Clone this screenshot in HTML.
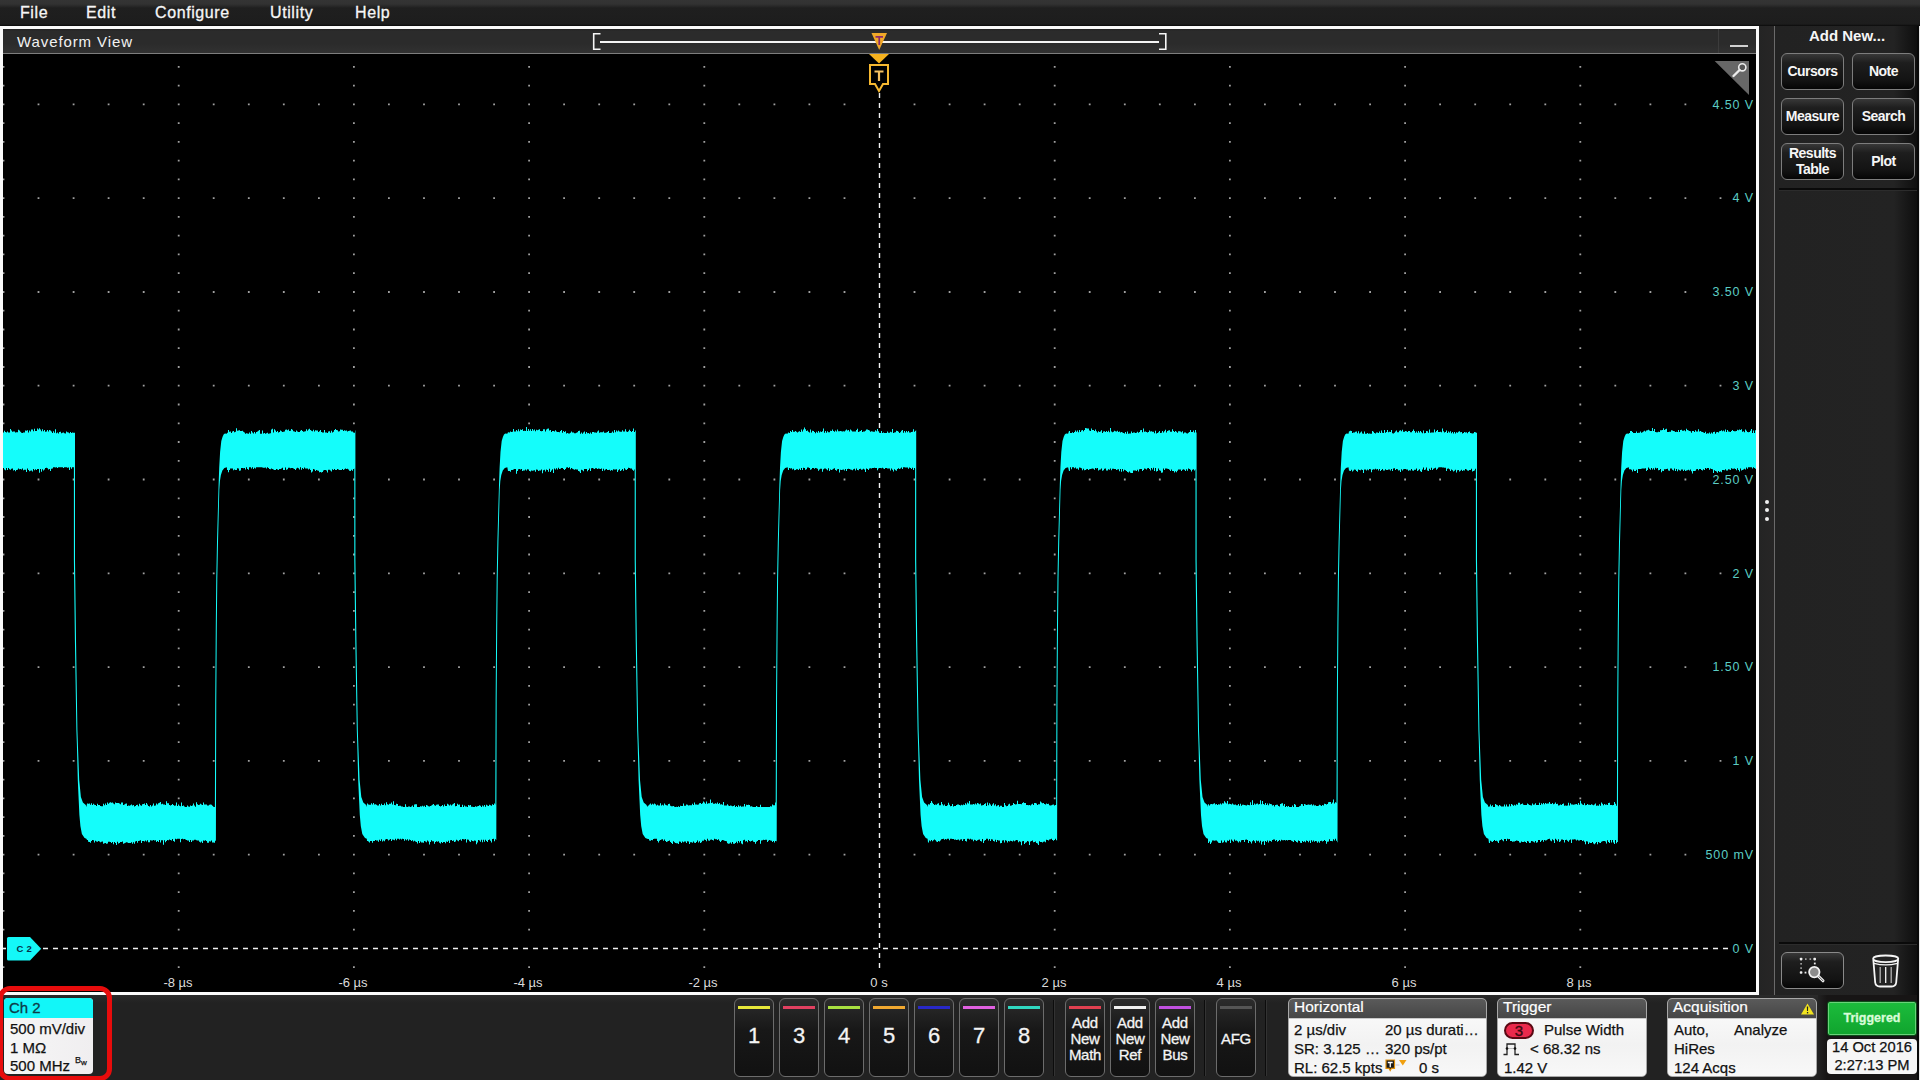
<!DOCTYPE html>
<html><head><meta charset="utf-8">
<style>
*{box-sizing:border-box;margin:0;padding:0}
html,body{width:1920px;height:1080px;overflow:hidden;background:#222;font-family:"Liberation Sans",sans-serif;position:relative}
.abs{position:absolute}
#menubar{position:absolute;left:0;top:0;width:1920px;height:26px;background:linear-gradient(#343434 0,#323232 4px,#1f1f1f 8px,#1d1d1d 24px,#0a0a0a 26px)}
.mi{position:absolute;top:4px;color:#f6f6f6;font-size:16px;line-height:18px;letter-spacing:0.6px;-webkit-text-stroke:0.3px #f6f6f6}
#frame{position:absolute;left:0;top:26px;width:1759px;height:969px;border:3px solid #fafafa;background:#000}
#titlebar{position:absolute;left:0;top:0;width:1753px;height:25px;background:linear-gradient(#222 0,#2b2b2b 2px,#2b2b2b 60%,#313131);border-bottom:1px solid #7e7e7e}
#ttl{position:absolute;left:14px;top:4px;color:#f2f2f2;font-size:15px;letter-spacing:0.9px;line-height:17px}
.yl{position:absolute;right:2px;width:90px;text-align:right;color:#5ccdc4;font-size:12.5px;letter-spacing:0.9px;line-height:14px}
.xl{position:absolute;top:946px;width:80px;text-align:center;color:#dcdcdc;font-size:13px;line-height:16px}
#rpanel{position:absolute;left:1774px;top:26px;width:146px;height:969px;background:linear-gradient(90deg,#222 0,#232323 82%,#0e0e0e 98%,#181818 100%);border-left:1px solid #6a6a6a}
.rb{position:absolute;width:63px;height:37px;border:1px solid #7d7d7d;border-radius:6px;background:linear-gradient(#383838 0%,#1e1e1e 25%,#131313 75%,#050505);color:#f6f6f6;font-size:14px;font-weight:bold;text-align:center;line-height:35px;letter-spacing:-0.5px}
#gutter{position:absolute;left:1759px;top:26px;width:15px;height:969px;background:linear-gradient(90deg,#242424,#272626)}
.dot3{position:absolute;left:1765px;width:4px;height:4px;border-radius:2px;background:#f0f0f0}
.cb{position:absolute;top:998px;width:40px;height:79px;border:1px solid #6c6c6c;border-radius:6px;background:linear-gradient(#2c2c2c,#181818 40%,#111);}
.cb i{position:absolute;left:3px;top:7px;width:32px;height:2.5px}
.cbn{position:absolute;left:0;top:24px;width:38px;text-align:center;color:#f4f4f4;font-size:22px;line-height:26px;-webkit-text-stroke:0.3px #f4f4f4}
.cba{position:absolute;left:-3px;top:16px;width:44px;text-align:center;color:#f4f4f4;font-size:15px;line-height:16px;letter-spacing:-0.3px;-webkit-text-stroke:0.3px #f4f4f4}
.cbafg{position:absolute;left:-2px;top:31px;width:42px;text-align:center;color:#f4f4f4;font-size:15px;line-height:18px;letter-spacing:-0.3px;-webkit-text-stroke:0.3px #f4f4f4}
.sep{position:absolute;top:1000px;width:2px;height:76px;background:#0c0c0c;border-right:1px solid #333}
.pn{position:absolute;top:998px;height:79px;border-radius:5px;border:1px solid #a8a8a8;background:linear-gradient(#fcfcfc,#f2f2f2 60%,#f8f8f8);overflow:hidden}
.pnh{position:absolute;left:0;top:0;right:0;height:20px;background:linear-gradient(#5a5a5a,#464646);color:#fff;font-size:15.5px;line-height:16px;padding-left:5px;border-bottom:1px solid #c8c8c8;-webkit-text-stroke:0.2px #fff}
.pt{position:absolute;color:#111;font-size:15px;line-height:18px;white-space:nowrap;-webkit-text-stroke:0.25px #111}
</style></head><body>
<div id="menubar">
 <div class="mi" style="left:20px">File</div>
 <div class="mi" style="left:86px">Edit</div>
 <div class="mi" style="left:155px">Configure</div>
 <div class="mi" style="left:270px">Utility</div>
 <div class="mi" style="left:355px">Help</div>
</div>

<div id="gutter"></div>
<div class="dot3" style="top:500px"></div>
<div class="dot3" style="top:508px"></div>
<div class="dot3" style="top:517px"></div>

<div id="rpanel">
 <div class="abs" style="left:0;top:0;width:144px;text-align:center;color:#f6f6f6;font-weight:bold;font-size:15px;line-height:18px;padding-top:1px;">Add New...</div>
 <div class="rb" style="left:6px;top:27px">Cursors</div>
 <div class="rb" style="left:77px;top:27px">Note</div>
 <div class="rb" style="left:6px;top:72px">Measure</div>
 <div class="rb" style="left:77px;top:72px">Search</div>
 <div class="rb" style="left:6px;top:117px;line-height:16px;padding-top:1px">Results<br>Table</div>
 <div class="rb" style="left:77px;top:117px">Plot</div>
 <div class="abs" style="left:4px;top:162px;width:138px;height:3px;background:#0a0a0a;border-bottom:1px solid #2c2c2c"></div>
 <div class="abs" style="left:4px;top:916px;width:138px;height:3px;background:#0a0a0a;border-bottom:1px solid #2c2c2c"></div>
 <div class="rb" style="left:6px;top:926px;height:37px;border-color:#8a8a8a"></div>
 <svg class="abs" style="left:0;top:0" width="146" height="969">
  <g fill="#f0f0f0">
   <rect x="24.8" y="931.8" width="2.6" height="2.6" rx="0.8"/><rect x="38.4" y="931.8" width="2.6" height="2.6" rx="0.8"/><rect x="24.8" y="945.2" width="2.6" height="2.6" rx="0.8"/>
   <rect x="30" y="932.3" width="1.6" height="1.6" fill="#aaa"/><rect x="34.5" y="932.3" width="1.6" height="1.6" fill="#aaa"/>
   <rect x="25.3" y="937" width="1.6" height="1.6" fill="#aaa"/><rect x="25.3" y="941.3" width="1.6" height="1.6" fill="#aaa"/>
   <rect x="38.9" y="936.6" width="1.8" height="1.8"/><rect x="29.6" y="945.7" width="1.8" height="1.8"/>
  </g>
  <line x1="43.2" y1="950" x2="48" y2="954.8" stroke="#f2f2f2" stroke-width="3" stroke-linecap="round"/>
  <line x1="43.2" y1="950" x2="48" y2="954.8" stroke="#333" stroke-width="0.8" stroke-linecap="round"/>
  <circle cx="39.3" cy="946.1" r="5.2" fill="#8c8c8c" stroke="#f4f4f4" stroke-width="1.8"/>
  <g fill="none" stroke="#f6f6f6" stroke-width="1.8">
   <ellipse cx="110.7" cy="932.8" rx="12.6" ry="3.3"/>
   <path d="M98.3 933.5 L100.2 956.5 Q100.6 960.3 105 960.5 L116.5 960.5 Q120.8 960.3 121.2 956.5 L123.1 933.5"/>
   <path d="M99 937.3 Q110.7 940.5 122.4 937.3" stroke-width="1.2"/>
  </g>
  <path d="M105.2 941 V957 M116.2 941 V957" stroke="#b4b4b4" stroke-width="1.3"/>
  <path d="M110.7 941 V957" stroke="#f4f4f4" stroke-width="1.3"/>
 </svg>
</div>

<div id="frame">
 <svg width="1753" height="963" viewBox="3 29 1753 963" style="position:absolute;left:0;top:0">
  <rect x="3" y="54" width="1753" height="938" fill="#000"/>
  <path d='M2.6 103.5 h1.8v1.8h-1.8z M37.6 103.5 h1.8v1.8h-1.8z M72.7 103.5 h1.8v1.8h-1.8z M107.7 103.5 h1.8v1.8h-1.8z M142.8 103.5 h1.8v1.8h-1.8z M177.8 103.5 h1.8v1.8h-1.8z M212.8 103.5 h1.8v1.8h-1.8z M247.9 103.5 h1.8v1.8h-1.8z M282.9 103.5 h1.8v1.8h-1.8z M318.0 103.5 h1.8v1.8h-1.8z M353.0 103.5 h1.8v1.8h-1.8z M388.0 103.5 h1.8v1.8h-1.8z M423.1 103.5 h1.8v1.8h-1.8z M458.1 103.5 h1.8v1.8h-1.8z M493.2 103.5 h1.8v1.8h-1.8z M528.2 103.5 h1.8v1.8h-1.8z M563.2 103.5 h1.8v1.8h-1.8z M598.3 103.5 h1.8v1.8h-1.8z M633.3 103.5 h1.8v1.8h-1.8z M668.4 103.5 h1.8v1.8h-1.8z M703.4 103.5 h1.8v1.8h-1.8z M738.4 103.5 h1.8v1.8h-1.8z M773.5 103.5 h1.8v1.8h-1.8z M808.5 103.5 h1.8v1.8h-1.8z M843.6 103.5 h1.8v1.8h-1.8z M913.6 103.5 h1.8v1.8h-1.8z M948.7 103.5 h1.8v1.8h-1.8z M983.7 103.5 h1.8v1.8h-1.8z M1018.8 103.5 h1.8v1.8h-1.8z M1053.8 103.5 h1.8v1.8h-1.8z M1088.8 103.5 h1.8v1.8h-1.8z M1123.9 103.5 h1.8v1.8h-1.8z M1158.9 103.5 h1.8v1.8h-1.8z M1194.0 103.5 h1.8v1.8h-1.8z M1229.0 103.5 h1.8v1.8h-1.8z M1264.0 103.5 h1.8v1.8h-1.8z M1299.1 103.5 h1.8v1.8h-1.8z M1334.1 103.5 h1.8v1.8h-1.8z M1369.2 103.5 h1.8v1.8h-1.8z M1404.2 103.5 h1.8v1.8h-1.8z M1439.2 103.5 h1.8v1.8h-1.8z M1474.3 103.5 h1.8v1.8h-1.8z M1509.3 103.5 h1.8v1.8h-1.8z M1544.4 103.5 h1.8v1.8h-1.8z M1579.4 103.5 h1.8v1.8h-1.8z M1614.4 103.5 h1.8v1.8h-1.8z M1649.5 103.5 h1.8v1.8h-1.8z M1684.5 103.5 h1.8v1.8h-1.8z M1719.6 103.5 h1.8v1.8h-1.8z M2.6 197.3 h1.8v1.8h-1.8z M37.6 197.3 h1.8v1.8h-1.8z M72.7 197.3 h1.8v1.8h-1.8z M107.7 197.3 h1.8v1.8h-1.8z M142.8 197.3 h1.8v1.8h-1.8z M177.8 197.3 h1.8v1.8h-1.8z M212.8 197.3 h1.8v1.8h-1.8z M247.9 197.3 h1.8v1.8h-1.8z M282.9 197.3 h1.8v1.8h-1.8z M318.0 197.3 h1.8v1.8h-1.8z M353.0 197.3 h1.8v1.8h-1.8z M388.0 197.3 h1.8v1.8h-1.8z M423.1 197.3 h1.8v1.8h-1.8z M458.1 197.3 h1.8v1.8h-1.8z M493.2 197.3 h1.8v1.8h-1.8z M528.2 197.3 h1.8v1.8h-1.8z M563.2 197.3 h1.8v1.8h-1.8z M598.3 197.3 h1.8v1.8h-1.8z M633.3 197.3 h1.8v1.8h-1.8z M668.4 197.3 h1.8v1.8h-1.8z M703.4 197.3 h1.8v1.8h-1.8z M738.4 197.3 h1.8v1.8h-1.8z M773.5 197.3 h1.8v1.8h-1.8z M808.5 197.3 h1.8v1.8h-1.8z M843.6 197.3 h1.8v1.8h-1.8z M913.6 197.3 h1.8v1.8h-1.8z M948.7 197.3 h1.8v1.8h-1.8z M983.7 197.3 h1.8v1.8h-1.8z M1018.8 197.3 h1.8v1.8h-1.8z M1053.8 197.3 h1.8v1.8h-1.8z M1088.8 197.3 h1.8v1.8h-1.8z M1123.9 197.3 h1.8v1.8h-1.8z M1158.9 197.3 h1.8v1.8h-1.8z M1194.0 197.3 h1.8v1.8h-1.8z M1229.0 197.3 h1.8v1.8h-1.8z M1264.0 197.3 h1.8v1.8h-1.8z M1299.1 197.3 h1.8v1.8h-1.8z M1334.1 197.3 h1.8v1.8h-1.8z M1369.2 197.3 h1.8v1.8h-1.8z M1404.2 197.3 h1.8v1.8h-1.8z M1439.2 197.3 h1.8v1.8h-1.8z M1474.3 197.3 h1.8v1.8h-1.8z M1509.3 197.3 h1.8v1.8h-1.8z M1544.4 197.3 h1.8v1.8h-1.8z M1579.4 197.3 h1.8v1.8h-1.8z M1614.4 197.3 h1.8v1.8h-1.8z M1649.5 197.3 h1.8v1.8h-1.8z M1684.5 197.3 h1.8v1.8h-1.8z M1719.6 197.3 h1.8v1.8h-1.8z M2.6 291.1 h1.8v1.8h-1.8z M37.6 291.1 h1.8v1.8h-1.8z M72.7 291.1 h1.8v1.8h-1.8z M107.7 291.1 h1.8v1.8h-1.8z M142.8 291.1 h1.8v1.8h-1.8z M177.8 291.1 h1.8v1.8h-1.8z M212.8 291.1 h1.8v1.8h-1.8z M247.9 291.1 h1.8v1.8h-1.8z M282.9 291.1 h1.8v1.8h-1.8z M318.0 291.1 h1.8v1.8h-1.8z M353.0 291.1 h1.8v1.8h-1.8z M388.0 291.1 h1.8v1.8h-1.8z M423.1 291.1 h1.8v1.8h-1.8z M458.1 291.1 h1.8v1.8h-1.8z M493.2 291.1 h1.8v1.8h-1.8z M528.2 291.1 h1.8v1.8h-1.8z M563.2 291.1 h1.8v1.8h-1.8z M598.3 291.1 h1.8v1.8h-1.8z M633.3 291.1 h1.8v1.8h-1.8z M668.4 291.1 h1.8v1.8h-1.8z M703.4 291.1 h1.8v1.8h-1.8z M738.4 291.1 h1.8v1.8h-1.8z M773.5 291.1 h1.8v1.8h-1.8z M808.5 291.1 h1.8v1.8h-1.8z M843.6 291.1 h1.8v1.8h-1.8z M913.6 291.1 h1.8v1.8h-1.8z M948.7 291.1 h1.8v1.8h-1.8z M983.7 291.1 h1.8v1.8h-1.8z M1018.8 291.1 h1.8v1.8h-1.8z M1053.8 291.1 h1.8v1.8h-1.8z M1088.8 291.1 h1.8v1.8h-1.8z M1123.9 291.1 h1.8v1.8h-1.8z M1158.9 291.1 h1.8v1.8h-1.8z M1194.0 291.1 h1.8v1.8h-1.8z M1229.0 291.1 h1.8v1.8h-1.8z M1264.0 291.1 h1.8v1.8h-1.8z M1299.1 291.1 h1.8v1.8h-1.8z M1334.1 291.1 h1.8v1.8h-1.8z M1369.2 291.1 h1.8v1.8h-1.8z M1404.2 291.1 h1.8v1.8h-1.8z M1439.2 291.1 h1.8v1.8h-1.8z M1474.3 291.1 h1.8v1.8h-1.8z M1509.3 291.1 h1.8v1.8h-1.8z M1544.4 291.1 h1.8v1.8h-1.8z M1579.4 291.1 h1.8v1.8h-1.8z M1614.4 291.1 h1.8v1.8h-1.8z M1649.5 291.1 h1.8v1.8h-1.8z M1684.5 291.1 h1.8v1.8h-1.8z M1719.6 291.1 h1.8v1.8h-1.8z M2.6 384.8 h1.8v1.8h-1.8z M37.6 384.8 h1.8v1.8h-1.8z M72.7 384.8 h1.8v1.8h-1.8z M107.7 384.8 h1.8v1.8h-1.8z M142.8 384.8 h1.8v1.8h-1.8z M177.8 384.8 h1.8v1.8h-1.8z M212.8 384.8 h1.8v1.8h-1.8z M247.9 384.8 h1.8v1.8h-1.8z M282.9 384.8 h1.8v1.8h-1.8z M318.0 384.8 h1.8v1.8h-1.8z M353.0 384.8 h1.8v1.8h-1.8z M388.0 384.8 h1.8v1.8h-1.8z M423.1 384.8 h1.8v1.8h-1.8z M458.1 384.8 h1.8v1.8h-1.8z M493.2 384.8 h1.8v1.8h-1.8z M528.2 384.8 h1.8v1.8h-1.8z M563.2 384.8 h1.8v1.8h-1.8z M598.3 384.8 h1.8v1.8h-1.8z M633.3 384.8 h1.8v1.8h-1.8z M668.4 384.8 h1.8v1.8h-1.8z M703.4 384.8 h1.8v1.8h-1.8z M738.4 384.8 h1.8v1.8h-1.8z M773.5 384.8 h1.8v1.8h-1.8z M808.5 384.8 h1.8v1.8h-1.8z M843.6 384.8 h1.8v1.8h-1.8z M913.6 384.8 h1.8v1.8h-1.8z M948.7 384.8 h1.8v1.8h-1.8z M983.7 384.8 h1.8v1.8h-1.8z M1018.8 384.8 h1.8v1.8h-1.8z M1053.8 384.8 h1.8v1.8h-1.8z M1088.8 384.8 h1.8v1.8h-1.8z M1123.9 384.8 h1.8v1.8h-1.8z M1158.9 384.8 h1.8v1.8h-1.8z M1194.0 384.8 h1.8v1.8h-1.8z M1229.0 384.8 h1.8v1.8h-1.8z M1264.0 384.8 h1.8v1.8h-1.8z M1299.1 384.8 h1.8v1.8h-1.8z M1334.1 384.8 h1.8v1.8h-1.8z M1369.2 384.8 h1.8v1.8h-1.8z M1404.2 384.8 h1.8v1.8h-1.8z M1439.2 384.8 h1.8v1.8h-1.8z M1474.3 384.8 h1.8v1.8h-1.8z M1509.3 384.8 h1.8v1.8h-1.8z M1544.4 384.8 h1.8v1.8h-1.8z M1579.4 384.8 h1.8v1.8h-1.8z M1614.4 384.8 h1.8v1.8h-1.8z M1649.5 384.8 h1.8v1.8h-1.8z M1684.5 384.8 h1.8v1.8h-1.8z M1719.6 384.8 h1.8v1.8h-1.8z M2.6 478.6 h1.8v1.8h-1.8z M37.6 478.6 h1.8v1.8h-1.8z M72.7 478.6 h1.8v1.8h-1.8z M107.7 478.6 h1.8v1.8h-1.8z M142.8 478.6 h1.8v1.8h-1.8z M177.8 478.6 h1.8v1.8h-1.8z M212.8 478.6 h1.8v1.8h-1.8z M247.9 478.6 h1.8v1.8h-1.8z M282.9 478.6 h1.8v1.8h-1.8z M318.0 478.6 h1.8v1.8h-1.8z M353.0 478.6 h1.8v1.8h-1.8z M388.0 478.6 h1.8v1.8h-1.8z M423.1 478.6 h1.8v1.8h-1.8z M458.1 478.6 h1.8v1.8h-1.8z M493.2 478.6 h1.8v1.8h-1.8z M528.2 478.6 h1.8v1.8h-1.8z M563.2 478.6 h1.8v1.8h-1.8z M598.3 478.6 h1.8v1.8h-1.8z M633.3 478.6 h1.8v1.8h-1.8z M668.4 478.6 h1.8v1.8h-1.8z M703.4 478.6 h1.8v1.8h-1.8z M738.4 478.6 h1.8v1.8h-1.8z M773.5 478.6 h1.8v1.8h-1.8z M808.5 478.6 h1.8v1.8h-1.8z M843.6 478.6 h1.8v1.8h-1.8z M913.6 478.6 h1.8v1.8h-1.8z M948.7 478.6 h1.8v1.8h-1.8z M983.7 478.6 h1.8v1.8h-1.8z M1018.8 478.6 h1.8v1.8h-1.8z M1053.8 478.6 h1.8v1.8h-1.8z M1088.8 478.6 h1.8v1.8h-1.8z M1123.9 478.6 h1.8v1.8h-1.8z M1158.9 478.6 h1.8v1.8h-1.8z M1194.0 478.6 h1.8v1.8h-1.8z M1229.0 478.6 h1.8v1.8h-1.8z M1264.0 478.6 h1.8v1.8h-1.8z M1299.1 478.6 h1.8v1.8h-1.8z M1334.1 478.6 h1.8v1.8h-1.8z M1369.2 478.6 h1.8v1.8h-1.8z M1404.2 478.6 h1.8v1.8h-1.8z M1439.2 478.6 h1.8v1.8h-1.8z M1474.3 478.6 h1.8v1.8h-1.8z M1509.3 478.6 h1.8v1.8h-1.8z M1544.4 478.6 h1.8v1.8h-1.8z M1579.4 478.6 h1.8v1.8h-1.8z M1614.4 478.6 h1.8v1.8h-1.8z M1649.5 478.6 h1.8v1.8h-1.8z M1684.5 478.6 h1.8v1.8h-1.8z M1719.6 478.6 h1.8v1.8h-1.8z M2.6 572.4 h1.8v1.8h-1.8z M37.6 572.4 h1.8v1.8h-1.8z M72.7 572.4 h1.8v1.8h-1.8z M107.7 572.4 h1.8v1.8h-1.8z M142.8 572.4 h1.8v1.8h-1.8z M177.8 572.4 h1.8v1.8h-1.8z M212.8 572.4 h1.8v1.8h-1.8z M247.9 572.4 h1.8v1.8h-1.8z M282.9 572.4 h1.8v1.8h-1.8z M318.0 572.4 h1.8v1.8h-1.8z M353.0 572.4 h1.8v1.8h-1.8z M388.0 572.4 h1.8v1.8h-1.8z M423.1 572.4 h1.8v1.8h-1.8z M458.1 572.4 h1.8v1.8h-1.8z M493.2 572.4 h1.8v1.8h-1.8z M528.2 572.4 h1.8v1.8h-1.8z M563.2 572.4 h1.8v1.8h-1.8z M598.3 572.4 h1.8v1.8h-1.8z M633.3 572.4 h1.8v1.8h-1.8z M668.4 572.4 h1.8v1.8h-1.8z M703.4 572.4 h1.8v1.8h-1.8z M738.4 572.4 h1.8v1.8h-1.8z M773.5 572.4 h1.8v1.8h-1.8z M808.5 572.4 h1.8v1.8h-1.8z M843.6 572.4 h1.8v1.8h-1.8z M913.6 572.4 h1.8v1.8h-1.8z M948.7 572.4 h1.8v1.8h-1.8z M983.7 572.4 h1.8v1.8h-1.8z M1018.8 572.4 h1.8v1.8h-1.8z M1053.8 572.4 h1.8v1.8h-1.8z M1088.8 572.4 h1.8v1.8h-1.8z M1123.9 572.4 h1.8v1.8h-1.8z M1158.9 572.4 h1.8v1.8h-1.8z M1194.0 572.4 h1.8v1.8h-1.8z M1229.0 572.4 h1.8v1.8h-1.8z M1264.0 572.4 h1.8v1.8h-1.8z M1299.1 572.4 h1.8v1.8h-1.8z M1334.1 572.4 h1.8v1.8h-1.8z M1369.2 572.4 h1.8v1.8h-1.8z M1404.2 572.4 h1.8v1.8h-1.8z M1439.2 572.4 h1.8v1.8h-1.8z M1474.3 572.4 h1.8v1.8h-1.8z M1509.3 572.4 h1.8v1.8h-1.8z M1544.4 572.4 h1.8v1.8h-1.8z M1579.4 572.4 h1.8v1.8h-1.8z M1614.4 572.4 h1.8v1.8h-1.8z M1649.5 572.4 h1.8v1.8h-1.8z M1684.5 572.4 h1.8v1.8h-1.8z M1719.6 572.4 h1.8v1.8h-1.8z M2.6 666.2 h1.8v1.8h-1.8z M37.6 666.2 h1.8v1.8h-1.8z M72.7 666.2 h1.8v1.8h-1.8z M107.7 666.2 h1.8v1.8h-1.8z M142.8 666.2 h1.8v1.8h-1.8z M177.8 666.2 h1.8v1.8h-1.8z M212.8 666.2 h1.8v1.8h-1.8z M247.9 666.2 h1.8v1.8h-1.8z M282.9 666.2 h1.8v1.8h-1.8z M318.0 666.2 h1.8v1.8h-1.8z M353.0 666.2 h1.8v1.8h-1.8z M388.0 666.2 h1.8v1.8h-1.8z M423.1 666.2 h1.8v1.8h-1.8z M458.1 666.2 h1.8v1.8h-1.8z M493.2 666.2 h1.8v1.8h-1.8z M528.2 666.2 h1.8v1.8h-1.8z M563.2 666.2 h1.8v1.8h-1.8z M598.3 666.2 h1.8v1.8h-1.8z M633.3 666.2 h1.8v1.8h-1.8z M668.4 666.2 h1.8v1.8h-1.8z M703.4 666.2 h1.8v1.8h-1.8z M738.4 666.2 h1.8v1.8h-1.8z M773.5 666.2 h1.8v1.8h-1.8z M808.5 666.2 h1.8v1.8h-1.8z M843.6 666.2 h1.8v1.8h-1.8z M913.6 666.2 h1.8v1.8h-1.8z M948.7 666.2 h1.8v1.8h-1.8z M983.7 666.2 h1.8v1.8h-1.8z M1018.8 666.2 h1.8v1.8h-1.8z M1053.8 666.2 h1.8v1.8h-1.8z M1088.8 666.2 h1.8v1.8h-1.8z M1123.9 666.2 h1.8v1.8h-1.8z M1158.9 666.2 h1.8v1.8h-1.8z M1194.0 666.2 h1.8v1.8h-1.8z M1229.0 666.2 h1.8v1.8h-1.8z M1264.0 666.2 h1.8v1.8h-1.8z M1299.1 666.2 h1.8v1.8h-1.8z M1334.1 666.2 h1.8v1.8h-1.8z M1369.2 666.2 h1.8v1.8h-1.8z M1404.2 666.2 h1.8v1.8h-1.8z M1439.2 666.2 h1.8v1.8h-1.8z M1474.3 666.2 h1.8v1.8h-1.8z M1509.3 666.2 h1.8v1.8h-1.8z M1544.4 666.2 h1.8v1.8h-1.8z M1579.4 666.2 h1.8v1.8h-1.8z M1614.4 666.2 h1.8v1.8h-1.8z M1649.5 666.2 h1.8v1.8h-1.8z M1684.5 666.2 h1.8v1.8h-1.8z M1719.6 666.2 h1.8v1.8h-1.8z M2.6 760.0 h1.8v1.8h-1.8z M37.6 760.0 h1.8v1.8h-1.8z M72.7 760.0 h1.8v1.8h-1.8z M107.7 760.0 h1.8v1.8h-1.8z M142.8 760.0 h1.8v1.8h-1.8z M177.8 760.0 h1.8v1.8h-1.8z M212.8 760.0 h1.8v1.8h-1.8z M247.9 760.0 h1.8v1.8h-1.8z M282.9 760.0 h1.8v1.8h-1.8z M318.0 760.0 h1.8v1.8h-1.8z M353.0 760.0 h1.8v1.8h-1.8z M388.0 760.0 h1.8v1.8h-1.8z M423.1 760.0 h1.8v1.8h-1.8z M458.1 760.0 h1.8v1.8h-1.8z M493.2 760.0 h1.8v1.8h-1.8z M528.2 760.0 h1.8v1.8h-1.8z M563.2 760.0 h1.8v1.8h-1.8z M598.3 760.0 h1.8v1.8h-1.8z M633.3 760.0 h1.8v1.8h-1.8z M668.4 760.0 h1.8v1.8h-1.8z M703.4 760.0 h1.8v1.8h-1.8z M738.4 760.0 h1.8v1.8h-1.8z M773.5 760.0 h1.8v1.8h-1.8z M808.5 760.0 h1.8v1.8h-1.8z M843.6 760.0 h1.8v1.8h-1.8z M913.6 760.0 h1.8v1.8h-1.8z M948.7 760.0 h1.8v1.8h-1.8z M983.7 760.0 h1.8v1.8h-1.8z M1018.8 760.0 h1.8v1.8h-1.8z M1053.8 760.0 h1.8v1.8h-1.8z M1088.8 760.0 h1.8v1.8h-1.8z M1123.9 760.0 h1.8v1.8h-1.8z M1158.9 760.0 h1.8v1.8h-1.8z M1194.0 760.0 h1.8v1.8h-1.8z M1229.0 760.0 h1.8v1.8h-1.8z M1264.0 760.0 h1.8v1.8h-1.8z M1299.1 760.0 h1.8v1.8h-1.8z M1334.1 760.0 h1.8v1.8h-1.8z M1369.2 760.0 h1.8v1.8h-1.8z M1404.2 760.0 h1.8v1.8h-1.8z M1439.2 760.0 h1.8v1.8h-1.8z M1474.3 760.0 h1.8v1.8h-1.8z M1509.3 760.0 h1.8v1.8h-1.8z M1544.4 760.0 h1.8v1.8h-1.8z M1579.4 760.0 h1.8v1.8h-1.8z M1614.4 760.0 h1.8v1.8h-1.8z M1649.5 760.0 h1.8v1.8h-1.8z M1684.5 760.0 h1.8v1.8h-1.8z M1719.6 760.0 h1.8v1.8h-1.8z M2.6 853.7 h1.8v1.8h-1.8z M37.6 853.7 h1.8v1.8h-1.8z M72.7 853.7 h1.8v1.8h-1.8z M107.7 853.7 h1.8v1.8h-1.8z M142.8 853.7 h1.8v1.8h-1.8z M177.8 853.7 h1.8v1.8h-1.8z M212.8 853.7 h1.8v1.8h-1.8z M247.9 853.7 h1.8v1.8h-1.8z M282.9 853.7 h1.8v1.8h-1.8z M318.0 853.7 h1.8v1.8h-1.8z M353.0 853.7 h1.8v1.8h-1.8z M388.0 853.7 h1.8v1.8h-1.8z M423.1 853.7 h1.8v1.8h-1.8z M458.1 853.7 h1.8v1.8h-1.8z M493.2 853.7 h1.8v1.8h-1.8z M528.2 853.7 h1.8v1.8h-1.8z M563.2 853.7 h1.8v1.8h-1.8z M598.3 853.7 h1.8v1.8h-1.8z M633.3 853.7 h1.8v1.8h-1.8z M668.4 853.7 h1.8v1.8h-1.8z M703.4 853.7 h1.8v1.8h-1.8z M738.4 853.7 h1.8v1.8h-1.8z M773.5 853.7 h1.8v1.8h-1.8z M808.5 853.7 h1.8v1.8h-1.8z M843.6 853.7 h1.8v1.8h-1.8z M913.6 853.7 h1.8v1.8h-1.8z M948.7 853.7 h1.8v1.8h-1.8z M983.7 853.7 h1.8v1.8h-1.8z M1018.8 853.7 h1.8v1.8h-1.8z M1053.8 853.7 h1.8v1.8h-1.8z M1088.8 853.7 h1.8v1.8h-1.8z M1123.9 853.7 h1.8v1.8h-1.8z M1158.9 853.7 h1.8v1.8h-1.8z M1194.0 853.7 h1.8v1.8h-1.8z M1229.0 853.7 h1.8v1.8h-1.8z M1264.0 853.7 h1.8v1.8h-1.8z M1299.1 853.7 h1.8v1.8h-1.8z M1334.1 853.7 h1.8v1.8h-1.8z M1369.2 853.7 h1.8v1.8h-1.8z M1404.2 853.7 h1.8v1.8h-1.8z M1439.2 853.7 h1.8v1.8h-1.8z M1474.3 853.7 h1.8v1.8h-1.8z M1509.3 853.7 h1.8v1.8h-1.8z M1544.4 853.7 h1.8v1.8h-1.8z M1579.4 853.7 h1.8v1.8h-1.8z M1614.4 853.7 h1.8v1.8h-1.8z M1649.5 853.7 h1.8v1.8h-1.8z M1684.5 853.7 h1.8v1.8h-1.8z M1719.6 853.7 h1.8v1.8h-1.8z M2.6 66.0 h1.8v1.8h-1.8z M2.6 84.7 h1.8v1.8h-1.8z M2.6 122.3 h1.8v1.8h-1.8z M2.6 141.0 h1.8v1.8h-1.8z M2.6 159.8 h1.8v1.8h-1.8z M2.6 178.5 h1.8v1.8h-1.8z M2.6 216.0 h1.8v1.8h-1.8z M2.6 234.8 h1.8v1.8h-1.8z M2.6 253.5 h1.8v1.8h-1.8z M2.6 272.3 h1.8v1.8h-1.8z M2.6 309.8 h1.8v1.8h-1.8z M2.6 328.6 h1.8v1.8h-1.8z M2.6 347.3 h1.8v1.8h-1.8z M2.6 366.1 h1.8v1.8h-1.8z M2.6 403.6 h1.8v1.8h-1.8z M2.6 422.4 h1.8v1.8h-1.8z M2.6 441.1 h1.8v1.8h-1.8z M2.6 459.9 h1.8v1.8h-1.8z M2.6 497.4 h1.8v1.8h-1.8z M2.6 516.1 h1.8v1.8h-1.8z M2.6 534.9 h1.8v1.8h-1.8z M2.6 553.6 h1.8v1.8h-1.8z M2.6 591.2 h1.8v1.8h-1.8z M2.6 609.9 h1.8v1.8h-1.8z M2.6 628.7 h1.8v1.8h-1.8z M2.6 647.4 h1.8v1.8h-1.8z M2.6 684.9 h1.8v1.8h-1.8z M2.6 703.7 h1.8v1.8h-1.8z M2.6 722.4 h1.8v1.8h-1.8z M2.6 741.2 h1.8v1.8h-1.8z M2.6 778.7 h1.8v1.8h-1.8z M2.6 797.5 h1.8v1.8h-1.8z M2.6 816.2 h1.8v1.8h-1.8z M2.6 835.0 h1.8v1.8h-1.8z M2.6 872.5 h1.8v1.8h-1.8z M2.6 891.3 h1.8v1.8h-1.8z M2.6 910.0 h1.8v1.8h-1.8z M2.6 928.8 h1.8v1.8h-1.8z M2.6 966.3 h1.8v1.8h-1.8z M177.8 66.0 h1.8v1.8h-1.8z M177.8 84.7 h1.8v1.8h-1.8z M177.8 122.3 h1.8v1.8h-1.8z M177.8 141.0 h1.8v1.8h-1.8z M177.8 159.8 h1.8v1.8h-1.8z M177.8 178.5 h1.8v1.8h-1.8z M177.8 216.0 h1.8v1.8h-1.8z M177.8 234.8 h1.8v1.8h-1.8z M177.8 253.5 h1.8v1.8h-1.8z M177.8 272.3 h1.8v1.8h-1.8z M177.8 309.8 h1.8v1.8h-1.8z M177.8 328.6 h1.8v1.8h-1.8z M177.8 347.3 h1.8v1.8h-1.8z M177.8 366.1 h1.8v1.8h-1.8z M177.8 403.6 h1.8v1.8h-1.8z M177.8 422.4 h1.8v1.8h-1.8z M177.8 441.1 h1.8v1.8h-1.8z M177.8 459.9 h1.8v1.8h-1.8z M177.8 497.4 h1.8v1.8h-1.8z M177.8 516.1 h1.8v1.8h-1.8z M177.8 534.9 h1.8v1.8h-1.8z M177.8 553.6 h1.8v1.8h-1.8z M177.8 591.2 h1.8v1.8h-1.8z M177.8 609.9 h1.8v1.8h-1.8z M177.8 628.7 h1.8v1.8h-1.8z M177.8 647.4 h1.8v1.8h-1.8z M177.8 684.9 h1.8v1.8h-1.8z M177.8 703.7 h1.8v1.8h-1.8z M177.8 722.4 h1.8v1.8h-1.8z M177.8 741.2 h1.8v1.8h-1.8z M177.8 778.7 h1.8v1.8h-1.8z M177.8 797.5 h1.8v1.8h-1.8z M177.8 816.2 h1.8v1.8h-1.8z M177.8 835.0 h1.8v1.8h-1.8z M177.8 872.5 h1.8v1.8h-1.8z M177.8 891.3 h1.8v1.8h-1.8z M177.8 910.0 h1.8v1.8h-1.8z M177.8 928.8 h1.8v1.8h-1.8z M177.8 966.3 h1.8v1.8h-1.8z M353.0 66.0 h1.8v1.8h-1.8z M353.0 84.7 h1.8v1.8h-1.8z M353.0 122.3 h1.8v1.8h-1.8z M353.0 141.0 h1.8v1.8h-1.8z M353.0 159.8 h1.8v1.8h-1.8z M353.0 178.5 h1.8v1.8h-1.8z M353.0 216.0 h1.8v1.8h-1.8z M353.0 234.8 h1.8v1.8h-1.8z M353.0 253.5 h1.8v1.8h-1.8z M353.0 272.3 h1.8v1.8h-1.8z M353.0 309.8 h1.8v1.8h-1.8z M353.0 328.6 h1.8v1.8h-1.8z M353.0 347.3 h1.8v1.8h-1.8z M353.0 366.1 h1.8v1.8h-1.8z M353.0 403.6 h1.8v1.8h-1.8z M353.0 422.4 h1.8v1.8h-1.8z M353.0 441.1 h1.8v1.8h-1.8z M353.0 459.9 h1.8v1.8h-1.8z M353.0 497.4 h1.8v1.8h-1.8z M353.0 516.1 h1.8v1.8h-1.8z M353.0 534.9 h1.8v1.8h-1.8z M353.0 553.6 h1.8v1.8h-1.8z M353.0 591.2 h1.8v1.8h-1.8z M353.0 609.9 h1.8v1.8h-1.8z M353.0 628.7 h1.8v1.8h-1.8z M353.0 647.4 h1.8v1.8h-1.8z M353.0 684.9 h1.8v1.8h-1.8z M353.0 703.7 h1.8v1.8h-1.8z M353.0 722.4 h1.8v1.8h-1.8z M353.0 741.2 h1.8v1.8h-1.8z M353.0 778.7 h1.8v1.8h-1.8z M353.0 797.5 h1.8v1.8h-1.8z M353.0 816.2 h1.8v1.8h-1.8z M353.0 835.0 h1.8v1.8h-1.8z M353.0 872.5 h1.8v1.8h-1.8z M353.0 891.3 h1.8v1.8h-1.8z M353.0 910.0 h1.8v1.8h-1.8z M353.0 928.8 h1.8v1.8h-1.8z M353.0 966.3 h1.8v1.8h-1.8z M528.2 66.0 h1.8v1.8h-1.8z M528.2 84.7 h1.8v1.8h-1.8z M528.2 122.3 h1.8v1.8h-1.8z M528.2 141.0 h1.8v1.8h-1.8z M528.2 159.8 h1.8v1.8h-1.8z M528.2 178.5 h1.8v1.8h-1.8z M528.2 216.0 h1.8v1.8h-1.8z M528.2 234.8 h1.8v1.8h-1.8z M528.2 253.5 h1.8v1.8h-1.8z M528.2 272.3 h1.8v1.8h-1.8z M528.2 309.8 h1.8v1.8h-1.8z M528.2 328.6 h1.8v1.8h-1.8z M528.2 347.3 h1.8v1.8h-1.8z M528.2 366.1 h1.8v1.8h-1.8z M528.2 403.6 h1.8v1.8h-1.8z M528.2 422.4 h1.8v1.8h-1.8z M528.2 441.1 h1.8v1.8h-1.8z M528.2 459.9 h1.8v1.8h-1.8z M528.2 497.4 h1.8v1.8h-1.8z M528.2 516.1 h1.8v1.8h-1.8z M528.2 534.9 h1.8v1.8h-1.8z M528.2 553.6 h1.8v1.8h-1.8z M528.2 591.2 h1.8v1.8h-1.8z M528.2 609.9 h1.8v1.8h-1.8z M528.2 628.7 h1.8v1.8h-1.8z M528.2 647.4 h1.8v1.8h-1.8z M528.2 684.9 h1.8v1.8h-1.8z M528.2 703.7 h1.8v1.8h-1.8z M528.2 722.4 h1.8v1.8h-1.8z M528.2 741.2 h1.8v1.8h-1.8z M528.2 778.7 h1.8v1.8h-1.8z M528.2 797.5 h1.8v1.8h-1.8z M528.2 816.2 h1.8v1.8h-1.8z M528.2 835.0 h1.8v1.8h-1.8z M528.2 872.5 h1.8v1.8h-1.8z M528.2 891.3 h1.8v1.8h-1.8z M528.2 910.0 h1.8v1.8h-1.8z M528.2 928.8 h1.8v1.8h-1.8z M528.2 966.3 h1.8v1.8h-1.8z M703.4 66.0 h1.8v1.8h-1.8z M703.4 84.7 h1.8v1.8h-1.8z M703.4 122.3 h1.8v1.8h-1.8z M703.4 141.0 h1.8v1.8h-1.8z M703.4 159.8 h1.8v1.8h-1.8z M703.4 178.5 h1.8v1.8h-1.8z M703.4 216.0 h1.8v1.8h-1.8z M703.4 234.8 h1.8v1.8h-1.8z M703.4 253.5 h1.8v1.8h-1.8z M703.4 272.3 h1.8v1.8h-1.8z M703.4 309.8 h1.8v1.8h-1.8z M703.4 328.6 h1.8v1.8h-1.8z M703.4 347.3 h1.8v1.8h-1.8z M703.4 366.1 h1.8v1.8h-1.8z M703.4 403.6 h1.8v1.8h-1.8z M703.4 422.4 h1.8v1.8h-1.8z M703.4 441.1 h1.8v1.8h-1.8z M703.4 459.9 h1.8v1.8h-1.8z M703.4 497.4 h1.8v1.8h-1.8z M703.4 516.1 h1.8v1.8h-1.8z M703.4 534.9 h1.8v1.8h-1.8z M703.4 553.6 h1.8v1.8h-1.8z M703.4 591.2 h1.8v1.8h-1.8z M703.4 609.9 h1.8v1.8h-1.8z M703.4 628.7 h1.8v1.8h-1.8z M703.4 647.4 h1.8v1.8h-1.8z M703.4 684.9 h1.8v1.8h-1.8z M703.4 703.7 h1.8v1.8h-1.8z M703.4 722.4 h1.8v1.8h-1.8z M703.4 741.2 h1.8v1.8h-1.8z M703.4 778.7 h1.8v1.8h-1.8z M703.4 797.5 h1.8v1.8h-1.8z M703.4 816.2 h1.8v1.8h-1.8z M703.4 835.0 h1.8v1.8h-1.8z M703.4 872.5 h1.8v1.8h-1.8z M703.4 891.3 h1.8v1.8h-1.8z M703.4 910.0 h1.8v1.8h-1.8z M703.4 928.8 h1.8v1.8h-1.8z M703.4 966.3 h1.8v1.8h-1.8z M1053.8 66.0 h1.8v1.8h-1.8z M1053.8 84.7 h1.8v1.8h-1.8z M1053.8 122.3 h1.8v1.8h-1.8z M1053.8 141.0 h1.8v1.8h-1.8z M1053.8 159.8 h1.8v1.8h-1.8z M1053.8 178.5 h1.8v1.8h-1.8z M1053.8 216.0 h1.8v1.8h-1.8z M1053.8 234.8 h1.8v1.8h-1.8z M1053.8 253.5 h1.8v1.8h-1.8z M1053.8 272.3 h1.8v1.8h-1.8z M1053.8 309.8 h1.8v1.8h-1.8z M1053.8 328.6 h1.8v1.8h-1.8z M1053.8 347.3 h1.8v1.8h-1.8z M1053.8 366.1 h1.8v1.8h-1.8z M1053.8 403.6 h1.8v1.8h-1.8z M1053.8 422.4 h1.8v1.8h-1.8z M1053.8 441.1 h1.8v1.8h-1.8z M1053.8 459.9 h1.8v1.8h-1.8z M1053.8 497.4 h1.8v1.8h-1.8z M1053.8 516.1 h1.8v1.8h-1.8z M1053.8 534.9 h1.8v1.8h-1.8z M1053.8 553.6 h1.8v1.8h-1.8z M1053.8 591.2 h1.8v1.8h-1.8z M1053.8 609.9 h1.8v1.8h-1.8z M1053.8 628.7 h1.8v1.8h-1.8z M1053.8 647.4 h1.8v1.8h-1.8z M1053.8 684.9 h1.8v1.8h-1.8z M1053.8 703.7 h1.8v1.8h-1.8z M1053.8 722.4 h1.8v1.8h-1.8z M1053.8 741.2 h1.8v1.8h-1.8z M1053.8 778.7 h1.8v1.8h-1.8z M1053.8 797.5 h1.8v1.8h-1.8z M1053.8 816.2 h1.8v1.8h-1.8z M1053.8 835.0 h1.8v1.8h-1.8z M1053.8 872.5 h1.8v1.8h-1.8z M1053.8 891.3 h1.8v1.8h-1.8z M1053.8 910.0 h1.8v1.8h-1.8z M1053.8 928.8 h1.8v1.8h-1.8z M1053.8 966.3 h1.8v1.8h-1.8z M1229.0 66.0 h1.8v1.8h-1.8z M1229.0 84.7 h1.8v1.8h-1.8z M1229.0 122.3 h1.8v1.8h-1.8z M1229.0 141.0 h1.8v1.8h-1.8z M1229.0 159.8 h1.8v1.8h-1.8z M1229.0 178.5 h1.8v1.8h-1.8z M1229.0 216.0 h1.8v1.8h-1.8z M1229.0 234.8 h1.8v1.8h-1.8z M1229.0 253.5 h1.8v1.8h-1.8z M1229.0 272.3 h1.8v1.8h-1.8z M1229.0 309.8 h1.8v1.8h-1.8z M1229.0 328.6 h1.8v1.8h-1.8z M1229.0 347.3 h1.8v1.8h-1.8z M1229.0 366.1 h1.8v1.8h-1.8z M1229.0 403.6 h1.8v1.8h-1.8z M1229.0 422.4 h1.8v1.8h-1.8z M1229.0 441.1 h1.8v1.8h-1.8z M1229.0 459.9 h1.8v1.8h-1.8z M1229.0 497.4 h1.8v1.8h-1.8z M1229.0 516.1 h1.8v1.8h-1.8z M1229.0 534.9 h1.8v1.8h-1.8z M1229.0 553.6 h1.8v1.8h-1.8z M1229.0 591.2 h1.8v1.8h-1.8z M1229.0 609.9 h1.8v1.8h-1.8z M1229.0 628.7 h1.8v1.8h-1.8z M1229.0 647.4 h1.8v1.8h-1.8z M1229.0 684.9 h1.8v1.8h-1.8z M1229.0 703.7 h1.8v1.8h-1.8z M1229.0 722.4 h1.8v1.8h-1.8z M1229.0 741.2 h1.8v1.8h-1.8z M1229.0 778.7 h1.8v1.8h-1.8z M1229.0 797.5 h1.8v1.8h-1.8z M1229.0 816.2 h1.8v1.8h-1.8z M1229.0 835.0 h1.8v1.8h-1.8z M1229.0 872.5 h1.8v1.8h-1.8z M1229.0 891.3 h1.8v1.8h-1.8z M1229.0 910.0 h1.8v1.8h-1.8z M1229.0 928.8 h1.8v1.8h-1.8z M1229.0 966.3 h1.8v1.8h-1.8z M1404.2 66.0 h1.8v1.8h-1.8z M1404.2 84.7 h1.8v1.8h-1.8z M1404.2 122.3 h1.8v1.8h-1.8z M1404.2 141.0 h1.8v1.8h-1.8z M1404.2 159.8 h1.8v1.8h-1.8z M1404.2 178.5 h1.8v1.8h-1.8z M1404.2 216.0 h1.8v1.8h-1.8z M1404.2 234.8 h1.8v1.8h-1.8z M1404.2 253.5 h1.8v1.8h-1.8z M1404.2 272.3 h1.8v1.8h-1.8z M1404.2 309.8 h1.8v1.8h-1.8z M1404.2 328.6 h1.8v1.8h-1.8z M1404.2 347.3 h1.8v1.8h-1.8z M1404.2 366.1 h1.8v1.8h-1.8z M1404.2 403.6 h1.8v1.8h-1.8z M1404.2 422.4 h1.8v1.8h-1.8z M1404.2 441.1 h1.8v1.8h-1.8z M1404.2 459.9 h1.8v1.8h-1.8z M1404.2 497.4 h1.8v1.8h-1.8z M1404.2 516.1 h1.8v1.8h-1.8z M1404.2 534.9 h1.8v1.8h-1.8z M1404.2 553.6 h1.8v1.8h-1.8z M1404.2 591.2 h1.8v1.8h-1.8z M1404.2 609.9 h1.8v1.8h-1.8z M1404.2 628.7 h1.8v1.8h-1.8z M1404.2 647.4 h1.8v1.8h-1.8z M1404.2 684.9 h1.8v1.8h-1.8z M1404.2 703.7 h1.8v1.8h-1.8z M1404.2 722.4 h1.8v1.8h-1.8z M1404.2 741.2 h1.8v1.8h-1.8z M1404.2 778.7 h1.8v1.8h-1.8z M1404.2 797.5 h1.8v1.8h-1.8z M1404.2 816.2 h1.8v1.8h-1.8z M1404.2 835.0 h1.8v1.8h-1.8z M1404.2 872.5 h1.8v1.8h-1.8z M1404.2 891.3 h1.8v1.8h-1.8z M1404.2 910.0 h1.8v1.8h-1.8z M1404.2 928.8 h1.8v1.8h-1.8z M1404.2 966.3 h1.8v1.8h-1.8z M1579.4 66.0 h1.8v1.8h-1.8z M1579.4 84.7 h1.8v1.8h-1.8z M1579.4 122.3 h1.8v1.8h-1.8z M1579.4 141.0 h1.8v1.8h-1.8z M1579.4 159.8 h1.8v1.8h-1.8z M1579.4 178.5 h1.8v1.8h-1.8z M1579.4 216.0 h1.8v1.8h-1.8z M1579.4 234.8 h1.8v1.8h-1.8z M1579.4 253.5 h1.8v1.8h-1.8z M1579.4 272.3 h1.8v1.8h-1.8z M1579.4 309.8 h1.8v1.8h-1.8z M1579.4 328.6 h1.8v1.8h-1.8z M1579.4 347.3 h1.8v1.8h-1.8z M1579.4 366.1 h1.8v1.8h-1.8z M1579.4 403.6 h1.8v1.8h-1.8z M1579.4 422.4 h1.8v1.8h-1.8z M1579.4 441.1 h1.8v1.8h-1.8z M1579.4 459.9 h1.8v1.8h-1.8z M1579.4 497.4 h1.8v1.8h-1.8z M1579.4 516.1 h1.8v1.8h-1.8z M1579.4 534.9 h1.8v1.8h-1.8z M1579.4 553.6 h1.8v1.8h-1.8z M1579.4 591.2 h1.8v1.8h-1.8z M1579.4 609.9 h1.8v1.8h-1.8z M1579.4 628.7 h1.8v1.8h-1.8z M1579.4 647.4 h1.8v1.8h-1.8z M1579.4 684.9 h1.8v1.8h-1.8z M1579.4 703.7 h1.8v1.8h-1.8z M1579.4 722.4 h1.8v1.8h-1.8z M1579.4 741.2 h1.8v1.8h-1.8z M1579.4 778.7 h1.8v1.8h-1.8z M1579.4 797.5 h1.8v1.8h-1.8z M1579.4 816.2 h1.8v1.8h-1.8z M1579.4 835.0 h1.8v1.8h-1.8z M1579.4 872.5 h1.8v1.8h-1.8z M1579.4 891.3 h1.8v1.8h-1.8z M1579.4 910.0 h1.8v1.8h-1.8z M1579.4 928.8 h1.8v1.8h-1.8z M1579.4 966.3 h1.8v1.8h-1.8z' fill='#a0a0a0'/>
  <line x1="879.5" y1="93" x2="879.5" y2="969" stroke="#f0f0f0" stroke-width="1.4" stroke-dasharray="5 5"/>
  <line x1="43" y1="948.5" x2="1728" y2="948.5" stroke="#f0f0f0" stroke-width="1.6" stroke-dasharray="5 5"/>
  <line x1="3" y1="948.5" x2="6" y2="948.5" stroke="#f0f0f0" stroke-width="1.6"/>
  <path d="M3.00,432.5L4.00,432.5L4.00,430.7L5.00,430.7L5.00,432.0L6.00,432.0L6.00,432.5L7.00,432.5L7.00,431.5L8.00,431.5L8.00,432.5L9.00,432.5L9.00,432.5L10.00,432.5L10.00,428.9L11.00,428.9L11.00,430.4L12.00,430.4L12.00,431.8L13.00,431.8L13.00,431.6L14.00,431.6L14.00,431.5L15.00,431.5L15.00,432.4L16.00,432.4L16.00,432.2L17.00,432.2L17.00,432.3L18.00,432.3L18.00,429.8L19.00,429.8L19.00,430.5L20.00,430.5L20.00,431.7L21.00,431.7L21.00,432.8L22.00,432.8L22.00,433.0L23.00,433.0L23.00,432.6L24.00,432.6L24.00,432.6L25.00,432.6L25.00,430.6L26.00,430.6L26.00,430.8L27.00,430.8L27.00,430.3L28.00,430.3L28.00,432.4L29.00,432.4L29.00,430.4L30.00,430.4L30.00,431.6L31.00,431.6L31.00,429.6L32.00,429.6L32.00,429.4L33.00,429.4L33.00,431.2L34.00,431.2L34.00,428.8L35.00,428.8L35.00,431.1L36.00,431.1L36.00,431.1L37.00,431.1L37.00,428.5L38.00,428.5L38.00,429.6L39.00,429.6L39.00,428.3L40.00,428.3L40.00,429.5L41.00,429.5L41.00,431.3L42.00,431.3L42.00,429.3L43.00,429.3L43.00,431.3L44.00,431.3L44.00,430.1L45.00,430.1L45.00,431.7L46.00,431.7L46.00,431.6L47.00,431.6L47.00,429.9L48.00,429.9L48.00,431.5L49.00,431.5L49.00,430.1L50.00,430.1L50.00,430.6L51.00,430.6L51.00,431.5L52.00,431.5L52.00,432.9L53.00,432.9L53.00,431.3L54.00,431.3L54.00,432.7L55.00,432.7L55.00,429.3L56.00,429.3L56.00,433.2L57.00,433.2L57.00,432.6L58.00,432.6L58.00,433.4L59.00,433.4L59.00,432.0L60.00,432.0L60.00,431.7L61.00,431.7L61.00,433.3L62.00,433.3L62.00,432.7L63.00,432.7L63.00,432.6L64.00,432.6L64.00,433.2L65.00,433.2L65.00,433.4L66.00,433.4L66.00,431.5L67.00,431.5L67.00,432.3L68.00,432.3L68.00,432.4L69.00,432.4L69.00,433.2L70.00,433.2L70.00,432.0L71.00,432.0L71.00,433.1L72.00,433.1L72.00,432.4L73.00,432.4L73.00,432.7L74.00,432.7L74.00,432.8L75.00,432.8L75.00,468.0L75.00,560.0L76.00,640.0L77.40,730.0L77.90,745.0L79.20,780.0L80.90,797.0L82.90,802.5L85.80,805.0L86.40,807.0L87.00,803.6L88.00,803.6L88.00,803.7L89.00,803.7L89.00,803.5L90.00,803.5L90.00,804.8L91.00,804.8L91.00,803.3L92.00,803.3L92.00,804.9L93.00,804.9L93.00,803.7L94.00,803.7L94.00,804.7L95.00,804.7L95.00,805.0L96.00,805.0L96.00,806.0L97.00,806.0L97.00,803.8L98.00,803.8L98.00,805.0L99.00,805.0L99.00,805.1L100.00,805.1L100.00,805.9L101.00,805.9L101.00,806.3L102.00,806.3L102.00,806.3L103.00,806.3L103.00,803.7L104.00,803.7L104.00,805.3L105.00,805.3L105.00,803.6L106.00,803.6L106.00,805.1L107.00,805.1L107.00,802.6L108.00,802.6L108.00,803.8L109.00,803.8L109.00,802.7L110.00,802.7L110.00,802.2L111.00,802.2L111.00,802.8L112.00,802.8L112.00,802.4L113.00,802.4L113.00,803.4L114.00,803.4L114.00,804.2L115.00,804.2L115.00,802.6L116.00,802.6L116.00,803.1L117.00,803.1L117.00,803.0L118.00,803.0L118.00,803.1L119.00,803.1L119.00,803.5L120.00,803.5L120.00,804.3L121.00,804.3L121.00,802.4L122.00,802.4L122.00,802.6L123.00,802.6L123.00,805.1L124.00,805.1L124.00,804.6L125.00,804.6L125.00,803.8L126.00,803.8L126.00,803.4L127.00,803.4L127.00,806.0L128.00,806.0L128.00,805.6L129.00,805.6L129.00,805.8L130.00,805.8L130.00,805.3L131.00,805.3L131.00,804.6L132.00,804.6L132.00,805.6L133.00,805.6L133.00,804.9L134.00,804.9L134.00,806.5L135.00,806.5L135.00,806.0L136.00,806.0L136.00,805.1L137.00,805.1L137.00,804.8L138.00,804.8L138.00,806.2L139.00,806.2L139.00,803.7L140.00,803.7L140.00,805.2L141.00,805.2L141.00,805.8L142.00,805.8L142.00,804.3L143.00,804.3L143.00,804.1L144.00,804.1L144.00,803.5L145.00,803.5L145.00,804.9L146.00,804.9L146.00,803.1L147.00,803.1L147.00,804.4L148.00,804.4L148.00,806.1L149.00,806.1L149.00,806.5L150.00,806.5L150.00,804.9L151.00,804.9L151.00,806.5L152.00,806.5L152.00,805.6L153.00,805.6L153.00,803.4L154.00,803.4L154.00,805.8L155.00,805.8L155.00,805.5L156.00,805.5L156.00,803.4L157.00,803.4L157.00,804.5L158.00,804.5L158.00,803.3L159.00,803.3L159.00,802.7L160.00,802.7L160.00,802.1L161.00,802.1L161.00,804.2L162.00,804.2L162.00,803.7L163.00,803.7L163.00,804.4L164.00,804.4L164.00,804.4L165.00,804.4L165.00,804.9L166.00,804.9L166.00,801.2L167.00,801.2L167.00,803.2L168.00,803.2L168.00,803.3L169.00,803.3L169.00,804.9L170.00,804.9L170.00,805.6L171.00,805.6L171.00,804.9L172.00,804.9L172.00,804.1L173.00,804.1L173.00,805.1L174.00,805.1L174.00,805.7L175.00,805.7L175.00,805.4L176.00,805.4L176.00,802.6L177.00,802.6L177.00,805.9L178.00,805.9L178.00,804.5L179.00,804.5L179.00,805.7L180.00,805.7L180.00,806.3L181.00,806.3L181.00,802.4L182.00,802.4L182.00,806.0L183.00,806.0L183.00,805.6L184.00,805.6L184.00,806.5L185.00,806.5L185.00,806.9L186.00,806.9L186.00,807.0L187.00,807.0L187.00,805.5L188.00,805.5L188.00,806.6L189.00,806.6L189.00,806.7L190.00,806.7L190.00,805.4L191.00,805.4L191.00,806.1L192.00,806.1L192.00,805.4L193.00,805.4L193.00,803.4L194.00,803.4L194.00,805.4L195.00,805.4L195.00,806.7L196.00,806.7L196.00,802.2L197.00,802.2L197.00,804.2L198.00,804.2L198.00,805.1L199.00,805.1L199.00,804.8L200.00,804.8L200.00,803.8L201.00,803.8L201.00,804.6L202.00,804.6L202.00,805.0L203.00,805.0L203.00,802.4L204.00,802.4L204.00,804.5L205.00,804.5L205.00,804.6L206.00,804.6L206.00,804.5L207.00,804.5L207.00,805.4L208.00,805.4L208.00,805.6L209.00,805.6L209.00,804.7L210.00,804.7L210.00,804.5L211.00,804.5L211.00,804.8L212.00,804.8L212.00,805.8L213.00,805.8L213.00,806.8L214.00,806.8L214.00,807.0L214.90,807.0L214.90,806.0L215.25,700.0L215.80,625.0L216.30,578.0L217.00,542.0L217.90,510.0L218.60,485.0L219.20,468.0L220.10,452.0L221.30,441.0L222.50,437.0L223.60,434.5L224.90,433.5L226.90,433.8L227.00,432.8L228.00,432.8L228.00,430.0L229.00,430.0L229.00,431.7L230.00,431.7L230.00,431.6L231.00,431.6L231.00,433.0L232.00,433.0L232.00,431.4L233.00,431.4L233.00,431.0L234.00,431.0L234.00,432.2L235.00,432.2L235.00,431.8L236.00,431.8L236.00,428.3L237.00,428.3L237.00,430.8L238.00,430.8L238.00,430.5L239.00,430.5L239.00,430.2L240.00,430.2L240.00,431.1L241.00,431.1L241.00,431.1L242.00,431.1L242.00,430.7L243.00,430.7L243.00,431.7L244.00,431.7L244.00,432.6L245.00,432.6L245.00,433.8L246.00,433.8L246.00,433.2L247.00,433.2L247.00,433.4L248.00,433.4L248.00,433.8L249.00,433.8L249.00,432.4L250.00,432.4L250.00,433.7L251.00,433.7L251.00,430.9L252.00,430.9L252.00,432.4L253.00,432.4L253.00,433.6L254.00,433.6L254.00,432.1L255.00,432.1L255.00,433.5L256.00,433.5L256.00,431.9L257.00,431.9L257.00,431.6L258.00,431.6L258.00,430.7L259.00,430.7L259.00,430.0L260.00,430.0L260.00,433.7L261.00,433.7L261.00,433.7L262.00,433.7L262.00,430.5L263.00,430.5L263.00,433.5L264.00,433.5L264.00,433.1L265.00,433.1L265.00,433.8L266.00,433.8L266.00,433.2L267.00,433.2L267.00,432.7L268.00,432.7L268.00,433.7L269.00,433.7L269.00,433.6L270.00,433.6L270.00,433.2L271.00,433.2L271.00,429.4L272.00,429.4L272.00,428.7L273.00,428.7L273.00,432.6L274.00,432.6L274.00,429.2L275.00,429.2L275.00,430.6L276.00,430.6L276.00,432.1L277.00,432.1L277.00,431.0L278.00,431.0L278.00,432.5L279.00,432.5L279.00,431.9L280.00,431.9L280.00,430.6L281.00,430.6L281.00,431.3L282.00,431.3L282.00,432.1L283.00,432.1L283.00,431.8L284.00,431.8L284.00,431.4L285.00,431.4L285.00,429.8L286.00,429.8L286.00,429.4L287.00,429.4L287.00,430.3L288.00,430.3L288.00,429.6L289.00,429.6L289.00,430.9L290.00,430.9L290.00,430.7L291.00,430.7L291.00,429.1L292.00,429.1L292.00,429.8L293.00,429.8L293.00,431.2L294.00,431.2L294.00,431.6L295.00,431.6L295.00,432.1L296.00,432.1L296.00,430.4L297.00,430.4L297.00,431.5L298.00,431.5L298.00,431.9L299.00,431.9L299.00,432.1L300.00,432.1L300.00,430.8L301.00,430.8L301.00,430.0L302.00,430.0L302.00,431.0L303.00,431.0L303.00,431.8L304.00,431.8L304.00,431.6L305.00,431.6L305.00,431.3L306.00,431.3L306.00,429.2L307.00,429.2L307.00,430.8L308.00,430.8L308.00,429.4L309.00,429.4L309.00,428.8L310.00,428.8L310.00,429.9L311.00,429.9L311.00,430.8L312.00,430.8L312.00,431.2L313.00,431.2L313.00,429.7L314.00,429.7L314.00,431.4L315.00,431.4L315.00,430.3L316.00,430.3L316.00,430.5L317.00,430.5L317.00,430.5L318.00,430.5L318.00,431.9L319.00,431.9L319.00,431.3L320.00,431.3L320.00,430.1L321.00,430.1L321.00,432.0L322.00,432.0L322.00,432.4L323.00,432.4L323.00,432.4L324.00,432.4L324.00,430.0L325.00,430.0L325.00,432.6L326.00,432.6L326.00,432.6L327.00,432.6L327.00,432.9L328.00,432.9L328.00,431.4L329.00,431.4L329.00,431.2L330.00,431.2L330.00,432.7L331.00,432.7L331.00,430.8L332.00,430.8L332.00,432.6L333.00,432.6L333.00,431.7L334.00,431.7L334.00,430.0L335.00,430.0L335.00,429.1L336.00,429.1L336.00,430.1L337.00,430.1L337.00,430.3L338.00,430.3L338.00,431.5L339.00,431.5L339.00,431.3L340.00,431.3L340.00,429.6L341.00,429.6L341.00,429.8L342.00,429.8L342.00,429.8L343.00,429.8L343.00,430.9L344.00,430.9L344.00,430.2L345.00,430.2L345.00,430.8L346.00,430.8L346.00,430.5L347.00,430.5L347.00,431.5L348.00,431.5L348.00,431.0L349.00,431.0L349.00,430.7L350.00,430.7L350.00,430.6L351.00,430.6L351.00,431.6L352.00,431.6L352.00,431.5L353.00,431.5L353.00,432.4L354.00,432.4L354.00,432.8L355.00,432.8L355.00,430.4L355.40,430.4L355.40,468.0L355.40,560.0L356.40,640.0L357.80,730.0L358.30,745.0L359.60,780.0L361.30,797.0L363.30,802.5L366.20,805.0L366.80,807.0L367.00,803.4L368.00,803.4L368.00,804.4L369.00,804.4L369.00,804.7L370.00,804.7L370.00,804.8L371.00,804.8L371.00,803.3L372.00,803.3L372.00,804.6L373.00,804.6L373.00,802.9L374.00,802.9L374.00,804.6L375.00,804.6L375.00,804.2L376.00,804.2L376.00,804.7L377.00,804.7L377.00,805.5L378.00,805.5L378.00,805.4L379.00,805.4L379.00,804.1L380.00,804.1L380.00,805.6L381.00,805.6L381.00,803.8L382.00,803.8L382.00,805.0L383.00,805.0L383.00,805.0L384.00,805.0L384.00,803.5L385.00,803.5L385.00,805.2L386.00,805.2L386.00,802.3L387.00,802.3L387.00,804.3L388.00,804.3L388.00,804.7L389.00,804.7L389.00,803.7L390.00,803.7L390.00,803.8L391.00,803.8L391.00,802.6L392.00,802.6L392.00,804.4L393.00,804.4L393.00,801.3L394.00,801.3L394.00,805.1L395.00,805.1L395.00,805.3L396.00,805.3L396.00,803.8L397.00,803.8L397.00,803.9L398.00,803.9L398.00,806.0L399.00,806.0L399.00,805.8L400.00,805.8L400.00,805.7L401.00,805.7L401.00,806.5L402.00,806.5L402.00,806.5L403.00,806.5L403.00,807.0L404.00,807.0L404.00,806.9L405.00,806.9L405.00,804.2L406.00,804.2L406.00,806.8L407.00,806.8L407.00,806.9L408.00,806.9L408.00,806.4L409.00,806.4L409.00,806.6L410.00,806.6L410.00,806.9L411.00,806.9L411.00,806.4L412.00,806.4L412.00,805.4L413.00,805.4L413.00,807.0L414.00,807.0L414.00,804.5L415.00,804.5L415.00,804.2L416.00,804.2L416.00,804.3L417.00,804.3L417.00,807.0L418.00,807.0L418.00,806.9L419.00,806.9L419.00,807.0L420.00,807.0L420.00,806.2L421.00,806.2L421.00,806.6L422.00,806.6L422.00,805.7L423.00,805.7L423.00,806.6L424.00,806.6L424.00,805.7L425.00,805.7L425.00,807.0L426.00,807.0L426.00,805.1L427.00,805.1L427.00,805.4L428.00,805.4L428.00,806.3L429.00,806.3L429.00,806.4L430.00,806.4L430.00,806.1L431.00,806.1L431.00,805.4L432.00,805.4L432.00,804.7L433.00,804.7L433.00,804.0L434.00,804.0L434.00,805.3L435.00,805.3L435.00,805.7L436.00,805.7L436.00,804.7L437.00,804.7L437.00,804.5L438.00,804.5L438.00,804.5L439.00,804.5L439.00,806.1L440.00,806.1L440.00,806.5L441.00,806.5L441.00,806.0L442.00,806.0L442.00,805.0L443.00,805.0L443.00,806.5L444.00,806.5L444.00,804.5L445.00,804.5L445.00,806.1L446.00,806.1L446.00,806.1L447.00,806.1L447.00,803.7L448.00,803.7L448.00,804.6L449.00,804.6L449.00,805.6L450.00,805.6L450.00,804.5L451.00,804.5L451.00,805.5L452.00,805.5L452.00,804.6L453.00,804.6L453.00,803.8L454.00,803.8L454.00,803.0L455.00,803.0L455.00,806.3L456.00,806.3L456.00,805.9L457.00,805.9L457.00,803.8L458.00,803.8L458.00,804.8L459.00,804.8L459.00,804.5L460.00,804.5L460.00,807.0L461.00,807.0L461.00,807.0L462.00,807.0L462.00,804.8L463.00,804.8L463.00,807.0L464.00,807.0L464.00,805.4L465.00,805.4L465.00,806.6L466.00,806.6L466.00,806.4L467.00,806.4L467.00,807.0L468.00,807.0L468.00,805.1L469.00,805.1L469.00,805.5L470.00,805.5L470.00,804.9L471.00,804.9L471.00,806.8L472.00,806.8L472.00,806.7L473.00,806.7L473.00,806.9L474.00,806.9L474.00,807.0L475.00,807.0L475.00,806.3L476.00,806.3L476.00,806.8L477.00,806.8L477.00,806.2L478.00,806.2L478.00,806.1L479.00,806.1L479.00,805.2L480.00,805.2L480.00,805.8L481.00,805.8L481.00,807.0L482.00,807.0L482.00,805.5L483.00,805.5L483.00,806.6L484.00,806.6L484.00,805.1L485.00,805.1L485.00,806.8L486.00,806.8L486.00,804.7L487.00,804.7L487.00,805.5L488.00,805.5L488.00,805.9L489.00,805.9L489.00,804.8L490.00,804.8L490.00,805.2L491.00,805.2L491.00,805.7L492.00,805.7L492.00,804.2L493.00,804.2L493.00,805.0L494.00,805.0L494.00,803.5L495.00,803.5L495.00,804.5L495.30,804.5L495.30,806.0L495.65,700.0L496.20,625.0L496.70,578.0L497.40,542.0L498.30,510.0L499.00,485.0L499.60,468.0L500.50,452.0L501.70,441.0L502.90,437.0L504.00,434.5L505.30,433.5L507.30,433.8L508.00,432.3L509.00,432.3L509.00,432.4L510.00,432.4L510.00,431.5L511.00,431.5L511.00,432.0L512.00,432.0L512.00,431.8L513.00,431.8L513.00,428.9L514.00,428.9L514.00,431.4L515.00,431.4L515.00,431.5L516.00,431.5L516.00,429.9L517.00,429.9L517.00,431.2L518.00,431.2L518.00,429.2L519.00,429.2L519.00,431.3L520.00,431.3L520.00,429.4L521.00,429.4L521.00,430.1L522.00,430.1L522.00,429.3L523.00,429.3L523.00,431.1L524.00,431.1L524.00,430.8L525.00,430.8L525.00,431.0L526.00,431.0L526.00,427.0L527.00,427.0L527.00,430.9L528.00,430.9L528.00,429.1L529.00,429.1L529.00,430.8L530.00,430.8L530.00,429.3L531.00,429.3L531.00,431.1L532.00,431.1L532.00,429.1L533.00,429.1L533.00,430.4L534.00,430.4L534.00,429.6L535.00,429.6L535.00,431.2L536.00,431.2L536.00,429.8L537.00,429.8L537.00,430.2L538.00,430.2L538.00,429.7L539.00,429.7L539.00,429.2L540.00,429.2L540.00,431.1L541.00,431.1L541.00,431.3L542.00,431.3L542.00,430.9L543.00,430.9L543.00,429.2L544.00,429.2L544.00,429.3L545.00,429.3L545.00,431.6L546.00,431.6L546.00,429.6L547.00,429.6L547.00,428.8L548.00,428.8L548.00,428.4L549.00,428.4L549.00,430.6L550.00,430.6L550.00,429.9L551.00,429.9L551.00,432.0L552.00,432.0L552.00,431.0L553.00,431.0L553.00,431.0L554.00,431.0L554.00,431.4L555.00,431.4L555.00,430.3L556.00,430.3L556.00,431.4L557.00,431.4L557.00,432.0L558.00,432.0L558.00,432.1L559.00,432.1L559.00,432.2L560.00,432.2L560.00,431.1L561.00,431.1L561.00,429.9L562.00,429.9L562.00,432.8L563.00,432.8L563.00,430.9L564.00,430.9L564.00,432.0L565.00,432.0L565.00,431.2L566.00,431.2L566.00,433.5L567.00,433.5L567.00,433.1L568.00,433.1L568.00,433.4L569.00,433.4L569.00,433.6L570.00,433.6L570.00,432.8L571.00,432.8L571.00,431.6L572.00,431.6L572.00,432.4L573.00,432.4L573.00,432.4L574.00,432.4L574.00,433.2L575.00,433.2L575.00,433.3L576.00,433.3L576.00,432.8L577.00,432.8L577.00,432.3L578.00,432.3L578.00,430.9L579.00,430.9L579.00,430.8L580.00,430.8L580.00,433.8L581.00,433.8L581.00,432.6L582.00,432.6L582.00,433.8L583.00,433.8L583.00,432.4L584.00,432.4L584.00,431.6L585.00,431.6L585.00,433.8L586.00,433.8L586.00,432.1L587.00,432.1L587.00,433.3L588.00,433.3L588.00,433.1L589.00,433.1L589.00,433.8L590.00,433.8L590.00,432.4L591.00,432.4L591.00,433.8L592.00,433.8L592.00,432.1L593.00,432.1L593.00,431.9L594.00,431.9L594.00,432.5L595.00,432.5L595.00,432.6L596.00,432.6L596.00,432.8L597.00,432.8L597.00,431.4L598.00,431.4L598.00,430.6L599.00,430.6L599.00,432.8L600.00,432.8L600.00,432.2L601.00,432.2L601.00,432.2L602.00,432.2L602.00,432.2L603.00,432.2L603.00,431.6L604.00,431.6L604.00,432.7L605.00,432.7L605.00,432.8L606.00,432.8L606.00,432.6L607.00,432.6L607.00,431.9L608.00,431.9L608.00,431.0L609.00,431.0L609.00,432.9L610.00,432.9L610.00,433.0L611.00,433.0L611.00,432.7L612.00,432.7L612.00,431.6L613.00,431.6L613.00,432.7L614.00,432.7L614.00,430.0L615.00,430.0L615.00,432.2L616.00,432.2L616.00,430.6L617.00,430.6L617.00,431.6L618.00,431.6L618.00,430.4L619.00,430.4L619.00,431.5L620.00,431.5L620.00,431.8L621.00,431.8L621.00,431.7L622.00,431.7L622.00,430.2L623.00,430.2L623.00,431.6L624.00,431.6L624.00,431.4L625.00,431.4L625.00,429.3L626.00,429.3L626.00,431.5L627.00,431.5L627.00,431.9L628.00,431.9L628.00,431.2L629.00,431.2L629.00,429.7L630.00,429.7L630.00,430.9L631.00,430.9L631.00,431.9L632.00,431.9L632.00,430.9L633.00,430.9L633.00,428.5L634.00,428.5L634.00,431.9L635.00,431.9L635.00,430.5L635.80,430.5L635.80,468.0L635.80,560.0L636.80,640.0L638.20,730.0L638.70,745.0L640.00,780.0L641.70,797.0L643.70,802.5L646.60,805.0L647.20,807.0L648.00,805.6L649.00,805.6L649.00,804.6L650.00,804.6L650.00,803.5L651.00,803.5L651.00,804.7L652.00,804.7L652.00,803.7L653.00,803.7L653.00,804.4L654.00,804.4L654.00,803.4L655.00,803.4L655.00,804.2L656.00,804.2L656.00,805.6L657.00,805.6L657.00,804.8L658.00,804.8L658.00,805.4L659.00,805.4L659.00,805.4L660.00,805.4L660.00,803.2L661.00,803.2L661.00,805.6L662.00,805.6L662.00,804.8L663.00,804.8L663.00,805.4L664.00,805.4L664.00,803.6L665.00,803.6L665.00,804.8L666.00,804.8L666.00,805.3L667.00,805.3L667.00,805.6L668.00,805.6L668.00,804.0L669.00,804.0L669.00,803.7L670.00,803.7L670.00,805.7L671.00,805.7L671.00,806.2L672.00,806.2L672.00,806.2L673.00,806.2L673.00,806.0L674.00,806.0L674.00,806.7L675.00,806.7L675.00,807.0L676.00,807.0L676.00,806.8L677.00,806.8L677.00,806.9L678.00,806.9L678.00,806.2L679.00,806.2L679.00,807.0L680.00,807.0L680.00,805.7L681.00,805.7L681.00,806.1L682.00,806.1L682.00,805.9L683.00,805.9L683.00,803.5L684.00,803.5L684.00,805.8L685.00,805.8L685.00,805.8L686.00,805.8L686.00,804.6L687.00,804.6L687.00,804.7L688.00,804.7L688.00,805.5L689.00,805.5L689.00,805.2L690.00,805.2L690.00,805.3L691.00,805.3L691.00,805.2L692.00,805.2L692.00,803.7L693.00,803.7L693.00,805.1L694.00,805.1L694.00,802.6L695.00,802.6L695.00,804.4L696.00,804.4L696.00,804.6L697.00,804.6L697.00,804.7L698.00,804.7L698.00,804.5L699.00,804.5L699.00,803.3L700.00,803.3L700.00,802.9L701.00,802.9L701.00,804.0L702.00,804.0L702.00,803.3L703.00,803.3L703.00,801.6L704.00,801.6L704.00,802.4L705.00,802.4L705.00,803.8L706.00,803.8L706.00,801.6L707.00,801.6L707.00,803.7L708.00,803.7L708.00,803.3L709.00,803.3L709.00,803.3L710.00,803.3L710.00,799.5L711.00,799.5L711.00,802.9L712.00,802.9L712.00,802.4L713.00,802.4L713.00,803.7L714.00,803.7L714.00,803.8L715.00,803.8L715.00,803.3L716.00,803.3L716.00,803.8L717.00,803.8L717.00,802.5L718.00,802.5L718.00,804.0L719.00,804.0L719.00,803.1L720.00,803.1L720.00,804.4L721.00,804.4L721.00,804.2L722.00,804.2L722.00,804.8L723.00,804.8L723.00,801.9L724.00,801.9L724.00,805.4L725.00,805.4L725.00,805.5L726.00,805.5L726.00,805.6L727.00,805.6L727.00,804.3L728.00,804.3L728.00,805.4L729.00,805.4L729.00,805.9L730.00,805.9L730.00,805.4L731.00,805.4L731.00,805.7L732.00,805.7L732.00,806.3L733.00,806.3L733.00,806.0L734.00,806.0L734.00,805.2L735.00,805.2L735.00,806.9L736.00,806.9L736.00,806.0L737.00,806.0L737.00,806.9L738.00,806.9L738.00,805.3L739.00,805.3L739.00,806.6L740.00,806.6L740.00,805.7L741.00,805.7L741.00,806.7L742.00,806.7L742.00,806.5L743.00,806.5L743.00,806.4L744.00,806.4L744.00,804.0L745.00,804.0L745.00,806.4L746.00,806.4L746.00,804.8L747.00,804.8L747.00,805.1L748.00,805.1L748.00,804.8L749.00,804.8L749.00,805.0L750.00,805.0L750.00,806.6L751.00,806.6L751.00,806.3L752.00,806.3L752.00,806.8L753.00,806.8L753.00,807.0L754.00,807.0L754.00,807.0L755.00,807.0L755.00,807.0L756.00,807.0L756.00,806.1L757.00,806.1L757.00,806.8L758.00,806.8L758.00,807.0L759.00,807.0L759.00,806.9L760.00,806.9L760.00,804.8L761.00,804.8L761.00,807.0L762.00,807.0L762.00,807.0L763.00,807.0L763.00,807.0L764.00,807.0L764.00,807.0L765.00,807.0L765.00,807.0L766.00,807.0L766.00,807.0L767.00,807.0L767.00,807.0L768.00,807.0L768.00,807.0L769.00,807.0L769.00,806.9L770.00,806.9L770.00,806.3L771.00,806.3L771.00,806.4L772.00,806.4L772.00,804.5L773.00,804.5L773.00,805.3L774.00,805.3L774.00,805.2L775.00,805.2L775.00,802.5L775.70,802.5L775.70,806.0L776.05,700.0L776.60,625.0L777.10,578.0L777.80,542.0L778.70,510.0L779.40,485.0L780.00,468.0L780.90,452.0L782.10,441.0L783.30,437.0L784.40,434.5L785.70,433.5L787.70,433.8L788.00,432.6L789.00,432.6L789.00,432.9L790.00,432.9L790.00,431.1L791.00,431.1L791.00,432.0L792.00,432.0L792.00,430.0L793.00,430.0L793.00,431.8L794.00,431.8L794.00,431.8L795.00,431.8L795.00,430.9L796.00,430.9L796.00,431.8L797.00,431.8L797.00,432.5L798.00,432.5L798.00,431.8L799.00,431.8L799.00,431.3L800.00,431.3L800.00,432.0L801.00,432.0L801.00,429.5L802.00,429.5L802.00,431.6L803.00,431.6L803.00,429.5L804.00,429.5L804.00,427.5L805.00,427.5L805.00,429.2L806.00,429.2L806.00,431.1L807.00,431.1L807.00,430.6L808.00,430.6L808.00,431.8L809.00,431.8L809.00,432.6L810.00,432.6L810.00,429.5L811.00,429.5L811.00,432.5L812.00,432.5L812.00,430.7L813.00,430.7L813.00,430.9L814.00,430.9L814.00,431.9L815.00,431.9L815.00,433.3L816.00,433.3L816.00,431.7L817.00,431.7L817.00,432.7L818.00,432.7L818.00,430.9L819.00,430.9L819.00,432.4L820.00,432.4L820.00,431.5L821.00,431.5L821.00,432.1L822.00,432.1L822.00,431.3L823.00,431.3L823.00,428.5L824.00,428.5L824.00,432.8L825.00,432.8L825.00,431.0L826.00,431.0L826.00,432.7L827.00,432.7L827.00,431.3L828.00,431.3L828.00,432.3L829.00,432.3L829.00,432.2L830.00,432.2L830.00,430.8L831.00,430.8L831.00,431.0L832.00,431.0L832.00,429.5L833.00,429.5L833.00,431.0L834.00,431.0L834.00,431.7L835.00,431.7L835.00,430.6L836.00,430.6L836.00,431.4L837.00,431.4L837.00,429.6L838.00,429.6L838.00,431.2L839.00,431.2L839.00,431.2L840.00,431.2L840.00,430.9L841.00,430.9L841.00,431.2L842.00,431.2L842.00,431.4L843.00,431.4L843.00,431.3L844.00,431.3L844.00,431.4L845.00,431.4L845.00,430.5L846.00,430.5L846.00,429.6L847.00,429.6L847.00,430.4L848.00,430.4L848.00,430.1L849.00,430.1L849.00,431.5L850.00,431.5L850.00,429.5L851.00,429.5L851.00,430.5L852.00,430.5L852.00,431.5L853.00,431.5L853.00,431.6L854.00,431.6L854.00,431.5L855.00,431.5L855.00,431.4L856.00,431.4L856.00,430.0L857.00,430.0L857.00,428.8L858.00,428.8L858.00,431.9L859.00,431.9L859.00,431.6L860.00,431.6L860.00,430.9L861.00,430.9L861.00,430.1L862.00,430.1L862.00,432.0L863.00,432.0L863.00,431.4L864.00,431.4L864.00,431.4L865.00,431.4L865.00,430.8L866.00,430.8L866.00,429.6L867.00,429.6L867.00,429.4L868.00,429.4L868.00,430.1L869.00,430.1L869.00,430.5L870.00,430.5L870.00,431.7L871.00,431.7L871.00,431.3L872.00,431.3L872.00,431.6L873.00,431.6L873.00,431.7L874.00,431.7L874.00,431.8L875.00,431.8L875.00,430.2L876.00,430.2L876.00,431.2L877.00,431.2L877.00,428.9L878.00,428.9L878.00,431.3L879.00,431.3L879.00,432.7L880.00,432.7L880.00,432.9L881.00,432.9L881.00,430.9L882.00,430.9L882.00,433.1L883.00,433.1L883.00,432.4L884.00,432.4L884.00,433.1L885.00,433.1L885.00,432.9L886.00,432.9L886.00,433.0L887.00,433.0L887.00,431.6L888.00,431.6L888.00,432.7L889.00,432.7L889.00,432.7L890.00,432.7L890.00,431.7L891.00,431.7L891.00,432.2L892.00,432.2L892.00,429.0L893.00,429.0L893.00,432.9L894.00,432.9L894.00,432.4L895.00,432.4L895.00,432.2L896.00,432.2L896.00,430.8L897.00,430.8L897.00,430.9L898.00,430.9L898.00,431.7L899.00,431.7L899.00,432.9L900.00,432.9L900.00,432.2L901.00,432.2L901.00,430.7L902.00,430.7L902.00,430.1L903.00,430.1L903.00,432.7L904.00,432.7L904.00,431.0L905.00,431.0L905.00,432.4L906.00,432.4L906.00,431.1L907.00,431.1L907.00,432.2L908.00,432.2L908.00,430.9L909.00,430.9L909.00,432.5L910.00,432.5L910.00,432.4L911.00,432.4L911.00,431.9L912.00,431.9L912.00,431.8L913.00,431.8L913.00,429.2L914.00,429.2L914.00,431.7L915.00,431.7L915.00,430.7L916.00,430.7L916.00,430.2L916.20,430.2L916.20,468.0L916.20,560.0L917.20,640.0L918.60,730.0L919.10,745.0L920.40,780.0L922.10,797.0L924.10,802.5L927.00,805.0L927.60,807.0L928.00,804.2L929.00,804.2L929.00,804.5L930.00,804.5L930.00,803.1L931.00,803.1L931.00,801.0L932.00,801.0L932.00,802.7L933.00,802.7L933.00,804.1L934.00,804.1L934.00,804.9L935.00,804.9L935.00,804.4L936.00,804.4L936.00,804.7L937.00,804.7L937.00,803.8L938.00,803.8L938.00,803.3L939.00,803.3L939.00,805.2L940.00,805.2L940.00,805.3L941.00,805.3L941.00,802.1L942.00,802.1L942.00,804.2L943.00,804.2L943.00,805.6L944.00,805.6L944.00,804.4L945.00,804.4L945.00,805.9L946.00,805.9L946.00,806.0L947.00,806.0L947.00,805.3L948.00,805.3L948.00,802.7L949.00,802.7L949.00,804.8L950.00,804.8L950.00,806.3L951.00,806.3L951.00,805.9L952.00,805.9L952.00,804.1L953.00,804.1L953.00,806.4L954.00,806.4L954.00,806.0L955.00,806.0L955.00,806.0L956.00,806.0L956.00,805.0L957.00,805.0L957.00,804.6L958.00,804.6L958.00,804.4L959.00,804.4L959.00,804.9L960.00,804.9L960.00,805.5L961.00,805.5L961.00,804.8L962.00,804.8L962.00,805.3L963.00,805.3L963.00,804.5L964.00,804.5L964.00,805.0L965.00,805.0L965.00,803.2L966.00,803.2L966.00,804.4L967.00,804.4L967.00,802.6L968.00,802.6L968.00,803.4L969.00,803.4L969.00,801.1L970.00,801.1L970.00,804.5L971.00,804.5L971.00,804.5L972.00,804.5L972.00,804.6L973.00,804.6L973.00,804.0L974.00,804.0L974.00,804.6L975.00,804.6L975.00,803.4L976.00,803.4L976.00,804.4L977.00,804.4L977.00,803.1L978.00,803.1L978.00,803.6L979.00,803.6L979.00,804.3L980.00,804.3L980.00,803.4L981.00,803.4L981.00,805.4L982.00,805.4L982.00,805.3L983.00,805.3L983.00,805.1L984.00,805.1L984.00,803.9L985.00,803.9L985.00,803.3L986.00,803.3L986.00,805.9L987.00,805.9L987.00,802.4L988.00,802.4L988.00,805.2L989.00,805.2L989.00,803.2L990.00,803.2L990.00,804.6L991.00,804.6L991.00,806.0L992.00,806.0L992.00,804.6L993.00,804.6L993.00,803.3L994.00,803.3L994.00,805.4L995.00,805.4L995.00,804.3L996.00,804.3L996.00,806.2L997.00,806.2L997.00,805.4L998.00,805.4L998.00,805.1L999.00,805.1L999.00,806.8L1000.00,806.8L1000.00,805.7L1001.00,805.7L1001.00,805.8L1002.00,805.8L1002.00,807.0L1003.00,807.0L1003.00,807.0L1004.00,807.0L1004.00,803.1L1005.00,803.1L1005.00,805.3L1006.00,805.3L1006.00,806.2L1007.00,806.2L1007.00,806.1L1008.00,806.1L1008.00,804.5L1009.00,804.5L1009.00,803.7L1010.00,803.7L1010.00,805.7L1011.00,805.7L1011.00,805.6L1012.00,805.6L1012.00,805.1L1013.00,805.1L1013.00,802.9L1014.00,802.9L1014.00,804.0L1015.00,804.0L1015.00,804.4L1016.00,804.4L1016.00,804.3L1017.00,804.3L1017.00,800.8L1018.00,800.8L1018.00,804.1L1019.00,804.1L1019.00,804.0L1020.00,804.0L1020.00,803.9L1021.00,803.9L1021.00,804.3L1022.00,804.3L1022.00,802.9L1023.00,802.9L1023.00,802.3L1024.00,802.3L1024.00,803.1L1025.00,803.1L1025.00,803.0L1026.00,803.0L1026.00,805.1L1027.00,805.1L1027.00,805.0L1028.00,805.0L1028.00,805.3L1029.00,805.3L1029.00,805.0L1030.00,805.0L1030.00,805.4L1031.00,805.4L1031.00,804.6L1032.00,804.6L1032.00,803.8L1033.00,803.8L1033.00,805.0L1034.00,805.0L1034.00,803.1L1035.00,803.1L1035.00,803.0L1036.00,803.0L1036.00,803.4L1037.00,803.4L1037.00,805.1L1038.00,805.1L1038.00,804.2L1039.00,804.2L1039.00,804.2L1040.00,804.2L1040.00,801.6L1041.00,801.6L1041.00,802.6L1042.00,802.6L1042.00,803.3L1043.00,803.3L1043.00,803.0L1044.00,803.0L1044.00,804.0L1045.00,804.0L1045.00,804.4L1046.00,804.4L1046.00,803.6L1047.00,803.6L1047.00,803.9L1048.00,803.9L1048.00,803.8L1049.00,803.8L1049.00,805.2L1050.00,805.2L1050.00,805.5L1051.00,805.5L1051.00,805.3L1052.00,805.3L1052.00,804.8L1053.00,804.8L1053.00,804.4L1054.00,804.4L1054.00,805.5L1055.00,805.5L1055.00,804.9L1056.00,804.9L1056.00,805.2L1056.10,805.2L1056.10,806.0L1056.45,700.0L1057.00,625.0L1057.50,578.0L1058.20,542.0L1059.10,510.0L1059.80,485.0L1060.40,468.0L1061.30,452.0L1062.50,441.0L1063.70,437.0L1064.80,434.5L1066.10,433.5L1068.10,433.8L1069.00,431.1L1070.00,431.1L1070.00,432.9L1071.00,432.9L1071.00,432.9L1072.00,432.9L1072.00,432.2L1073.00,432.2L1073.00,432.9L1074.00,432.9L1074.00,432.0L1075.00,432.0L1075.00,430.4L1076.00,430.4L1076.00,431.8L1077.00,431.8L1077.00,430.5L1078.00,430.5L1078.00,432.3L1079.00,432.3L1079.00,430.0L1080.00,430.0L1080.00,432.1L1081.00,432.1L1081.00,430.4L1082.00,430.4L1082.00,430.1L1083.00,430.1L1083.00,431.2L1084.00,431.2L1084.00,429.9L1085.00,429.9L1085.00,428.1L1086.00,428.1L1086.00,428.2L1087.00,428.2L1087.00,428.5L1088.00,428.5L1088.00,428.6L1089.00,428.6L1089.00,430.6L1090.00,430.6L1090.00,430.9L1091.00,430.9L1091.00,428.5L1092.00,428.5L1092.00,430.1L1093.00,430.1L1093.00,430.1L1094.00,430.1L1094.00,431.1L1095.00,431.1L1095.00,429.4L1096.00,429.4L1096.00,431.3L1097.00,431.3L1097.00,432.4L1098.00,432.4L1098.00,431.2L1099.00,431.2L1099.00,432.1L1100.00,432.1L1100.00,431.5L1101.00,431.5L1101.00,430.2L1102.00,430.2L1102.00,432.9L1103.00,432.9L1103.00,431.5L1104.00,431.5L1104.00,431.3L1105.00,431.3L1105.00,431.9L1106.00,431.9L1106.00,431.1L1107.00,431.1L1107.00,432.0L1108.00,432.0L1108.00,430.7L1109.00,430.7L1109.00,432.3L1110.00,432.3L1110.00,428.1L1111.00,428.1L1111.00,431.6L1112.00,431.6L1112.00,432.3L1113.00,432.3L1113.00,431.7L1114.00,431.7L1114.00,430.8L1115.00,430.8L1115.00,431.3L1116.00,431.3L1116.00,431.4L1117.00,431.4L1117.00,430.7L1118.00,430.7L1118.00,432.1L1119.00,432.1L1119.00,431.6L1120.00,431.6L1120.00,432.4L1121.00,432.4L1121.00,432.1L1122.00,432.1L1122.00,432.4L1123.00,432.4L1123.00,433.1L1124.00,433.1L1124.00,433.4L1125.00,433.4L1125.00,431.9L1126.00,431.9L1126.00,433.7L1127.00,433.7L1127.00,431.4L1128.00,431.4L1128.00,433.7L1129.00,433.7L1129.00,433.5L1130.00,433.5L1130.00,433.5L1131.00,433.5L1131.00,431.5L1132.00,431.5L1132.00,433.1L1133.00,433.1L1133.00,432.6L1134.00,432.6L1134.00,432.5L1135.00,432.5L1135.00,433.0L1136.00,433.0L1136.00,432.7L1137.00,432.7L1137.00,431.8L1138.00,431.8L1138.00,432.7L1139.00,432.7L1139.00,432.0L1140.00,432.0L1140.00,430.2L1141.00,430.2L1141.00,429.9L1142.00,429.9L1142.00,432.2L1143.00,432.2L1143.00,428.4L1144.00,428.4L1144.00,431.7L1145.00,431.7L1145.00,431.6L1146.00,431.6L1146.00,431.9L1147.00,431.9L1147.00,432.4L1148.00,432.4L1148.00,432.1L1149.00,432.1L1149.00,430.6L1150.00,430.6L1150.00,431.5L1151.00,431.5L1151.00,431.2L1152.00,431.2L1152.00,431.8L1153.00,431.8L1153.00,431.8L1154.00,431.8L1154.00,433.3L1155.00,433.3L1155.00,430.8L1156.00,430.8L1156.00,433.4L1157.00,433.4L1157.00,433.0L1158.00,433.0L1158.00,432.3L1159.00,432.3L1159.00,431.0L1160.00,431.0L1160.00,432.9L1161.00,432.9L1161.00,432.8L1162.00,432.8L1162.00,430.9L1163.00,430.9L1163.00,432.5L1164.00,432.5L1164.00,431.2L1165.00,431.2L1165.00,429.7L1166.00,429.7L1166.00,432.4L1167.00,432.4L1167.00,431.0L1168.00,431.0L1168.00,430.6L1169.00,430.6L1169.00,430.3L1170.00,430.3L1170.00,431.8L1171.00,431.8L1171.00,431.7L1172.00,431.7L1172.00,429.3L1173.00,429.3L1173.00,431.1L1174.00,431.1L1174.00,432.0L1175.00,432.0L1175.00,430.9L1176.00,430.9L1176.00,431.7L1177.00,431.7L1177.00,432.8L1178.00,432.8L1178.00,431.2L1179.00,431.2L1179.00,431.2L1180.00,431.2L1180.00,431.4L1181.00,431.4L1181.00,432.2L1182.00,432.2L1182.00,431.2L1183.00,431.2L1183.00,433.4L1184.00,433.4L1184.00,432.4L1185.00,432.4L1185.00,432.6L1186.00,432.6L1186.00,433.2L1187.00,433.2L1187.00,433.4L1188.00,433.4L1188.00,432.8L1189.00,432.8L1189.00,432.0L1190.00,432.0L1190.00,430.0L1191.00,430.0L1191.00,431.9L1192.00,431.9L1192.00,432.1L1193.00,432.1L1193.00,430.5L1194.00,430.5L1194.00,432.4L1195.00,432.4L1195.00,430.1L1196.00,430.1L1196.00,432.4L1196.60,432.4L1196.60,468.0L1196.60,560.0L1197.60,640.0L1199.00,730.0L1199.50,745.0L1200.80,780.0L1202.50,797.0L1204.50,802.5L1207.40,805.0L1208.00,807.0L1208.00,804.3L1209.00,804.3L1209.00,805.4L1210.00,805.4L1210.00,804.3L1211.00,804.3L1211.00,804.1L1212.00,804.1L1212.00,804.2L1213.00,804.2L1213.00,803.7L1214.00,803.7L1214.00,803.2L1215.00,803.2L1215.00,804.6L1216.00,804.6L1216.00,804.0L1217.00,804.0L1217.00,805.1L1218.00,805.1L1218.00,804.2L1219.00,804.2L1219.00,804.4L1220.00,804.4L1220.00,803.6L1221.00,803.6L1221.00,804.6L1222.00,804.6L1222.00,803.2L1223.00,803.2L1223.00,803.4L1224.00,803.4L1224.00,801.3L1225.00,801.3L1225.00,802.5L1226.00,802.5L1226.00,803.4L1227.00,803.4L1227.00,801.1L1228.00,801.1L1228.00,804.2L1229.00,804.2L1229.00,803.7L1230.00,803.7L1230.00,804.1L1231.00,804.1L1231.00,804.4L1232.00,804.4L1232.00,803.6L1233.00,803.6L1233.00,804.6L1234.00,804.6L1234.00,804.7L1235.00,804.7L1235.00,804.4L1236.00,804.4L1236.00,805.3L1237.00,805.3L1237.00,805.2L1238.00,805.2L1238.00,804.0L1239.00,804.0L1239.00,805.7L1240.00,805.7L1240.00,803.8L1241.00,803.8L1241.00,805.7L1242.00,805.7L1242.00,804.8L1243.00,804.8L1243.00,804.8L1244.00,804.8L1244.00,804.9L1245.00,804.9L1245.00,805.3L1246.00,805.3L1246.00,805.5L1247.00,805.5L1247.00,804.8L1248.00,804.8L1248.00,805.1L1249.00,805.1L1249.00,805.3L1250.00,805.3L1250.00,802.2L1251.00,802.2L1251.00,805.0L1252.00,805.0L1252.00,800.3L1253.00,800.3L1253.00,805.0L1254.00,805.0L1254.00,803.4L1255.00,803.4L1255.00,804.6L1256.00,804.6L1256.00,803.7L1257.00,803.7L1257.00,803.5L1258.00,803.5L1258.00,804.6L1259.00,804.6L1259.00,803.9L1260.00,803.9L1260.00,800.2L1261.00,800.2L1261.00,804.3L1262.00,804.3L1262.00,800.9L1263.00,800.9L1263.00,803.9L1264.00,803.9L1264.00,804.7L1265.00,804.7L1265.00,803.0L1266.00,803.0L1266.00,805.0L1267.00,805.0L1267.00,803.4L1268.00,803.4L1268.00,805.2L1269.00,805.2L1269.00,803.6L1270.00,803.6L1270.00,804.0L1271.00,804.0L1271.00,804.2L1272.00,804.2L1272.00,805.4L1273.00,805.4L1273.00,805.0L1274.00,805.0L1274.00,806.5L1275.00,806.5L1275.00,805.0L1276.00,805.0L1276.00,804.7L1277.00,804.7L1277.00,804.7L1278.00,804.7L1278.00,806.0L1279.00,806.0L1279.00,806.5L1280.00,806.5L1280.00,804.0L1281.00,804.0L1281.00,803.4L1282.00,803.4L1282.00,803.2L1283.00,803.2L1283.00,805.8L1284.00,805.8L1284.00,804.1L1285.00,804.1L1285.00,807.0L1286.00,807.0L1286.00,805.9L1287.00,805.9L1287.00,806.7L1288.00,806.7L1288.00,805.9L1289.00,805.9L1289.00,807.0L1290.00,807.0L1290.00,807.0L1291.00,807.0L1291.00,807.0L1292.00,807.0L1292.00,805.6L1293.00,805.6L1293.00,807.0L1294.00,807.0L1294.00,804.1L1295.00,804.1L1295.00,804.7L1296.00,804.7L1296.00,807.0L1297.00,807.0L1297.00,807.0L1298.00,807.0L1298.00,807.0L1299.00,807.0L1299.00,806.2L1300.00,806.2L1300.00,805.8L1301.00,805.8L1301.00,804.1L1302.00,804.1L1302.00,804.2L1303.00,804.2L1303.00,806.0L1304.00,806.0L1304.00,804.0L1305.00,804.0L1305.00,804.5L1306.00,804.5L1306.00,805.1L1307.00,805.1L1307.00,804.8L1308.00,804.8L1308.00,804.6L1309.00,804.6L1309.00,804.8L1310.00,804.8L1310.00,804.7L1311.00,804.7L1311.00,804.3L1312.00,804.3L1312.00,805.5L1313.00,805.5L1313.00,804.4L1314.00,804.4L1314.00,805.5L1315.00,805.5L1315.00,805.3L1316.00,805.3L1316.00,806.1L1317.00,806.1L1317.00,805.9L1318.00,805.9L1318.00,805.7L1319.00,805.7L1319.00,804.8L1320.00,804.8L1320.00,805.3L1321.00,805.3L1321.00,806.1L1322.00,806.1L1322.00,805.0L1323.00,805.0L1323.00,805.6L1324.00,805.6L1324.00,803.8L1325.00,803.8L1325.00,804.1L1326.00,804.1L1326.00,804.5L1327.00,804.5L1327.00,804.1L1328.00,804.1L1328.00,802.3L1329.00,802.3L1329.00,802.1L1330.00,802.1L1330.00,802.1L1331.00,802.1L1331.00,803.7L1332.00,803.7L1332.00,802.5L1333.00,802.5L1333.00,799.5L1334.00,799.5L1334.00,803.5L1335.00,803.5L1335.00,802.2L1336.00,802.2L1336.00,802.7L1336.50,802.7L1336.50,806.0L1336.85,700.0L1337.40,625.0L1337.90,578.0L1338.60,542.0L1339.50,510.0L1340.20,485.0L1340.80,468.0L1341.70,452.0L1342.90,441.0L1344.10,437.0L1345.20,434.5L1346.50,433.5L1348.50,433.8L1349.00,431.3L1350.00,431.3L1350.00,430.8L1351.00,430.8L1351.00,431.1L1352.00,431.1L1352.00,433.1L1353.00,433.1L1353.00,432.6L1354.00,432.6L1354.00,432.6L1355.00,432.6L1355.00,431.8L1356.00,431.8L1356.00,431.4L1357.00,431.4L1357.00,433.3L1358.00,433.3L1358.00,431.2L1359.00,431.2L1359.00,433.5L1360.00,433.5L1360.00,432.4L1361.00,432.4L1361.00,431.6L1362.00,431.6L1362.00,433.6L1363.00,433.6L1363.00,433.7L1364.00,433.7L1364.00,431.6L1365.00,431.6L1365.00,433.7L1366.00,433.7L1366.00,433.8L1367.00,433.8L1367.00,433.0L1368.00,433.0L1368.00,433.8L1369.00,433.8L1369.00,433.6L1370.00,433.6L1370.00,433.8L1371.00,433.8L1371.00,433.8L1372.00,433.8L1372.00,430.9L1373.00,430.9L1373.00,431.8L1374.00,431.8L1374.00,433.1L1375.00,433.1L1375.00,433.4L1376.00,433.4L1376.00,432.4L1377.00,432.4L1377.00,432.4L1378.00,432.4L1378.00,433.0L1379.00,433.0L1379.00,431.4L1380.00,431.4L1380.00,432.9L1381.00,432.9L1381.00,430.6L1382.00,430.6L1382.00,432.8L1383.00,432.8L1383.00,433.1L1384.00,433.1L1384.00,429.9L1385.00,429.9L1385.00,432.7L1386.00,432.7L1386.00,432.1L1387.00,432.1L1387.00,429.9L1388.00,429.9L1388.00,432.2L1389.00,432.2L1389.00,431.8L1390.00,431.8L1390.00,432.1L1391.00,432.1L1391.00,430.1L1392.00,430.1L1392.00,433.3L1393.00,433.3L1393.00,433.4L1394.00,433.4L1394.00,432.8L1395.00,432.8L1395.00,431.4L1396.00,431.4L1396.00,430.6L1397.00,430.6L1397.00,432.2L1398.00,432.2L1398.00,432.3L1399.00,432.3L1399.00,430.8L1400.00,430.8L1400.00,430.2L1401.00,430.2L1401.00,431.3L1402.00,431.3L1402.00,429.7L1403.00,429.7L1403.00,431.7L1404.00,431.7L1404.00,431.8L1405.00,431.8L1405.00,431.0L1406.00,431.0L1406.00,431.2L1407.00,431.2L1407.00,432.0L1408.00,432.0L1408.00,431.0L1409.00,431.0L1409.00,431.1L1410.00,431.1L1410.00,432.3L1411.00,432.3L1411.00,432.2L1412.00,432.2L1412.00,431.0L1413.00,431.0L1413.00,429.5L1414.00,429.5L1414.00,430.9L1415.00,430.9L1415.00,432.8L1416.00,432.8L1416.00,431.6L1417.00,431.6L1417.00,432.7L1418.00,432.7L1418.00,430.9L1419.00,430.9L1419.00,432.4L1420.00,432.4L1420.00,430.9L1421.00,430.9L1421.00,432.3L1422.00,432.3L1422.00,433.2L1423.00,433.2L1423.00,430.4L1424.00,430.4L1424.00,433.2L1425.00,433.2L1425.00,432.9L1426.00,432.9L1426.00,431.0L1427.00,431.0L1427.00,431.2L1428.00,431.2L1428.00,432.7L1429.00,432.7L1429.00,429.5L1430.00,429.5L1430.00,432.7L1431.00,432.7L1431.00,432.4L1432.00,432.4L1432.00,432.6L1433.00,432.6L1433.00,432.4L1434.00,432.4L1434.00,429.6L1435.00,429.6L1435.00,432.2L1436.00,432.2L1436.00,431.0L1437.00,431.0L1437.00,430.1L1438.00,430.1L1438.00,431.9L1439.00,431.9L1439.00,431.9L1440.00,431.9L1440.00,431.7L1441.00,431.7L1441.00,432.2L1442.00,432.2L1442.00,428.5L1443.00,428.5L1443.00,431.3L1444.00,431.3L1444.00,432.5L1445.00,432.5L1445.00,431.9L1446.00,431.9L1446.00,430.4L1447.00,430.4L1447.00,433.0L1448.00,433.0L1448.00,431.5L1449.00,431.5L1449.00,432.5L1450.00,432.5L1450.00,431.3L1451.00,431.3L1451.00,433.3L1452.00,433.3L1452.00,432.0L1453.00,432.0L1453.00,433.4L1454.00,433.4L1454.00,431.9L1455.00,431.9L1455.00,433.5L1456.00,433.5L1456.00,432.3L1457.00,432.3L1457.00,432.8L1458.00,432.8L1458.00,431.8L1459.00,431.8L1459.00,431.3L1460.00,431.3L1460.00,432.2L1461.00,432.2L1461.00,431.9L1462.00,431.9L1462.00,433.5L1463.00,433.5L1463.00,433.1L1464.00,433.1L1464.00,432.1L1465.00,432.1L1465.00,432.6L1466.00,432.6L1466.00,432.2L1467.00,432.2L1467.00,433.2L1468.00,433.2L1468.00,432.1L1469.00,432.1L1469.00,431.5L1470.00,431.5L1470.00,433.1L1471.00,433.1L1471.00,433.2L1472.00,433.2L1472.00,433.4L1473.00,433.4L1473.00,433.3L1474.00,433.3L1474.00,432.1L1475.00,432.1L1475.00,432.3L1476.00,432.3L1476.00,432.7L1477.00,432.7L1477.00,468.0L1477.00,560.0L1478.00,640.0L1479.40,730.0L1479.90,745.0L1481.20,780.0L1482.90,797.0L1484.90,802.5L1487.80,805.0L1488.40,807.0L1489.00,806.5L1490.00,806.5L1490.00,804.6L1491.00,804.6L1491.00,806.2L1492.00,806.2L1492.00,805.3L1493.00,805.3L1493.00,807.0L1494.00,807.0L1494.00,807.0L1495.00,807.0L1495.00,803.9L1496.00,803.9L1496.00,804.8L1497.00,804.8L1497.00,805.3L1498.00,805.3L1498.00,806.3L1499.00,806.3L1499.00,805.1L1500.00,805.1L1500.00,805.8L1501.00,805.8L1501.00,806.4L1502.00,806.4L1502.00,806.5L1503.00,806.5L1503.00,806.6L1504.00,806.6L1504.00,804.4L1505.00,804.4L1505.00,806.4L1506.00,806.4L1506.00,804.6L1507.00,804.6L1507.00,806.6L1508.00,806.6L1508.00,806.5L1509.00,806.5L1509.00,804.3L1510.00,804.3L1510.00,806.2L1511.00,806.2L1511.00,804.1L1512.00,804.1L1512.00,804.8L1513.00,804.8L1513.00,805.7L1514.00,805.7L1514.00,804.8L1515.00,804.8L1515.00,805.5L1516.00,805.5L1516.00,804.2L1517.00,804.2L1517.00,804.7L1518.00,804.7L1518.00,802.7L1519.00,802.7L1519.00,802.8L1520.00,802.8L1520.00,804.5L1521.00,804.5L1521.00,803.9L1522.00,803.9L1522.00,803.4L1523.00,803.4L1523.00,804.8L1524.00,804.8L1524.00,804.9L1525.00,804.9L1525.00,804.9L1526.00,804.9L1526.00,805.0L1527.00,805.0L1527.00,803.6L1528.00,803.6L1528.00,804.3L1529.00,804.3L1529.00,805.1L1530.00,805.1L1530.00,805.3L1531.00,805.3L1531.00,805.4L1532.00,805.4L1532.00,803.4L1533.00,803.4L1533.00,804.7L1534.00,804.7L1534.00,804.4L1535.00,804.4L1535.00,803.3L1536.00,803.3L1536.00,805.1L1537.00,805.1L1537.00,804.9L1538.00,804.9L1538.00,805.0L1539.00,805.0L1539.00,802.7L1540.00,802.7L1540.00,804.9L1541.00,804.9L1541.00,803.2L1542.00,803.2L1542.00,804.3L1543.00,804.3L1543.00,802.9L1544.00,802.9L1544.00,804.2L1545.00,804.2L1545.00,803.1L1546.00,803.1L1546.00,803.8L1547.00,803.8L1547.00,803.4L1548.00,803.4L1548.00,803.4L1549.00,803.4L1549.00,801.9L1550.00,801.9L1550.00,803.7L1551.00,803.7L1551.00,803.9L1552.00,803.9L1552.00,803.0L1553.00,803.0L1553.00,804.2L1554.00,804.2L1554.00,803.8L1555.00,803.8L1555.00,802.6L1556.00,802.6L1556.00,804.1L1557.00,804.1L1557.00,803.8L1558.00,803.8L1558.00,805.4L1559.00,805.4L1559.00,805.3L1560.00,805.3L1560.00,804.6L1561.00,804.6L1561.00,805.1L1562.00,805.1L1562.00,804.0L1563.00,804.0L1563.00,803.5L1564.00,803.5L1564.00,805.8L1565.00,805.8L1565.00,805.4L1566.00,805.4L1566.00,805.7L1567.00,805.7L1567.00,805.5L1568.00,805.5L1568.00,802.7L1569.00,802.7L1569.00,805.5L1570.00,805.5L1570.00,803.3L1571.00,803.3L1571.00,804.4L1572.00,804.4L1572.00,804.6L1573.00,804.6L1573.00,804.8L1574.00,804.8L1574.00,804.6L1575.00,804.6L1575.00,804.2L1576.00,804.2L1576.00,804.0L1577.00,804.0L1577.00,804.7L1578.00,804.7L1578.00,803.1L1579.00,803.1L1579.00,804.8L1580.00,804.8L1580.00,800.7L1581.00,800.7L1581.00,803.4L1582.00,803.4L1582.00,804.6L1583.00,804.6L1583.00,805.0L1584.00,805.0L1584.00,803.2L1585.00,803.2L1585.00,805.2L1586.00,805.2L1586.00,805.1L1587.00,805.1L1587.00,804.0L1588.00,804.0L1588.00,804.8L1589.00,804.8L1589.00,804.8L1590.00,804.8L1590.00,804.9L1591.00,804.9L1591.00,804.2L1592.00,804.2L1592.00,804.7L1593.00,804.7L1593.00,805.3L1594.00,805.3L1594.00,804.6L1595.00,804.6L1595.00,803.6L1596.00,803.6L1596.00,805.8L1597.00,805.8L1597.00,805.5L1598.00,805.5L1598.00,805.8L1599.00,805.8L1599.00,804.2L1600.00,804.2L1600.00,805.7L1601.00,805.7L1601.00,802.5L1602.00,802.5L1602.00,803.7L1603.00,803.7L1603.00,805.3L1604.00,805.3L1604.00,804.1L1605.00,804.1L1605.00,804.8L1606.00,804.8L1606.00,804.6L1607.00,804.6L1607.00,804.9L1608.00,804.9L1608.00,803.0L1609.00,803.0L1609.00,802.8L1610.00,802.8L1610.00,805.0L1611.00,805.0L1611.00,805.0L1612.00,805.0L1612.00,805.2L1613.00,805.2L1613.00,804.9L1614.00,804.9L1614.00,802.0L1615.00,802.0L1615.00,803.8L1616.00,803.8L1616.00,805.8L1616.90,805.8L1616.90,806.0L1617.25,700.0L1617.80,625.0L1618.30,578.0L1619.00,542.0L1619.90,510.0L1620.60,485.0L1621.20,468.0L1622.10,452.0L1623.30,441.0L1624.50,437.0L1625.60,434.5L1626.90,433.5L1628.90,433.8L1629.00,432.9L1630.00,432.9L1630.00,431.0L1631.00,431.0L1631.00,430.9L1632.00,430.9L1632.00,432.0L1633.00,432.0L1633.00,433.0L1634.00,433.0L1634.00,432.9L1635.00,432.9L1635.00,433.0L1636.00,433.0L1636.00,431.4L1637.00,431.4L1637.00,433.0L1638.00,433.0L1638.00,432.7L1639.00,432.7L1639.00,432.8L1640.00,432.8L1640.00,431.6L1641.00,431.6L1641.00,432.7L1642.00,432.7L1642.00,432.2L1643.00,432.2L1643.00,431.4L1644.00,431.4L1644.00,430.7L1645.00,430.7L1645.00,431.4L1646.00,431.4L1646.00,430.5L1647.00,430.5L1647.00,430.2L1648.00,430.2L1648.00,429.7L1649.00,429.7L1649.00,430.5L1650.00,430.5L1650.00,431.0L1651.00,431.0L1651.00,431.1L1652.00,431.1L1652.00,428.1L1653.00,428.1L1653.00,431.1L1654.00,431.1L1654.00,428.9L1655.00,428.9L1655.00,431.9L1656.00,431.9L1656.00,432.2L1657.00,432.2L1657.00,432.3L1658.00,432.3L1658.00,431.7L1659.00,431.7L1659.00,432.0L1660.00,432.0L1660.00,430.2L1661.00,430.2L1661.00,430.2L1662.00,430.2L1662.00,429.9L1663.00,429.9L1663.00,428.2L1664.00,428.2L1664.00,429.9L1665.00,429.9L1665.00,429.3L1666.00,429.3L1666.00,428.7L1667.00,428.7L1667.00,431.9L1668.00,431.9L1668.00,432.1L1669.00,432.1L1669.00,431.8L1670.00,431.8L1670.00,431.8L1671.00,431.8L1671.00,430.2L1672.00,430.2L1672.00,430.4L1673.00,430.4L1673.00,431.0L1674.00,431.0L1674.00,431.3L1675.00,431.3L1675.00,432.0L1676.00,432.0L1676.00,431.8L1677.00,431.8L1677.00,432.1L1678.00,432.1L1678.00,429.9L1679.00,429.9L1679.00,432.0L1680.00,432.0L1680.00,429.9L1681.00,429.9L1681.00,429.8L1682.00,429.8L1682.00,430.8L1683.00,430.8L1683.00,430.7L1684.00,430.7L1684.00,430.2L1685.00,430.2L1685.00,431.2L1686.00,431.2L1686.00,428.8L1687.00,428.8L1687.00,429.9L1688.00,429.9L1688.00,430.5L1689.00,430.5L1689.00,431.0L1690.00,431.0L1690.00,431.2L1691.00,431.2L1691.00,432.8L1692.00,432.8L1692.00,431.1L1693.00,431.1L1693.00,430.9L1694.00,430.9L1694.00,432.1L1695.00,432.1L1695.00,430.3L1696.00,430.3L1696.00,431.5L1697.00,431.5L1697.00,431.4L1698.00,431.4L1698.00,429.2L1699.00,429.2L1699.00,431.4L1700.00,431.4L1700.00,431.1L1701.00,431.1L1701.00,431.8L1702.00,431.8L1702.00,432.0L1703.00,432.0L1703.00,432.6L1704.00,432.6L1704.00,433.1L1705.00,433.1L1705.00,431.8L1706.00,431.8L1706.00,433.8L1707.00,433.8L1707.00,433.3L1708.00,433.3L1708.00,433.5L1709.00,433.5L1709.00,432.5L1710.00,432.5L1710.00,433.8L1711.00,433.8L1711.00,432.6L1712.00,432.6L1712.00,433.6L1713.00,433.6L1713.00,432.1L1714.00,432.1L1714.00,431.7L1715.00,431.7L1715.00,433.7L1716.00,433.7L1716.00,432.3L1717.00,432.3L1717.00,432.0L1718.00,432.0L1718.00,432.6L1719.00,432.6L1719.00,431.3L1720.00,431.3L1720.00,431.1L1721.00,431.1L1721.00,430.3L1722.00,430.3L1722.00,431.2L1723.00,431.2L1723.00,430.4L1724.00,430.4L1724.00,431.4L1725.00,431.4L1725.00,429.6L1726.00,429.6L1726.00,431.9L1727.00,431.9L1727.00,430.1L1728.00,430.1L1728.00,431.6L1729.00,431.6L1729.00,431.8L1730.00,431.8L1730.00,432.0L1731.00,432.0L1731.00,431.1L1732.00,431.1L1732.00,429.9L1733.00,429.9L1733.00,431.1L1734.00,431.1L1734.00,431.3L1735.00,431.3L1735.00,431.3L1736.00,431.3L1736.00,431.0L1737.00,431.0L1737.00,429.7L1738.00,429.7L1738.00,430.3L1739.00,430.3L1739.00,429.6L1740.00,429.6L1740.00,430.1L1741.00,430.1L1741.00,429.3L1742.00,429.3L1742.00,431.8L1743.00,431.8L1743.00,431.2L1744.00,431.2L1744.00,432.3L1745.00,432.3L1745.00,429.4L1746.00,429.4L1746.00,430.7L1747.00,430.7L1747.00,432.0L1748.00,432.0L1748.00,432.2L1749.00,432.2L1749.00,432.1L1750.00,432.1L1750.00,430.8L1751.00,430.8L1751.00,429.0L1752.00,429.0L1752.00,433.1L1753.00,433.1L1753.00,430.6L1754.00,430.6L1754.00,433.0L1755.00,433.0L1755.00,430.2L1756.00,430.2L1756.00,468.7L1755.00,468.7L1755.00,468.1L1754.00,468.1L1754.00,467.2L1753.00,467.2L1753.00,468.4L1752.00,468.4L1752.00,467.2L1751.00,467.2L1751.00,467.2L1750.00,467.2L1750.00,467.2L1749.00,467.2L1749.00,467.2L1748.00,467.2L1748.00,468.7L1747.00,468.7L1747.00,467.5L1746.00,467.5L1746.00,469.6L1745.00,469.6L1745.00,468.7L1744.00,468.7L1744.00,469.4L1743.00,469.4L1743.00,470.0L1742.00,470.0L1742.00,470.5L1741.00,470.5L1741.00,468.5L1740.00,468.5L1740.00,471.4L1739.00,471.4L1739.00,469.9L1738.00,469.9L1738.00,468.3L1737.00,468.3L1737.00,470.3L1736.00,470.3L1736.00,469.0L1735.00,469.0L1735.00,468.6L1734.00,468.6L1734.00,468.7L1733.00,468.7L1733.00,468.7L1732.00,468.7L1732.00,468.2L1731.00,468.2L1731.00,469.9L1730.00,469.9L1730.00,469.5L1729.00,469.5L1729.00,469.3L1728.00,469.3L1728.00,470.4L1727.00,470.4L1727.00,470.5L1726.00,470.5L1726.00,469.2L1725.00,469.2L1725.00,470.2L1724.00,470.2L1724.00,470.1L1723.00,470.1L1723.00,469.9L1722.00,469.9L1722.00,472.3L1721.00,472.3L1721.00,471.4L1720.00,471.4L1720.00,472.1L1719.00,472.1L1719.00,471.1L1718.00,471.1L1718.00,472.7L1717.00,472.7L1717.00,471.5L1716.00,471.5L1716.00,470.9L1715.00,470.9L1715.00,470.3L1714.00,470.3L1714.00,472.9L1713.00,472.9L1713.00,469.3L1712.00,469.3L1712.00,469.1L1711.00,469.1L1711.00,468.6L1710.00,468.6L1710.00,469.7L1709.00,469.7L1709.00,468.1L1708.00,468.1L1708.00,468.0L1707.00,468.0L1707.00,468.7L1706.00,468.7L1706.00,468.1L1705.00,468.1L1705.00,470.0L1704.00,470.0L1704.00,469.3L1703.00,469.3L1703.00,470.4L1702.00,470.4L1702.00,470.0L1701.00,470.0L1701.00,468.9L1700.00,468.9L1700.00,468.9L1699.00,468.9L1699.00,470.2L1698.00,470.2L1698.00,469.0L1697.00,469.0L1697.00,469.2L1696.00,469.2L1696.00,470.8L1695.00,470.8L1695.00,470.9L1694.00,470.9L1694.00,471.1L1693.00,471.1L1693.00,473.6L1692.00,473.6L1692.00,471.2L1691.00,471.2L1691.00,469.6L1690.00,469.6L1690.00,470.6L1689.00,470.6L1689.00,469.8L1688.00,469.8L1688.00,470.2L1687.00,470.2L1687.00,470.4L1686.00,470.4L1686.00,471.1L1685.00,471.1L1685.00,469.8L1684.00,469.8L1684.00,471.0L1683.00,471.0L1683.00,469.6L1682.00,469.6L1682.00,469.5L1681.00,469.5L1681.00,470.8L1680.00,470.8L1680.00,470.2L1679.00,470.2L1679.00,469.4L1678.00,469.4L1678.00,471.2L1677.00,471.2L1677.00,469.0L1676.00,469.0L1676.00,471.1L1675.00,471.1L1675.00,468.6L1674.00,468.6L1674.00,470.5L1673.00,470.5L1673.00,469.8L1672.00,469.8L1672.00,468.6L1671.00,468.6L1671.00,468.5L1670.00,468.5L1670.00,470.7L1669.00,470.7L1669.00,470.6L1668.00,470.6L1668.00,468.8L1667.00,468.8L1667.00,469.0L1666.00,469.0L1666.00,469.2L1665.00,469.2L1665.00,469.2L1664.00,469.2L1664.00,471.1L1663.00,471.1L1663.00,470.7L1662.00,470.7L1662.00,472.3L1661.00,472.3L1661.00,469.0L1660.00,469.0L1660.00,470.1L1659.00,470.1L1659.00,470.2L1658.00,470.2L1658.00,468.0L1657.00,468.0L1657.00,468.4L1656.00,468.4L1656.00,467.7L1655.00,467.7L1655.00,469.7L1654.00,469.7L1654.00,468.2L1653.00,468.2L1653.00,469.6L1652.00,469.6L1652.00,468.0L1651.00,468.0L1651.00,469.8L1650.00,469.8L1650.00,468.8L1649.00,468.8L1649.00,467.5L1648.00,467.5L1648.00,469.9L1647.00,469.9L1647.00,471.1L1646.00,471.1L1646.00,468.3L1645.00,468.3L1645.00,468.5L1644.00,468.5L1644.00,468.6L1643.00,468.6L1643.00,468.5L1642.00,468.5L1642.00,468.7L1641.00,468.7L1641.00,469.1L1640.00,469.1L1640.00,469.0L1639.00,469.0L1639.00,469.1L1638.00,469.1L1638.00,472.9L1637.00,472.9L1637.00,469.7L1636.00,469.7L1636.00,471.0L1635.00,471.0L1635.00,471.0L1634.00,471.0L1634.00,469.5L1633.00,469.5L1633.00,471.4L1632.00,471.4L1632.00,469.7L1631.00,469.7L1631.00,469.2L1630.00,469.2L1630.00,469.2L1629.00,469.2L1628.90,467.2L1626.40,468.0L1624.40,470.5L1622.90,475.0L1621.90,481.0L1621.30,490.0L1620.80,510.0L1620.00,542.0L1619.30,578.0L1618.80,625.0L1618.25,700.0L1617.90,841.0L1617.90,838.7L1617.90,842.0L1617.00,842.0L1617.00,843.2L1616.00,843.2L1616.00,840.0L1615.00,840.0L1615.00,844.0L1614.00,844.0L1614.00,842.6L1613.00,842.6L1613.00,839.9L1612.00,839.9L1612.00,842.6L1611.00,842.6L1611.00,840.1L1610.00,840.1L1610.00,842.9L1609.00,842.9L1609.00,842.0L1608.00,842.0L1608.00,840.3L1607.00,840.3L1607.00,843.6L1606.00,843.6L1606.00,841.4L1605.00,841.4L1605.00,841.0L1604.00,841.0L1604.00,840.9L1603.00,840.9L1603.00,841.3L1602.00,841.3L1602.00,841.8L1601.00,841.8L1601.00,843.1L1600.00,843.1L1600.00,842.7L1599.00,842.7L1599.00,841.9L1598.00,841.9L1598.00,844.2L1597.00,844.2L1597.00,841.9L1596.00,841.9L1596.00,843.3L1595.00,843.3L1595.00,844.2L1594.00,844.2L1594.00,843.4L1593.00,843.4L1593.00,841.9L1592.00,841.9L1592.00,843.1L1591.00,843.1L1591.00,842.9L1590.00,842.9L1590.00,842.4L1589.00,842.4L1589.00,843.9L1588.00,843.9L1588.00,841.4L1587.00,841.4L1587.00,841.3L1586.00,841.3L1586.00,844.3L1585.00,844.3L1585.00,841.8L1584.00,841.8L1584.00,840.6L1583.00,840.6L1583.00,841.0L1582.00,841.0L1582.00,839.9L1581.00,839.9L1581.00,840.0L1580.00,840.0L1580.00,840.6L1579.00,840.6L1579.00,840.4L1578.00,840.4L1578.00,839.7L1577.00,839.7L1577.00,840.5L1576.00,840.5L1576.00,839.5L1575.00,839.5L1575.00,839.3L1574.00,839.3L1574.00,839.4L1573.00,839.4L1573.00,839.4L1572.00,839.4L1572.00,843.0L1571.00,843.0L1571.00,839.6L1570.00,839.6L1570.00,840.2L1569.00,840.2L1569.00,841.7L1568.00,841.7L1568.00,840.8L1567.00,840.8L1567.00,839.7L1566.00,839.7L1566.00,839.9L1565.00,839.9L1565.00,842.5L1564.00,842.5L1564.00,840.0L1563.00,840.0L1563.00,839.5L1562.00,839.5L1562.00,839.4L1561.00,839.4L1561.00,841.2L1560.00,841.2L1560.00,842.0L1559.00,842.0L1559.00,839.3L1558.00,839.3L1558.00,841.3L1557.00,841.3L1557.00,839.7L1556.00,839.7L1556.00,838.8L1555.00,838.8L1555.00,843.0L1554.00,843.0L1554.00,840.3L1553.00,840.3L1553.00,839.2L1552.00,839.2L1552.00,841.2L1551.00,841.2L1551.00,840.5L1550.00,840.5L1550.00,838.8L1549.00,838.8L1549.00,838.9L1548.00,838.9L1548.00,839.6L1547.00,839.6L1547.00,840.3L1546.00,840.3L1546.00,840.6L1545.00,840.6L1545.00,840.1L1544.00,840.1L1544.00,841.7L1543.00,841.7L1543.00,840.1L1542.00,840.1L1542.00,840.7L1541.00,840.7L1541.00,842.1L1540.00,842.1L1540.00,839.9L1539.00,839.9L1539.00,840.0L1538.00,840.0L1538.00,842.2L1537.00,842.2L1537.00,842.7L1536.00,842.7L1536.00,841.1L1535.00,841.1L1535.00,842.6L1534.00,842.6L1534.00,841.7L1533.00,841.7L1533.00,841.2L1532.00,841.2L1532.00,841.1L1531.00,841.1L1531.00,842.7L1530.00,842.7L1530.00,842.9L1529.00,842.9L1529.00,841.5L1528.00,841.5L1528.00,840.9L1527.00,840.9L1527.00,843.0L1526.00,843.0L1526.00,842.0L1525.00,842.0L1525.00,841.4L1524.00,841.4L1524.00,842.0L1523.00,842.0L1523.00,841.9L1522.00,841.9L1522.00,841.4L1521.00,841.4L1521.00,842.7L1520.00,842.7L1520.00,842.5L1519.00,842.5L1519.00,841.0L1518.00,841.0L1518.00,840.8L1517.00,840.8L1517.00,840.5L1516.00,840.5L1516.00,840.9L1515.00,840.9L1515.00,841.5L1514.00,841.5L1514.00,841.5L1513.00,841.5L1513.00,841.7L1512.00,841.7L1512.00,841.0L1511.00,841.0L1511.00,840.9L1510.00,840.9L1510.00,839.0L1509.00,839.0L1509.00,839.3L1508.00,839.3L1508.00,838.7L1507.00,838.7L1507.00,840.9L1506.00,840.9L1506.00,839.1L1505.00,839.1L1505.00,838.9L1504.00,838.9L1504.00,841.2L1503.00,841.2L1503.00,840.2L1502.00,840.2L1502.00,839.3L1501.00,839.3L1501.00,840.1L1500.00,840.1L1500.00,840.5L1499.00,840.5L1499.00,842.9L1498.00,842.9L1498.00,841.5L1497.00,841.5L1497.00,840.7L1496.00,840.7L1496.00,840.9L1495.00,840.9L1495.00,840.0L1494.00,840.0L1494.00,841.0L1493.00,841.0L1493.00,841.9L1492.00,841.9L1492.00,841.6L1491.00,841.6L1491.00,840.8L1490.00,840.8L1490.00,843.1L1489.00,843.1L1488.40,838.7L1486.60,838.0L1483.90,834.0L1482.40,826.0L1481.40,815.0L1480.70,800.0L1479.80,780.0L1478.90,745.0L1478.40,730.0L1476.90,640.0L1475.90,560.0L1475.90,467.2L1475.90,468.8L1475.00,468.8L1475.00,470.4L1474.00,470.4L1474.00,471.1L1473.00,471.1L1473.00,471.6L1472.00,471.6L1472.00,468.8L1471.00,468.8L1471.00,470.0L1470.00,470.0L1470.00,470.1L1469.00,470.1L1469.00,470.8L1468.00,470.8L1468.00,470.4L1467.00,470.4L1467.00,469.4L1466.00,469.4L1466.00,469.1L1465.00,469.1L1465.00,470.4L1464.00,470.4L1464.00,470.2L1463.00,470.2L1463.00,471.1L1462.00,471.1L1462.00,469.7L1461.00,469.7L1461.00,470.8L1460.00,470.8L1460.00,471.5L1459.00,471.5L1459.00,470.1L1458.00,470.1L1458.00,470.3L1457.00,470.3L1457.00,472.4L1456.00,472.4L1456.00,469.8L1455.00,469.8L1455.00,470.8L1454.00,470.8L1454.00,471.6L1453.00,471.6L1453.00,470.2L1452.00,470.2L1452.00,469.5L1451.00,469.5L1451.00,471.1L1450.00,471.1L1450.00,469.3L1449.00,469.3L1449.00,468.4L1448.00,468.4L1448.00,468.7L1447.00,468.7L1447.00,471.0L1446.00,471.0L1446.00,467.8L1445.00,467.8L1445.00,467.8L1444.00,467.8L1444.00,467.4L1443.00,467.4L1443.00,467.5L1442.00,467.5L1442.00,467.3L1441.00,467.3L1441.00,467.3L1440.00,467.3L1440.00,467.3L1439.00,467.3L1439.00,467.4L1438.00,467.4L1438.00,468.7L1437.00,468.7L1437.00,469.7L1436.00,469.7L1436.00,467.7L1435.00,467.7L1435.00,468.3L1434.00,468.3L1434.00,468.7L1433.00,468.7L1433.00,469.9L1432.00,469.9L1432.00,467.8L1431.00,467.8L1431.00,470.0L1430.00,470.0L1430.00,468.7L1429.00,468.7L1429.00,471.1L1428.00,471.1L1428.00,470.5L1427.00,470.5L1427.00,467.5L1426.00,467.5L1426.00,469.5L1425.00,469.5L1425.00,470.0L1424.00,470.0L1424.00,467.5L1423.00,467.5L1423.00,469.6L1422.00,469.6L1422.00,471.9L1421.00,471.9L1421.00,471.2L1420.00,471.2L1420.00,469.3L1419.00,469.3L1419.00,470.2L1418.00,470.2L1418.00,471.1L1417.00,471.1L1417.00,468.6L1416.00,468.6L1416.00,469.8L1415.00,469.8L1415.00,469.7L1414.00,469.7L1414.00,470.8L1413.00,470.8L1413.00,470.4L1412.00,470.4L1412.00,469.1L1411.00,469.1L1411.00,470.5L1410.00,470.5L1410.00,470.3L1409.00,470.3L1409.00,470.7L1408.00,470.7L1408.00,469.6L1407.00,469.6L1407.00,469.5L1406.00,469.5L1406.00,468.9L1405.00,468.9L1405.00,468.9L1404.00,468.9L1404.00,469.2L1403.00,469.2L1403.00,470.4L1402.00,470.4L1402.00,469.3L1401.00,469.3L1401.00,471.9L1400.00,471.9L1400.00,470.3L1399.00,470.3L1399.00,470.6L1398.00,470.6L1398.00,469.2L1397.00,469.2L1397.00,469.0L1396.00,469.0L1396.00,470.0L1395.00,470.0L1395.00,468.3L1394.00,468.3L1394.00,468.5L1393.00,468.5L1393.00,471.0L1392.00,471.0L1392.00,468.9L1391.00,468.9L1391.00,470.4L1390.00,470.4L1390.00,469.6L1389.00,469.6L1389.00,469.6L1388.00,469.6L1388.00,470.0L1387.00,470.0L1387.00,469.9L1386.00,469.9L1386.00,469.2L1385.00,469.2L1385.00,470.6L1384.00,470.6L1384.00,470.4L1383.00,470.4L1383.00,469.1L1382.00,469.1L1382.00,469.9L1381.00,469.9L1381.00,471.1L1380.00,471.1L1380.00,469.0L1379.00,469.0L1379.00,470.4L1378.00,470.4L1378.00,469.1L1377.00,469.1L1377.00,469.5L1376.00,469.5L1376.00,468.8L1375.00,468.8L1375.00,469.5L1374.00,469.5L1374.00,469.2L1373.00,469.2L1373.00,469.8L1372.00,469.8L1372.00,472.2L1371.00,472.2L1371.00,469.2L1370.00,469.2L1370.00,469.1L1369.00,469.1L1369.00,470.3L1368.00,470.3L1368.00,469.5L1367.00,469.5L1367.00,470.5L1366.00,470.5L1366.00,469.5L1365.00,469.5L1365.00,469.4L1364.00,469.4L1364.00,472.9L1363.00,472.9L1363.00,470.0L1362.00,470.0L1362.00,469.5L1361.00,469.5L1361.00,470.3L1360.00,470.3L1360.00,470.1L1359.00,470.1L1359.00,469.5L1358.00,469.5L1358.00,471.8L1357.00,471.8L1357.00,471.1L1356.00,471.1L1356.00,469.7L1355.00,469.7L1355.00,469.4L1354.00,469.4L1354.00,470.5L1353.00,470.5L1353.00,471.4L1352.00,471.4L1352.00,469.8L1351.00,469.8L1351.00,470.9L1350.00,470.9L1350.00,470.8L1349.00,470.8L1348.50,467.2L1346.00,468.0L1344.00,470.5L1342.50,475.0L1341.50,481.0L1340.90,490.0L1340.40,510.0L1339.60,542.0L1338.90,578.0L1338.40,625.0L1337.85,700.0L1337.50,841.0L1337.50,838.7L1337.50,842.2L1337.00,842.2L1337.00,840.7L1336.00,840.7L1336.00,838.7L1335.00,838.7L1335.00,840.4L1334.00,840.4L1334.00,839.2L1333.00,839.2L1333.00,841.3L1332.00,841.3L1332.00,840.9L1331.00,840.9L1331.00,840.9L1330.00,840.9L1330.00,839.2L1329.00,839.2L1329.00,841.4L1328.00,841.4L1328.00,841.7L1327.00,841.7L1327.00,843.7L1326.00,843.7L1326.00,841.0L1325.00,841.0L1325.00,840.1L1324.00,840.1L1324.00,840.9L1323.00,840.9L1323.00,841.5L1322.00,841.5L1322.00,840.8L1321.00,840.8L1321.00,841.1L1320.00,841.1L1320.00,842.7L1319.00,842.7L1319.00,841.5L1318.00,841.5L1318.00,842.8L1317.00,842.8L1317.00,841.2L1316.00,841.2L1316.00,841.1L1315.00,841.1L1315.00,841.7L1314.00,841.7L1314.00,840.5L1313.00,840.5L1313.00,841.7L1312.00,841.7L1312.00,840.3L1311.00,840.3L1311.00,843.1L1310.00,843.1L1310.00,840.8L1309.00,840.8L1309.00,842.2L1308.00,842.2L1308.00,841.1L1307.00,841.1L1307.00,840.5L1306.00,840.5L1306.00,842.2L1305.00,842.2L1305.00,841.2L1304.00,841.2L1304.00,842.1L1303.00,842.1L1303.00,841.1L1302.00,841.1L1302.00,842.9L1301.00,842.9L1301.00,842.8L1300.00,842.8L1300.00,840.9L1299.00,840.9L1299.00,840.4L1298.00,840.4L1298.00,842.4L1297.00,842.4L1297.00,841.9L1296.00,841.9L1296.00,840.9L1295.00,840.9L1295.00,840.3L1294.00,840.3L1294.00,842.1L1293.00,842.1L1293.00,841.3L1292.00,841.3L1292.00,840.7L1291.00,840.7L1291.00,840.1L1290.00,840.1L1290.00,840.1L1289.00,840.1L1289.00,840.1L1288.00,840.1L1288.00,840.5L1287.00,840.5L1287.00,840.0L1286.00,840.0L1286.00,840.4L1285.00,840.4L1285.00,840.1L1284.00,840.1L1284.00,840.3L1283.00,840.3L1283.00,840.2L1282.00,840.2L1282.00,839.7L1281.00,839.7L1281.00,841.3L1280.00,841.3L1280.00,840.1L1279.00,840.1L1279.00,841.0L1278.00,841.0L1278.00,841.8L1277.00,841.8L1277.00,840.1L1276.00,840.1L1276.00,841.1L1275.00,841.1L1275.00,839.6L1274.00,839.6L1274.00,839.6L1273.00,839.6L1273.00,839.9L1272.00,839.9L1272.00,841.7L1271.00,841.7L1271.00,841.1L1270.00,841.1L1270.00,840.7L1269.00,840.7L1269.00,842.5L1268.00,842.5L1268.00,840.4L1267.00,840.4L1267.00,842.1L1266.00,842.1L1266.00,840.9L1265.00,840.9L1265.00,844.9L1264.00,844.9L1264.00,841.3L1263.00,841.3L1263.00,841.8L1262.00,841.8L1262.00,844.5L1261.00,844.5L1261.00,840.8L1260.00,840.8L1260.00,842.5L1259.00,842.5L1259.00,840.7L1258.00,840.7L1258.00,841.3L1257.00,841.3L1257.00,840.5L1256.00,840.5L1256.00,843.0L1255.00,843.0L1255.00,841.2L1254.00,841.2L1254.00,840.2L1253.00,840.2L1253.00,841.2L1252.00,841.2L1252.00,843.6L1251.00,843.6L1251.00,841.7L1250.00,841.7L1250.00,840.9L1249.00,840.9L1249.00,843.1L1248.00,843.1L1248.00,840.1L1247.00,840.1L1247.00,839.6L1246.00,839.6L1246.00,839.7L1245.00,839.7L1245.00,842.0L1244.00,842.0L1244.00,839.9L1243.00,839.9L1243.00,840.1L1242.00,840.1L1242.00,840.3L1241.00,840.3L1241.00,842.2L1240.00,842.2L1240.00,841.3L1239.00,841.3L1239.00,842.6L1238.00,842.6L1238.00,841.2L1237.00,841.2L1237.00,840.5L1236.00,840.5L1236.00,840.8L1235.00,840.8L1235.00,839.4L1234.00,839.4L1234.00,841.8L1233.00,841.8L1233.00,840.8L1232.00,840.8L1232.00,839.6L1231.00,839.6L1231.00,842.9L1230.00,842.9L1230.00,839.7L1229.00,839.7L1229.00,840.9L1228.00,840.9L1228.00,840.5L1227.00,840.5L1227.00,842.5L1226.00,842.5L1226.00,842.2L1225.00,842.2L1225.00,840.5L1224.00,840.5L1224.00,842.2L1223.00,842.2L1223.00,842.8L1222.00,842.8L1222.00,840.6L1221.00,840.6L1221.00,842.9L1220.00,842.9L1220.00,843.0L1219.00,843.0L1219.00,842.7L1218.00,842.7L1218.00,841.6L1217.00,841.6L1217.00,840.5L1216.00,840.5L1216.00,840.6L1215.00,840.6L1215.00,840.8L1214.00,840.8L1214.00,840.6L1213.00,840.6L1213.00,840.4L1212.00,840.4L1212.00,842.6L1211.00,842.6L1211.00,843.9L1210.00,843.9L1210.00,841.6L1209.00,841.6L1209.00,842.9L1208.00,842.9L1208.00,838.7L1206.20,838.0L1203.50,834.0L1202.00,826.0L1201.00,815.0L1200.30,800.0L1199.40,780.0L1198.50,745.0L1198.00,730.0L1196.50,640.0L1195.50,560.0L1195.50,467.2L1195.50,469.6L1195.00,469.6L1195.00,470.6L1194.00,470.6L1194.00,469.3L1193.00,469.3L1193.00,469.7L1192.00,469.7L1192.00,471.6L1191.00,471.6L1191.00,469.8L1190.00,469.8L1190.00,469.0L1189.00,469.0L1189.00,468.6L1188.00,468.6L1188.00,470.7L1187.00,470.7L1187.00,469.3L1186.00,469.3L1186.00,470.9L1185.00,470.9L1185.00,469.8L1184.00,469.8L1184.00,469.2L1183.00,469.2L1183.00,469.7L1182.00,469.7L1182.00,470.9L1181.00,470.9L1181.00,469.4L1180.00,469.4L1180.00,469.4L1179.00,469.4L1179.00,469.6L1178.00,469.6L1178.00,470.7L1177.00,470.7L1177.00,472.2L1176.00,472.2L1176.00,471.3L1175.00,471.3L1175.00,472.4L1174.00,472.4L1174.00,471.0L1173.00,471.0L1173.00,471.0L1172.00,471.0L1172.00,469.5L1171.00,469.5L1171.00,471.1L1170.00,471.1L1170.00,469.8L1169.00,469.8L1169.00,469.1L1168.00,469.1L1168.00,468.7L1167.00,468.7L1167.00,468.5L1166.00,468.5L1166.00,468.5L1165.00,468.5L1165.00,469.9L1164.00,469.9L1164.00,468.6L1163.00,468.6L1163.00,472.6L1162.00,472.6L1162.00,472.8L1161.00,472.8L1161.00,470.8L1160.00,470.8L1160.00,470.3L1159.00,470.3L1159.00,468.5L1158.00,468.5L1158.00,471.0L1157.00,471.0L1157.00,471.6L1156.00,471.6L1156.00,468.0L1155.00,468.0L1155.00,471.0L1154.00,471.0L1154.00,467.8L1153.00,467.8L1153.00,469.5L1152.00,469.5L1152.00,467.9L1151.00,467.9L1151.00,470.4L1150.00,470.4L1150.00,468.9L1149.00,468.9L1149.00,468.0L1148.00,468.0L1148.00,468.2L1147.00,468.2L1147.00,469.4L1146.00,469.4L1146.00,468.7L1145.00,468.7L1145.00,468.5L1144.00,468.5L1144.00,469.9L1143.00,469.9L1143.00,471.0L1142.00,471.0L1142.00,469.0L1141.00,469.0L1141.00,469.1L1140.00,469.1L1140.00,469.3L1139.00,469.3L1139.00,471.5L1138.00,471.5L1138.00,469.7L1137.00,469.7L1137.00,470.9L1136.00,470.9L1136.00,470.4L1135.00,470.4L1135.00,470.4L1134.00,470.4L1134.00,470.4L1133.00,470.4L1133.00,472.9L1132.00,472.9L1132.00,472.9L1131.00,472.9L1131.00,472.7L1130.00,472.7L1130.00,471.5L1129.00,471.5L1129.00,472.5L1128.00,472.5L1128.00,472.0L1127.00,472.0L1127.00,470.9L1126.00,470.9L1126.00,470.3L1125.00,470.3L1125.00,469.7L1124.00,469.7L1124.00,471.3L1123.00,471.3L1123.00,469.1L1122.00,469.1L1122.00,471.7L1121.00,471.7L1121.00,469.1L1120.00,469.1L1120.00,471.2L1119.00,471.2L1119.00,469.3L1118.00,469.3L1118.00,469.5L1117.00,469.5L1117.00,470.0L1116.00,470.0L1116.00,469.0L1115.00,469.0L1115.00,468.9L1114.00,468.9L1114.00,468.8L1113.00,468.8L1113.00,468.8L1112.00,468.8L1112.00,470.3L1111.00,470.3L1111.00,468.6L1110.00,468.6L1110.00,469.7L1109.00,469.7L1109.00,469.2L1108.00,469.2L1108.00,470.6L1107.00,470.6L1107.00,470.5L1106.00,470.5L1106.00,468.4L1105.00,468.4L1105.00,468.7L1104.00,468.7L1104.00,470.2L1103.00,470.2L1103.00,470.8L1102.00,470.8L1102.00,468.6L1101.00,468.6L1101.00,469.4L1100.00,469.4L1100.00,469.8L1099.00,469.8L1099.00,470.4L1098.00,470.4L1098.00,468.0L1097.00,468.0L1097.00,468.6L1096.00,468.6L1096.00,468.0L1095.00,468.0L1095.00,469.7L1094.00,469.7L1094.00,468.8L1093.00,468.8L1093.00,468.4L1092.00,468.4L1092.00,468.7L1091.00,468.7L1091.00,468.9L1090.00,468.9L1090.00,469.2L1089.00,469.2L1089.00,469.9L1088.00,469.9L1088.00,468.9L1087.00,468.9L1087.00,469.2L1086.00,469.2L1086.00,470.0L1085.00,470.0L1085.00,470.2L1084.00,470.2L1084.00,468.7L1083.00,468.7L1083.00,470.2L1082.00,470.2L1082.00,468.2L1081.00,468.2L1081.00,467.8L1080.00,467.8L1080.00,467.6L1079.00,467.6L1079.00,469.7L1078.00,469.7L1078.00,468.4L1077.00,468.4L1077.00,468.7L1076.00,468.7L1076.00,467.4L1075.00,467.4L1075.00,468.3L1074.00,468.3L1074.00,467.2L1073.00,467.2L1073.00,467.3L1072.00,467.3L1072.00,469.2L1071.00,469.2L1071.00,467.3L1070.00,467.3L1070.00,470.9L1069.00,470.9L1068.10,467.2L1065.60,468.0L1063.60,470.5L1062.10,475.0L1061.10,481.0L1060.50,490.0L1060.00,510.0L1059.20,542.0L1058.50,578.0L1058.00,625.0L1057.45,700.0L1057.10,841.0L1057.10,838.7L1057.10,840.6L1057.00,840.6L1057.00,840.2L1056.00,840.2L1056.00,838.7L1055.00,838.7L1055.00,840.0L1054.00,840.0L1054.00,840.8L1053.00,840.8L1053.00,840.1L1052.00,840.1L1052.00,838.7L1051.00,838.7L1051.00,839.3L1050.00,839.3L1050.00,839.6L1049.00,839.6L1049.00,840.4L1048.00,840.4L1048.00,840.0L1047.00,840.0L1047.00,839.8L1046.00,839.8L1046.00,842.3L1045.00,842.3L1045.00,841.4L1044.00,841.4L1044.00,841.7L1043.00,841.7L1043.00,842.6L1042.00,842.6L1042.00,842.1L1041.00,842.1L1041.00,842.1L1040.00,842.1L1040.00,841.3L1039.00,841.3L1039.00,845.0L1038.00,845.0L1038.00,843.6L1037.00,843.6L1037.00,842.9L1036.00,842.9L1036.00,841.4L1035.00,841.4L1035.00,842.0L1034.00,842.0L1034.00,842.3L1033.00,842.3L1033.00,840.4L1032.00,840.4L1032.00,840.9L1031.00,840.9L1031.00,841.6L1030.00,841.6L1030.00,845.0L1029.00,845.0L1029.00,841.5L1028.00,841.5L1028.00,840.9L1027.00,840.9L1027.00,842.3L1026.00,842.3L1026.00,842.8L1025.00,842.8L1025.00,844.0L1024.00,844.0L1024.00,841.1L1023.00,841.1L1023.00,841.2L1022.00,841.2L1022.00,845.2L1021.00,845.2L1021.00,841.8L1020.00,841.8L1020.00,841.2L1019.00,841.2L1019.00,842.3L1018.00,842.3L1018.00,840.3L1017.00,840.3L1017.00,840.1L1016.00,840.1L1016.00,840.4L1015.00,840.4L1015.00,841.2L1014.00,841.2L1014.00,840.4L1013.00,840.4L1013.00,841.4L1012.00,841.4L1012.00,841.0L1011.00,841.0L1011.00,840.7L1010.00,840.7L1010.00,841.4L1009.00,841.4L1009.00,841.0L1008.00,841.0L1008.00,842.5L1007.00,842.5L1007.00,840.8L1006.00,840.8L1006.00,840.3L1005.00,840.3L1005.00,842.6L1004.00,842.6L1004.00,840.3L1003.00,840.3L1003.00,840.6L1002.00,840.6L1002.00,843.1L1001.00,843.1L1001.00,843.3L1000.00,843.3L1000.00,840.5L999.00,840.5L999.00,840.4L998.00,840.4L998.00,840.1L997.00,840.1L997.00,842.0L996.00,842.0L996.00,839.8L995.00,839.8L995.00,841.6L994.00,841.6L994.00,840.9L993.00,840.9L993.00,839.5L992.00,839.5L992.00,839.2L991.00,839.2L991.00,841.0L990.00,841.0L990.00,838.9L989.00,838.9L989.00,840.5L988.00,840.5L988.00,838.8L987.00,838.8L987.00,838.7L986.00,838.7L986.00,840.0L985.00,840.0L985.00,840.8L984.00,840.8L984.00,843.1L983.00,843.1L983.00,839.0L982.00,839.0L982.00,841.4L981.00,841.4L981.00,840.9L980.00,840.9L980.00,839.4L979.00,839.4L979.00,839.7L978.00,839.7L978.00,840.2L977.00,840.2L977.00,841.0L976.00,841.0L976.00,840.3L975.00,840.3L975.00,839.7L974.00,839.7L974.00,841.2L973.00,841.2L973.00,839.5L972.00,839.5L972.00,839.5L971.00,839.5L971.00,838.8L970.00,838.8L970.00,839.5L969.00,839.5L969.00,838.7L968.00,838.7L968.00,838.8L967.00,838.8L967.00,841.4L966.00,841.4L966.00,841.1L965.00,841.1L965.00,839.1L964.00,839.1L964.00,839.3L963.00,839.3L963.00,840.9L962.00,840.9L962.00,839.3L961.00,839.3L961.00,839.4L960.00,839.4L960.00,840.5L959.00,840.5L959.00,839.6L958.00,839.6L958.00,839.7L957.00,839.7L957.00,840.0L956.00,840.0L956.00,839.6L955.00,839.6L955.00,839.7L954.00,839.7L954.00,838.9L953.00,838.9L953.00,839.1L952.00,839.1L952.00,838.7L951.00,838.7L951.00,838.7L950.00,838.7L950.00,840.2L949.00,840.2L949.00,838.7L948.00,838.7L948.00,838.7L947.00,838.7L947.00,839.5L946.00,839.5L946.00,839.0L945.00,839.0L945.00,839.8L944.00,839.8L944.00,838.7L943.00,838.7L943.00,838.9L942.00,838.9L942.00,839.2L941.00,839.2L941.00,840.4L940.00,840.4L940.00,841.5L939.00,841.5L939.00,841.1L938.00,841.1L938.00,842.0L937.00,842.0L937.00,841.4L936.00,841.4L936.00,840.2L935.00,840.2L935.00,839.6L934.00,839.6L934.00,840.2L933.00,840.2L933.00,841.2L932.00,841.2L932.00,840.1L931.00,840.1L931.00,841.2L930.00,841.2L930.00,840.6L929.00,840.6L929.00,842.4L928.00,842.4L927.60,838.7L925.80,838.0L923.10,834.0L921.60,826.0L920.60,815.0L919.90,800.0L919.00,780.0L918.10,745.0L917.60,730.0L916.10,640.0L915.10,560.0L915.10,467.2L915.10,468.9L915.00,468.9L915.00,467.9L914.00,467.9L914.00,470.1L913.00,470.1L913.00,467.8L912.00,467.8L912.00,469.0L911.00,469.0L911.00,467.9L910.00,467.9L910.00,467.5L909.00,467.5L909.00,468.8L908.00,468.8L908.00,467.6L907.00,467.6L907.00,467.5L906.00,467.5L906.00,467.4L905.00,467.4L905.00,467.2L904.00,467.2L904.00,467.3L903.00,467.3L903.00,469.0L902.00,469.0L902.00,467.4L901.00,467.4L901.00,468.6L900.00,468.6L900.00,468.9L899.00,468.9L899.00,468.2L898.00,468.2L898.00,468.9L897.00,468.9L897.00,470.7L896.00,470.7L896.00,470.2L895.00,470.2L895.00,469.3L894.00,469.3L894.00,471.6L893.00,471.6L893.00,469.7L892.00,469.7L892.00,468.5L891.00,468.5L891.00,470.4L890.00,470.4L890.00,468.6L889.00,468.6L889.00,468.4L888.00,468.4L888.00,468.6L887.00,468.6L887.00,468.1L886.00,468.1L886.00,468.0L885.00,468.0L885.00,469.1L884.00,469.1L884.00,468.5L883.00,468.5L883.00,467.7L882.00,467.7L882.00,468.2L881.00,468.2L881.00,467.9L880.00,467.9L880.00,467.9L879.00,467.9L879.00,468.6L878.00,468.6L878.00,470.2L877.00,470.2L877.00,468.1L876.00,468.1L876.00,467.9L875.00,467.9L875.00,467.8L874.00,467.8L874.00,467.9L873.00,467.9L873.00,468.1L872.00,468.1L872.00,468.5L871.00,468.5L871.00,468.2L870.00,468.2L870.00,468.6L869.00,468.6L869.00,470.0L868.00,470.0L868.00,468.9L867.00,468.9L867.00,468.6L866.00,468.6L866.00,472.0L865.00,472.0L865.00,469.6L864.00,469.6L864.00,468.8L863.00,468.8L863.00,469.5L862.00,469.5L862.00,469.7L861.00,469.7L861.00,468.8L860.00,468.8L860.00,468.9L859.00,468.9L859.00,470.2L858.00,470.2L858.00,470.1L857.00,470.1L857.00,468.5L856.00,468.5L856.00,470.6L855.00,470.6L855.00,468.8L854.00,468.8L854.00,469.2L853.00,469.2L853.00,470.2L852.00,470.2L852.00,469.8L851.00,469.8L851.00,469.6L850.00,469.6L850.00,469.0L849.00,469.0L849.00,468.8L848.00,468.8L848.00,468.9L847.00,468.9L847.00,471.1L846.00,471.1L846.00,469.0L845.00,469.0L845.00,470.5L844.00,470.5L844.00,469.6L843.00,469.6L843.00,469.8L842.00,469.8L842.00,469.9L841.00,469.9L841.00,469.7L840.00,469.7L840.00,472.6L839.00,472.6L839.00,469.0L838.00,469.0L838.00,469.2L837.00,469.2L837.00,470.7L836.00,470.7L836.00,470.0L835.00,470.0L835.00,468.3L834.00,468.3L834.00,468.7L833.00,468.7L833.00,469.6L832.00,469.6L832.00,469.9L831.00,469.9L831.00,469.4L830.00,469.4L830.00,471.1L829.00,471.1L829.00,468.3L828.00,468.3L828.00,470.2L827.00,470.2L827.00,469.2L826.00,469.2L826.00,468.6L825.00,468.6L825.00,468.4L824.00,468.4L824.00,469.3L823.00,469.3L823.00,471.7L822.00,471.7L822.00,468.8L821.00,468.8L821.00,468.7L820.00,468.7L820.00,469.5L819.00,469.5L819.00,470.7L818.00,470.7L818.00,468.8L817.00,468.8L817.00,468.2L816.00,468.2L816.00,467.9L815.00,467.9L815.00,468.8L814.00,468.8L814.00,468.1L813.00,468.1L813.00,468.1L812.00,468.1L812.00,469.2L811.00,469.2L811.00,469.7L810.00,469.7L810.00,467.9L809.00,467.9L809.00,467.5L808.00,467.5L808.00,467.5L807.00,467.5L807.00,469.3L806.00,469.3L806.00,469.7L805.00,469.7L805.00,468.1L804.00,468.1L804.00,467.7L803.00,467.7L803.00,469.9L802.00,469.9L802.00,468.0L801.00,468.0L801.00,470.1L800.00,470.1L800.00,468.7L799.00,468.7L799.00,470.0L798.00,470.0L798.00,469.3L797.00,469.3L797.00,469.2L796.00,469.2L796.00,469.9L795.00,469.9L795.00,470.2L794.00,470.2L794.00,468.8L793.00,468.8L793.00,469.6L792.00,469.6L792.00,468.2L791.00,468.2L791.00,468.5L790.00,468.5L790.00,468.1L789.00,468.1L789.00,470.0L788.00,470.0L787.70,467.2L785.20,468.0L783.20,470.5L781.70,475.0L780.70,481.0L780.10,490.0L779.60,510.0L778.80,542.0L778.10,578.0L777.60,625.0L777.05,700.0L776.70,841.0L776.70,838.7L776.70,841.2L776.00,841.2L776.00,841.0L775.00,841.0L775.00,842.4L774.00,842.4L774.00,840.9L773.00,840.9L773.00,842.0L772.00,842.0L772.00,840.8L771.00,840.8L771.00,840.6L770.00,840.6L770.00,839.9L769.00,839.9L769.00,840.7L768.00,840.7L768.00,841.9L767.00,841.9L767.00,839.7L766.00,839.7L766.00,839.7L765.00,839.7L765.00,839.9L764.00,839.9L764.00,839.8L763.00,839.8L763.00,840.2L762.00,840.2L762.00,840.5L761.00,840.5L761.00,843.8L760.00,843.8L760.00,840.0L759.00,840.0L759.00,840.0L758.00,840.0L758.00,841.0L757.00,841.0L757.00,841.8L756.00,841.8L756.00,843.8L755.00,843.8L755.00,841.9L754.00,841.9L754.00,841.7L753.00,841.7L753.00,840.5L752.00,840.5L752.00,841.1L751.00,841.1L751.00,841.5L750.00,841.5L750.00,840.9L749.00,840.9L749.00,839.9L748.00,839.9L748.00,842.2L747.00,842.2L747.00,841.0L746.00,841.0L746.00,841.5L745.00,841.5L745.00,839.7L744.00,839.7L744.00,840.3L743.00,840.3L743.00,844.3L742.00,844.3L742.00,843.4L741.00,843.4L741.00,841.0L740.00,841.0L740.00,842.5L739.00,842.5L739.00,840.9L738.00,840.9L738.00,843.2L737.00,843.2L737.00,841.7L736.00,841.7L736.00,842.9L735.00,842.9L735.00,843.8L734.00,843.8L734.00,843.7L733.00,843.7L733.00,841.9L732.00,841.9L732.00,843.7L731.00,843.7L731.00,842.5L730.00,842.5L730.00,843.6L729.00,843.6L729.00,843.8L728.00,843.8L728.00,843.2L727.00,843.2L727.00,841.3L726.00,841.3L726.00,840.9L725.00,840.9L725.00,840.7L724.00,840.7L724.00,840.2L723.00,840.2L723.00,840.1L722.00,840.1L722.00,840.8L721.00,840.8L721.00,841.9L720.00,841.9L720.00,840.7L719.00,840.7L719.00,839.2L718.00,839.2L718.00,840.0L717.00,840.0L717.00,839.3L716.00,839.3L716.00,839.3L715.00,839.3L715.00,838.7L714.00,838.7L714.00,840.5L713.00,840.5L713.00,840.1L712.00,840.1L712.00,839.4L711.00,839.4L711.00,839.7L710.00,839.7L710.00,840.7L709.00,840.7L709.00,840.4L708.00,840.4L708.00,838.7L707.00,838.7L707.00,841.3L706.00,841.3L706.00,840.1L705.00,840.1L705.00,839.4L704.00,839.4L704.00,840.7L703.00,840.7L703.00,840.8L702.00,840.8L702.00,842.3L701.00,842.3L701.00,842.9L700.00,842.9L700.00,841.2L699.00,841.2L699.00,842.4L698.00,842.4L698.00,840.6L697.00,840.6L697.00,841.9L696.00,841.9L696.00,843.1L695.00,843.1L695.00,842.7L694.00,842.7L694.00,841.6L693.00,841.6L693.00,842.7L692.00,842.7L692.00,842.2L691.00,842.2L691.00,842.2L690.00,842.2L690.00,843.9L689.00,843.9L689.00,841.5L688.00,841.5L688.00,841.3L687.00,841.3L687.00,843.1L686.00,843.1L686.00,841.5L685.00,841.5L685.00,841.6L684.00,841.6L684.00,842.2L683.00,842.2L683.00,841.6L682.00,841.6L682.00,843.1L681.00,843.1L681.00,841.7L680.00,841.7L680.00,841.5L679.00,841.5L679.00,843.9L678.00,843.9L678.00,843.3L677.00,843.3L677.00,843.2L676.00,843.2L676.00,843.0L675.00,843.0L675.00,842.3L674.00,842.3L674.00,841.2L673.00,841.2L673.00,843.9L672.00,843.9L672.00,843.0L671.00,843.0L671.00,842.0L670.00,842.0L670.00,840.6L669.00,840.6L669.00,840.9L668.00,840.9L668.00,841.4L667.00,841.4L667.00,841.9L666.00,841.9L666.00,841.0L665.00,841.0L665.00,839.5L664.00,839.5L664.00,840.7L663.00,840.7L663.00,839.3L662.00,839.3L662.00,839.6L661.00,839.6L661.00,840.1L660.00,840.1L660.00,840.7L659.00,840.7L659.00,842.6L658.00,842.6L658.00,841.1L657.00,841.1L657.00,838.7L656.00,838.7L656.00,838.7L655.00,838.7L655.00,838.7L654.00,838.7L654.00,839.1L653.00,839.1L653.00,840.2L652.00,840.2L652.00,839.9L651.00,839.9L651.00,840.7L650.00,840.7L650.00,840.5L649.00,840.5L649.00,839.0L648.00,839.0L647.20,838.7L645.40,838.0L642.70,834.0L641.20,826.0L640.20,815.0L639.50,800.0L638.60,780.0L637.70,745.0L637.20,730.0L635.70,640.0L634.70,560.0L634.70,467.2L634.70,469.6L634.00,469.6L634.00,470.8L633.00,470.8L633.00,469.7L632.00,469.7L632.00,468.5L631.00,468.5L631.00,468.5L630.00,468.5L630.00,467.9L629.00,467.9L629.00,467.7L628.00,467.7L628.00,469.1L627.00,469.1L627.00,470.0L626.00,470.0L626.00,469.4L625.00,469.4L625.00,468.2L624.00,468.2L624.00,470.7L623.00,470.7L623.00,469.0L622.00,469.0L622.00,470.2L621.00,470.2L621.00,471.1L620.00,471.1L620.00,469.3L619.00,469.3L619.00,470.3L618.00,470.3L618.00,471.9L617.00,471.9L617.00,469.3L616.00,469.3L616.00,469.4L615.00,469.4L615.00,469.4L614.00,469.4L614.00,469.3L613.00,469.3L613.00,470.6L612.00,470.6L612.00,470.0L611.00,470.0L611.00,470.8L610.00,470.8L610.00,469.7L609.00,469.7L609.00,469.9L608.00,469.9L608.00,470.1L607.00,470.1L607.00,469.0L606.00,469.0L606.00,469.5L605.00,469.5L605.00,470.5L604.00,470.5L604.00,468.8L603.00,468.8L603.00,471.0L602.00,471.0L602.00,468.6L601.00,468.6L601.00,468.9L600.00,468.9L600.00,468.7L599.00,468.7L599.00,468.6L598.00,468.6L598.00,468.9L597.00,468.9L597.00,468.2L596.00,468.2L596.00,468.3L595.00,468.3L595.00,469.1L594.00,469.1L594.00,468.6L593.00,468.6L593.00,468.1L592.00,468.1L592.00,468.2L591.00,468.2L591.00,471.1L590.00,471.1L590.00,468.4L589.00,468.4L589.00,469.9L588.00,469.9L588.00,471.2L587.00,471.2L587.00,468.9L586.00,468.9L586.00,468.9L585.00,468.9L585.00,469.1L584.00,469.1L584.00,471.2L583.00,471.2L583.00,470.2L582.00,470.2L582.00,469.7L581.00,469.7L581.00,473.0L580.00,473.0L580.00,471.5L579.00,471.5L579.00,471.0L578.00,471.0L578.00,469.4L577.00,469.4L577.00,469.6L576.00,469.6L576.00,469.3L575.00,469.3L575.00,469.7L574.00,469.7L574.00,469.2L573.00,469.2L573.00,468.7L572.00,468.7L572.00,468.1L571.00,468.1L571.00,469.2L570.00,469.2L570.00,467.2L569.00,467.2L569.00,468.1L568.00,468.1L568.00,467.2L567.00,467.2L567.00,467.4L566.00,467.4L566.00,469.1L565.00,469.1L565.00,469.9L564.00,469.9L564.00,468.9L563.00,468.9L563.00,468.1L562.00,468.1L562.00,468.1L561.00,468.1L561.00,468.8L560.00,468.8L560.00,469.0L559.00,469.0L559.00,467.8L558.00,467.8L558.00,469.4L557.00,469.4L557.00,468.3L556.00,468.3L556.00,469.5L555.00,469.5L555.00,468.4L554.00,468.4L554.00,472.9L553.00,472.9L553.00,469.2L552.00,469.2L552.00,470.4L551.00,470.4L551.00,471.9L550.00,471.9L550.00,468.8L549.00,468.8L549.00,471.7L548.00,471.7L548.00,469.9L547.00,469.9L547.00,469.4L546.00,469.4L546.00,471.4L545.00,471.4L545.00,469.8L544.00,469.8L544.00,470.2L543.00,470.2L543.00,473.2L542.00,473.2L542.00,469.4L541.00,469.4L541.00,470.6L540.00,470.6L540.00,470.4L539.00,470.4L539.00,471.0L538.00,471.0L538.00,469.8L537.00,469.8L537.00,469.6L536.00,469.6L536.00,471.7L535.00,471.7L535.00,470.3L534.00,470.3L534.00,470.4L533.00,470.4L533.00,470.7L532.00,470.7L532.00,470.6L531.00,470.6L531.00,471.4L530.00,471.4L530.00,471.0L529.00,471.0L529.00,469.5L528.00,469.5L528.00,469.3L527.00,469.3L527.00,470.6L526.00,470.6L526.00,469.4L525.00,469.4L525.00,470.5L524.00,470.5L524.00,470.6L523.00,470.6L523.00,470.9L522.00,470.9L522.00,469.1L521.00,469.1L521.00,469.5L520.00,469.5L520.00,469.0L519.00,469.0L519.00,469.3L518.00,469.3L518.00,470.9L517.00,470.9L517.00,473.7L516.00,473.7L516.00,469.0L515.00,469.0L515.00,469.1L514.00,469.1L514.00,469.4L513.00,469.4L513.00,470.1L512.00,470.1L512.00,470.0L511.00,470.0L511.00,471.7L510.00,471.7L510.00,470.9L509.00,470.9L509.00,471.0L508.00,471.0L507.30,467.2L504.80,468.0L502.80,470.5L501.30,475.0L500.30,481.0L499.70,490.0L499.20,510.0L498.40,542.0L497.70,578.0L497.20,625.0L496.65,700.0L496.30,841.0L496.30,838.7L496.30,840.1L496.00,840.1L496.00,839.2L495.00,839.2L495.00,841.3L494.00,841.3L494.00,838.8L493.00,838.8L493.00,839.1L492.00,839.1L492.00,842.5L491.00,842.5L491.00,840.7L490.00,840.7L490.00,839.6L489.00,839.6L489.00,839.9L488.00,839.9L488.00,841.9L487.00,841.9L487.00,841.0L486.00,841.0L486.00,839.7L485.00,839.7L485.00,841.7L484.00,841.7L484.00,839.8L483.00,839.8L483.00,842.2L482.00,842.2L482.00,839.8L481.00,839.8L481.00,841.7L480.00,841.7L480.00,840.5L479.00,840.5L479.00,839.9L478.00,839.9L478.00,842.4L477.00,842.4L477.00,844.3L476.00,844.3L476.00,840.7L475.00,840.7L475.00,840.6L474.00,840.6L474.00,841.3L473.00,841.3L473.00,840.9L472.00,840.9L472.00,840.2L471.00,840.2L471.00,842.0L470.00,842.0L470.00,841.2L469.00,841.2L469.00,839.8L468.00,839.8L468.00,839.6L467.00,839.6L467.00,842.5L466.00,842.5L466.00,839.0L465.00,839.0L465.00,839.4L464.00,839.4L464.00,839.2L463.00,839.2L463.00,838.9L462.00,838.9L462.00,840.8L461.00,840.8L461.00,839.6L460.00,839.6L460.00,839.9L459.00,839.9L459.00,841.3L458.00,841.3L458.00,840.4L457.00,840.4L457.00,839.8L456.00,839.8L456.00,841.5L455.00,841.5L455.00,842.0L454.00,842.0L454.00,840.4L453.00,840.4L453.00,841.1L452.00,841.1L452.00,840.0L451.00,840.0L451.00,840.2L450.00,840.2L450.00,842.9L449.00,842.9L449.00,840.7L448.00,840.7L448.00,842.0L447.00,842.0L447.00,841.5L446.00,841.5L446.00,843.2L445.00,843.2L445.00,842.1L444.00,842.1L444.00,841.9L443.00,841.9L443.00,843.1L442.00,843.1L442.00,842.0L441.00,842.0L441.00,843.6L440.00,843.6L440.00,842.7L439.00,842.7L439.00,841.2L438.00,841.2L438.00,841.8L437.00,841.8L437.00,841.2L436.00,841.2L436.00,841.9L435.00,841.9L435.00,843.7L434.00,843.7L434.00,841.2L433.00,841.2L433.00,841.3L432.00,841.3L432.00,840.2L431.00,840.2L431.00,842.0L430.00,842.0L430.00,844.6L429.00,844.6L429.00,841.5L428.00,841.5L428.00,840.5L427.00,840.5L427.00,842.3L426.00,842.3L426.00,841.4L425.00,841.4L425.00,841.1L424.00,841.1L424.00,842.8L423.00,842.8L423.00,842.4L422.00,842.4L422.00,842.6L421.00,842.6L421.00,841.5L420.00,841.5L420.00,842.9L419.00,842.9L419.00,841.1L418.00,841.1L418.00,843.5L417.00,843.5L417.00,842.0L416.00,842.0L416.00,841.5L415.00,841.5L415.00,840.7L414.00,840.7L414.00,841.6L413.00,841.6L413.00,840.2L412.00,840.2L412.00,840.9L411.00,840.9L411.00,839.9L410.00,839.9L410.00,839.6L409.00,839.6L409.00,840.7L408.00,840.7L408.00,839.2L407.00,839.2L407.00,840.3L406.00,840.3L406.00,839.3L405.00,839.3L405.00,840.7L404.00,840.7L404.00,839.0L403.00,839.0L403.00,838.7L402.00,838.7L402.00,839.4L401.00,839.4L401.00,838.7L400.00,838.7L400.00,839.6L399.00,839.6L399.00,838.7L398.00,838.7L398.00,838.7L397.00,838.7L397.00,840.2L396.00,840.2L396.00,838.7L395.00,838.7L395.00,840.2L394.00,840.2L394.00,839.7L393.00,839.7L393.00,839.4L392.00,839.4L392.00,841.0L391.00,841.0L391.00,839.0L390.00,839.0L390.00,839.7L389.00,839.7L389.00,840.4L388.00,840.4L388.00,839.3L387.00,839.3L387.00,839.1L386.00,839.1L386.00,839.5L385.00,839.5L385.00,841.3L384.00,841.3L384.00,840.4L383.00,840.4L383.00,841.5L382.00,841.5L382.00,839.2L381.00,839.2L381.00,841.1L380.00,841.1L380.00,839.8L379.00,839.8L379.00,841.7L378.00,841.7L378.00,840.6L377.00,840.6L377.00,840.6L376.00,840.6L376.00,840.0L375.00,840.0L375.00,840.9L374.00,840.9L374.00,841.1L373.00,841.1L373.00,842.8L372.00,842.8L372.00,840.9L371.00,840.9L371.00,841.1L370.00,841.1L370.00,842.5L369.00,842.5L369.00,841.6L368.00,841.6L368.00,841.1L367.00,841.1L366.80,838.7L365.00,838.0L362.30,834.0L360.80,826.0L359.80,815.0L359.10,800.0L358.20,780.0L357.30,745.0L356.80,730.0L355.30,640.0L354.30,560.0L354.30,467.2L354.30,468.4L354.00,468.4L354.00,468.9L353.00,468.9L353.00,470.7L352.00,470.7L352.00,469.8L351.00,469.8L351.00,471.0L350.00,471.0L350.00,470.7L349.00,470.7L349.00,469.6L348.00,469.6L348.00,468.7L347.00,468.7L347.00,469.0L346.00,469.0L346.00,468.6L345.00,468.6L345.00,469.3L344.00,469.3L344.00,470.0L343.00,470.0L343.00,469.1L342.00,469.1L342.00,470.1L341.00,470.1L341.00,470.1L340.00,470.1L340.00,469.9L339.00,469.9L339.00,469.5L338.00,469.5L338.00,469.1L337.00,469.1L337.00,469.9L336.00,469.9L336.00,470.1L335.00,470.1L335.00,468.9L334.00,468.9L334.00,470.1L333.00,470.1L333.00,469.2L332.00,469.2L332.00,471.4L331.00,471.4L331.00,470.6L330.00,470.6L330.00,469.8L329.00,469.8L329.00,469.7L328.00,469.7L328.00,472.4L327.00,472.4L327.00,470.4L326.00,470.4L326.00,469.9L325.00,469.9L325.00,470.0L324.00,470.0L324.00,470.4L323.00,470.4L323.00,472.0L322.00,472.0L322.00,472.4L321.00,472.4L321.00,472.0L320.00,472.0L320.00,472.2L319.00,472.2L319.00,470.7L318.00,470.7L318.00,470.4L317.00,470.4L317.00,469.9L316.00,469.9L316.00,471.0L315.00,471.0L315.00,469.6L314.00,469.6L314.00,469.0L313.00,469.0L313.00,471.6L312.00,471.6L312.00,472.5L311.00,472.5L311.00,469.9L310.00,469.9L310.00,468.7L309.00,468.7L309.00,469.4L308.00,469.4L308.00,468.5L307.00,468.5L307.00,468.5L306.00,468.5L306.00,468.5L305.00,468.5L305.00,467.5L304.00,467.5L304.00,469.0L303.00,469.0L303.00,468.0L302.00,468.0L302.00,469.7L301.00,469.7L301.00,467.3L300.00,467.3L300.00,469.6L299.00,469.6L299.00,468.2L298.00,468.2L298.00,467.7L297.00,467.7L297.00,468.5L296.00,468.5L296.00,469.9L295.00,469.9L295.00,469.1L294.00,469.1L294.00,468.6L293.00,468.6L293.00,468.0L292.00,468.0L292.00,468.0L291.00,468.0L291.00,468.3L290.00,468.3L290.00,467.7L289.00,467.7L289.00,467.7L288.00,467.7L288.00,469.3L287.00,469.3L287.00,469.7L286.00,469.7L286.00,467.6L285.00,467.6L285.00,470.1L284.00,470.1L284.00,470.0L283.00,470.0L283.00,467.8L282.00,467.8L282.00,468.4L281.00,468.4L281.00,469.1L280.00,469.1L280.00,468.9L279.00,468.9L279.00,470.0L278.00,470.0L278.00,469.5L277.00,469.5L277.00,469.1L276.00,469.1L276.00,469.9L275.00,469.9L275.00,470.1L274.00,470.1L274.00,469.6L273.00,469.6L273.00,469.0L272.00,469.0L272.00,468.5L271.00,468.5L271.00,469.2L270.00,469.2L270.00,468.9L269.00,468.9L269.00,468.0L268.00,468.0L268.00,467.2L267.00,467.2L267.00,468.5L266.00,468.5L266.00,467.5L265.00,467.5L265.00,467.8L264.00,467.8L264.00,467.8L263.00,467.8L263.00,467.5L262.00,467.5L262.00,467.2L261.00,467.2L261.00,467.2L260.00,467.2L260.00,467.2L259.00,467.2L259.00,467.2L258.00,467.2L258.00,467.2L257.00,467.2L257.00,467.2L256.00,467.2L256.00,468.4L255.00,468.4L255.00,467.8L254.00,467.8L254.00,469.0L253.00,469.0L253.00,467.2L252.00,467.2L252.00,468.5L251.00,468.5L251.00,467.2L250.00,467.2L250.00,467.2L249.00,467.2L249.00,469.7L248.00,469.7L248.00,469.1L247.00,469.1L247.00,467.3L246.00,467.3L246.00,469.4L245.00,469.4L245.00,468.0L244.00,468.0L244.00,468.2L243.00,468.2L243.00,468.0L242.00,468.0L242.00,468.1L241.00,468.1L241.00,470.6L240.00,470.6L240.00,470.7L239.00,470.7L239.00,468.4L238.00,468.4L238.00,468.3L237.00,468.3L237.00,470.1L236.00,470.1L236.00,470.1L235.00,470.1L235.00,469.4L234.00,469.4L234.00,470.2L233.00,470.2L233.00,468.6L232.00,468.6L232.00,468.4L231.00,468.4L231.00,468.5L230.00,468.5L230.00,469.9L229.00,469.9L229.00,472.2L228.00,472.2L228.00,470.1L227.00,470.1L226.90,467.2L224.40,468.0L222.40,470.5L220.90,475.0L219.90,481.0L219.30,490.0L218.80,510.0L218.00,542.0L217.30,578.0L216.80,625.0L216.25,700.0L215.90,841.0L215.90,838.7L215.90,840.7L215.00,840.7L215.00,842.7L214.00,842.7L214.00,842.6L213.00,842.6L213.00,842.5L212.00,842.5L212.00,840.5L211.00,840.5L211.00,841.6L210.00,841.6L210.00,841.3L209.00,841.3L209.00,842.8L208.00,842.8L208.00,842.8L207.00,842.8L207.00,841.1L206.00,841.1L206.00,840.3L205.00,840.3L205.00,840.7L204.00,840.7L204.00,840.5L203.00,840.5L203.00,842.9L202.00,842.9L202.00,841.6L201.00,841.6L201.00,842.6L200.00,842.6L200.00,841.7L199.00,841.7L199.00,840.4L198.00,840.4L198.00,840.6L197.00,840.6L197.00,840.2L196.00,840.2L196.00,839.7L195.00,839.7L195.00,839.8L194.00,839.8L194.00,840.4L193.00,840.4L193.00,840.5L192.00,840.5L192.00,842.0L191.00,842.0L191.00,839.9L190.00,839.9L190.00,842.0L189.00,842.0L189.00,840.4L188.00,840.4L188.00,840.4L187.00,840.4L187.00,839.9L186.00,839.9L186.00,839.4L185.00,839.4L185.00,839.1L184.00,839.1L184.00,839.2L183.00,839.2L183.00,838.7L182.00,838.7L182.00,839.0L181.00,839.0L181.00,842.2L180.00,842.2L180.00,838.7L179.00,838.7L179.00,838.7L178.00,838.7L178.00,838.7L177.00,838.7L177.00,839.2L176.00,839.2L176.00,838.7L175.00,838.7L175.00,841.8L174.00,841.8L174.00,840.9L173.00,840.9L173.00,839.1L172.00,839.1L172.00,840.6L171.00,840.6L171.00,839.9L170.00,839.9L170.00,839.6L169.00,839.6L169.00,840.3L168.00,840.3L168.00,840.0L167.00,840.0L167.00,841.1L166.00,841.1L166.00,842.2L165.00,842.2L165.00,840.2L164.00,840.2L164.00,844.8L163.00,844.8L163.00,840.2L162.00,840.2L162.00,840.2L161.00,840.2L161.00,842.6L160.00,842.6L160.00,840.0L159.00,840.0L159.00,842.0L158.00,842.0L158.00,840.9L157.00,840.9L157.00,842.1L156.00,842.1L156.00,840.3L155.00,840.3L155.00,840.5L154.00,840.5L154.00,840.1L153.00,840.1L153.00,840.6L152.00,840.6L152.00,840.6L151.00,840.6L151.00,840.3L150.00,840.3L150.00,842.3L149.00,842.3L149.00,842.3L148.00,842.3L148.00,840.2L147.00,840.2L147.00,841.4L146.00,841.4L146.00,840.5L145.00,840.5L145.00,841.5L144.00,841.5L144.00,841.0L143.00,841.0L143.00,840.9L142.00,840.9L142.00,843.1L141.00,843.1L141.00,840.3L140.00,840.3L140.00,840.7L139.00,840.7L139.00,841.1L138.00,841.1L138.00,842.8L137.00,842.8L137.00,840.9L136.00,840.9L136.00,841.6L135.00,841.6L135.00,843.7L134.00,843.7L134.00,842.2L133.00,842.2L133.00,843.8L132.00,843.8L132.00,842.3L131.00,842.3L131.00,843.0L130.00,843.0L130.00,843.1L129.00,843.1L129.00,842.9L128.00,842.9L128.00,842.6L127.00,842.6L127.00,842.2L126.00,842.2L126.00,842.7L125.00,842.7L125.00,843.2L124.00,843.2L124.00,843.8L123.00,843.8L123.00,841.5L122.00,841.5L122.00,842.1L121.00,842.1L121.00,842.1L120.00,842.1L120.00,842.9L119.00,842.9L119.00,843.5L118.00,843.5L118.00,841.7L117.00,841.7L117.00,845.0L116.00,845.0L116.00,842.9L115.00,842.9L115.00,842.1L114.00,842.1L114.00,844.3L113.00,844.3L113.00,842.1L112.00,842.1L112.00,842.9L111.00,842.9L111.00,841.9L110.00,841.9L110.00,841.8L109.00,841.8L109.00,841.7L108.00,841.7L108.00,843.4L107.00,843.4L107.00,843.8L106.00,843.8L106.00,843.1L105.00,843.1L105.00,843.3L104.00,843.3L104.00,843.7L103.00,843.7L103.00,841.6L102.00,841.6L102.00,841.7L101.00,841.7L101.00,842.2L100.00,842.2L100.00,841.4L99.00,841.4L99.00,841.1L98.00,841.1L98.00,841.7L97.00,841.7L97.00,841.4L96.00,841.4L96.00,840.8L95.00,840.8L95.00,842.5L94.00,842.5L94.00,840.2L93.00,840.2L93.00,840.1L92.00,840.1L92.00,841.0L91.00,841.0L91.00,842.8L90.00,842.8L90.00,842.0L89.00,842.0L89.00,841.8L88.00,841.8L88.00,840.1L87.00,840.1L86.40,838.7L84.60,838.0L81.90,834.0L80.40,826.0L79.40,815.0L78.70,800.0L77.80,780.0L76.90,745.0L76.40,730.0L74.90,640.0L73.90,560.0L73.90,467.2L73.90,467.2L73.00,467.2L73.00,467.2L72.00,467.2L72.00,468.8L71.00,468.8L71.00,467.2L70.00,467.2L70.00,470.0L69.00,470.0L69.00,467.5L68.00,467.5L68.00,467.8L67.00,467.8L67.00,467.2L66.00,467.2L66.00,467.2L65.00,467.2L65.00,467.2L64.00,467.2L64.00,468.0L63.00,468.0L63.00,467.2L62.00,467.2L62.00,467.2L61.00,467.2L61.00,467.2L60.00,467.2L60.00,467.2L59.00,467.2L59.00,467.2L58.00,467.2L58.00,468.0L57.00,468.0L57.00,467.2L56.00,467.2L56.00,467.4L55.00,467.4L55.00,467.2L54.00,467.2L54.00,467.2L53.00,467.2L53.00,468.6L52.00,468.6L52.00,468.8L51.00,468.8L51.00,471.1L50.00,471.1L50.00,468.9L49.00,468.9L49.00,469.4L48.00,469.4L48.00,468.2L47.00,468.2L47.00,467.7L46.00,467.7L46.00,468.1L45.00,468.1L45.00,469.5L44.00,469.5L44.00,470.5L43.00,470.5L43.00,469.3L42.00,469.3L42.00,471.7L41.00,471.7L41.00,469.1L40.00,469.1L40.00,472.7L39.00,472.7L39.00,469.1L38.00,469.1L38.00,469.1L37.00,469.1L37.00,470.0L36.00,470.0L36.00,469.2L35.00,469.2L35.00,470.2L34.00,470.2L34.00,468.9L33.00,468.9L33.00,471.6L32.00,471.6L32.00,470.4L31.00,470.4L31.00,470.7L30.00,470.7L30.00,471.2L29.00,471.2L29.00,470.1L28.00,470.1L28.00,468.4L27.00,468.4L27.00,471.9L26.00,471.9L26.00,469.7L25.00,469.7L25.00,469.7L24.00,469.7L24.00,470.3L23.00,470.3L23.00,468.6L22.00,468.6L22.00,469.5L21.00,469.5L21.00,469.1L20.00,469.1L20.00,469.3L19.00,469.3L19.00,468.5L18.00,468.5L18.00,469.8L17.00,469.8L17.00,470.0L16.00,470.0L16.00,471.2L15.00,471.2L15.00,470.0L14.00,470.0L14.00,470.4L13.00,470.4L13.00,468.6L12.00,468.6L12.00,468.8L11.00,468.8L11.00,469.7L10.00,469.7L10.00,469.3L9.00,469.3L9.00,468.1L8.00,468.1L8.00,470.1L7.00,470.1L7.00,468.0L6.00,468.0L6.00,470.3L5.00,470.3L5.00,469.6L4.00,469.6L4.00,468.1L3.00,468.1Z" fill="#14fdfb"/>
  <!-- magnifier corner -->
  <path d="M1714.7 61 L1749 61 L1749 95 Z" fill="#676767"/>
  <circle cx="1742.3" cy="67.3" r="3.6" fill="#555" stroke="#ececec" stroke-width="1.6"/>
  <line x1="1739.6" y1="70" x2="1733.5" y2="76" stroke="#ececec" stroke-width="2.4" stroke-linecap="round"/>
  <!-- C2 marker -->
  <path d="M8.5 937 L30 937 L41.2 948.7 L30 960.6 L8.5 960.6 Q7 960.6 7 959 L7 938.5 Q7 937 8.5 937 Z" fill="#14f8f8"/>
  <text x="16.5" y="952.2" font-family="Liberation Sans" font-size="9.5" font-weight="bold" fill="#06304a" letter-spacing="3.2">C2</text>
  <!-- trigger marker -->
  <path d="M869 54 L889 54 L879 63.5 Z" fill="#f6b21e"/>
  <path d="M870 65 L888 65 L888 84 L883 84 L879 91 L875 84 L870 84 Z" fill="#000" stroke="#f6b830" stroke-width="2"/>
  <path d="M874.5 70.5 H883.5 V72.6 H880.1 V81 H877.9 V72.6 H874.5 Z" fill="#f4c060"/>
 </svg>
 <div id="titlebar">
  <div id="ttl">Waveform View</div>
  <svg class="abs" style="left:0;top:0" width="1753" height="25" viewBox="3 29 1753 25">
   <path d="M600.5 33.7 H593.7 V49.3 H600.5" fill="none" stroke="#f6f6f6" stroke-width="1.6"/>
   <path d="M1159 33.7 H1165.8 V49.3 H1159" fill="none" stroke="#f6f6f6" stroke-width="1.6"/>
   <rect x="600" y="41" width="559" height="2" fill="#f4f4f4"/>
   <path d="M871.5 33 L887 33 L879.2 50 Z" fill="#f0a828"/>
   <path d="M875.5 36 H883 V37.8 H880.1 V45 H878.4 V37.8 H875.5 Z" fill="#8a2a6a"/>
   <rect x="1718" y="29" width="1" height="24" fill="#3c3c3c"/>
   <rect x="1730" y="45" width="18" height="2" fill="#d0d0d0"/>
  </svg>
 </div>
 <div class='yl' style='top:69px'><span style='background:#000;padding-left:2px'>4.50 V</span></div><div class='yl' style='top:162px'><span style='background:#000;padding-left:2px'>4 V</span></div><div class='yl' style='top:256px'><span style='background:#000;padding-left:2px'>3.50 V</span></div><div class='yl' style='top:350px'><span style='background:#000;padding-left:2px'>3 V</span></div><div class='yl' style='top:444px'><span style='background:#000;padding-left:2px'>2.50 V</span></div><div class='yl' style='top:538px'><span style='background:#000;padding-left:2px'>2 V</span></div><div class='yl' style='top:631px'><span style='background:#000;padding-left:2px'>1.50 V</span></div><div class='yl' style='top:725px'><span style='background:#000;padding-left:2px'>1 V</span></div><div class='yl' style='top:819px'><span style='background:#000;padding-left:2px'>500 mV</span></div><div class='yl' style='top:913px'><span style='background:#000;padding-left:2px'>0 V</span></div>
 <div class='xl' style='left:135px'>-8 µs</div><div class='xl' style='left:310px'>-6 µs</div><div class='xl' style='left:485px'>-4 µs</div><div class='xl' style='left:660px'>-2 µs</div><div class='xl' style='left:836px'>0 s</div><div class='xl' style='left:1011px'>2 µs</div><div class='xl' style='left:1186px'>4 µs</div><div class='xl' style='left:1361px'>6 µs</div><div class='xl' style='left:1536px'>8 µs</div>
</div>

<div class="abs" style="left:0;top:995px;width:1920px;height:8px;background:linear-gradient(#2a2a2a,#222)"></div>
<div class='cb' style='left:734px'><i style='background:#e8e83a'></i><span class='cbn'>1</span></div><div class='cb' style='left:779px'><i style='background:#e04060'></i><span class='cbn'>3</span></div><div class='cb' style='left:824px'><i style='background:#a8e040'></i><span class='cbn'>4</span></div><div class='cb' style='left:869px'><i style='background:#f0a830'></i><span class='cbn'>5</span></div><div class='cb' style='left:914px'><i style='background:#2828c8'></i><span class='cbn'>6</span></div><div class='cb' style='left:959px'><i style='background:#e060e0'></i><span class='cbn'>7</span></div><div class='cb' style='left:1004px'><i style='background:#30d8c0'></i><span class='cbn'>8</span></div><div class='cb' style='left:1065px'><i style='background:#e04050'></i><span class='cba'>Add<br>New<br>Math</span></div><div class='cb' style='left:1110px'><i style='background:#f0f0f0'></i><span class='cba'>Add<br>New<br>Ref</span></div><div class='cb' style='left:1155px'><i style='background:#c050e0'></i><span class='cba'>Add<br>New<br>Bus</span></div><div class='cb' style='left:1216px'><i style='background:#555'></i><span class='cbafg'>AFG</span></div>
<div class="sep" style="left:1053px"></div>
<div class="sep" style="left:1204px"></div>
<div class="sep" style="left:1265px"></div>

<div class="pn" style="left:1288px;width:199px">
 <div class="pnh">Horizontal</div>
 <div class="pt" style="left:5px;top:22px">2 µs/div</div>
 <div class="pt" style="left:96px;top:22px">20 µs durati…</div>
 <div class="pt" style="left:5px;top:41px">SR: 3.125 …</div>
 <div class="pt" style="left:96px;top:41px">320 ps/pt</div>
 <div class="pt" style="left:5px;top:60px">RL: 62.5 kpts</div>
 <svg class="abs" style="left:96px;top:60px" width="26" height="16">
  <path d="M1 1 H9.5 V9.3 H6.5 L5.2 11.5 L3.9 9.3 H1 Z" fill="#1a1a1a" stroke="#e0900c" stroke-width="1.2"/>
  <path d="M2.8 2.8 H7.7 V4.2 H5.9 V8.2 H4.6 V4.2 H2.8Z" fill="#fff"/>
  <line x1="10.5" y1="6" x2="14.5" y2="6" stroke="#c8c8d8" stroke-width="1"/>
  <path d="M14 1 L21.5 1 L17.8 6.5 Z" fill="#f0a010"/>
 </svg>
 <div class="pt" style="left:130px;top:60px">0 s</div>
</div>
<div class="pn" style="left:1497px;width:150px">
 <div class="pnh">Trigger</div>
 <div class="abs" style="left:6px;top:23px;width:30px;height:17px;border-radius:9px;background:#ea2a4c;border:2px solid #5a0a14;color:#3a0a10;font-size:15px;line-height:13px;text-align:center;-webkit-text-stroke:0.4px #3a0a10">3</div>
 <div class="pt" style="left:46px;top:22px">Pulse Width</div>
 <svg class="abs" style="left:5px;top:44px" width="18" height="13">
  <path d="M0.5 11.5 H4 V1 H12 V11.5 H16" fill="none" stroke="#222" stroke-width="1.3"/>
  <line x1="3.5" y1="5.5" x2="12.5" y2="5.5" stroke="#bbb" stroke-width="1"/>
  <circle cx="4" cy="5.5" r="1.3" fill="#111"/><circle cx="12" cy="5.5" r="1.3" fill="#111"/>
 </svg>
 <div class="pt" style="left:32px;top:41px">&lt; 68.32 ns</div>
 <div class="pt" style="left:6px;top:60px">1.42 V</div>
</div>
<div class="pn" style="left:1667px;width:150px">
 <div class="pnh">Acquisition</div>
 <svg class="abs" style="left:133px;top:4px" width="14" height="12">
  <path d="M6.5 0.5 L13 11.5 L0 11.5 Z" fill="#f2e41e"/>
  <path d="M5.8 3.5 H7.2 L7 8 H6 Z" fill="#222"/><rect x="5.9" y="9" width="1.3" height="1.4" fill="#222"/>
 </svg>
 <div class="pt" style="left:6px;top:22px">Auto,</div>
 <div class="pt" style="left:66px;top:22px">Analyze</div>
 <div class="pt" style="left:6px;top:41px">HiRes</div>
 <div class="pt" style="left:6px;top:60px">124 Acqs</div>
</div>
<div class="abs" style="left:1818px;top:995px;width:99px;height:85px;background:linear-gradient(90deg,#222,#171515 9px)"></div>
<div class="abs" style="left:1827px;top:1001px;width:90px;height:35px;background:linear-gradient(#1cbc3c,#10a42e);border:1px solid #0c4c18;box-shadow:inset 0 0 0 1px #6ad27a;border-radius:3px;color:#d8fcd8;font-weight:bold;font-size:12.5px;text-align:center;line-height:33px;-webkit-text-stroke:0.3px #d8fcd8">Triggered</div>
<div class="abs" style="left:1827px;top:1039px;width:90px;height:35px;background:#f6f6f6;border-radius:4px;color:#111;font-size:14.7px;text-align:center;line-height:17.5px;padding-top:0px;-webkit-text-stroke:0.25px #111">14 Oct 2016<br>2:27:13 PM</div>

<div class="abs" style="left:1917px;top:26px;width:2px;height:1054px;background:#080808"></div>
<div class="abs" style="left:1919px;top:26px;width:1px;height:1054px;background:#e6e6e6"></div>
<!-- Ch2 badge -->
<div class="abs" style="left:4px;top:998px;width:89px;height:76px;background:linear-gradient(90deg,#f6f6f6,#f0eef0);border-radius:4px;overflow:hidden">
 <div class="abs" style="left:0;top:0;width:89px;height:20px;background:#12f6f8;color:#0c3c48;font-size:15px;line-height:19px;padding-left:5px;-webkit-text-stroke:0.3px #0c3c48">Ch 2</div>
 <div class="pt" style="left:6px;top:22px;font-size:15px">500 mV/div</div>
 <div class="pt" style="left:6px;top:41px;font-size:15px">1 MΩ</div>
 <div class="pt" style="left:6px;top:59px;font-size:15px">500 MHz</div>
 <div class="pt" style="left:71px;top:57px;font-size:9px;line-height:10px">B<sub style="font-size:8px;vertical-align:-2px">w</sub></div>
</div>
<div class="abs" style="left:-2px;top:985.5px;width:113.5px;height:95px;border:5.5px solid #e80c0c;border-radius:12px"></div>
</body></html>
